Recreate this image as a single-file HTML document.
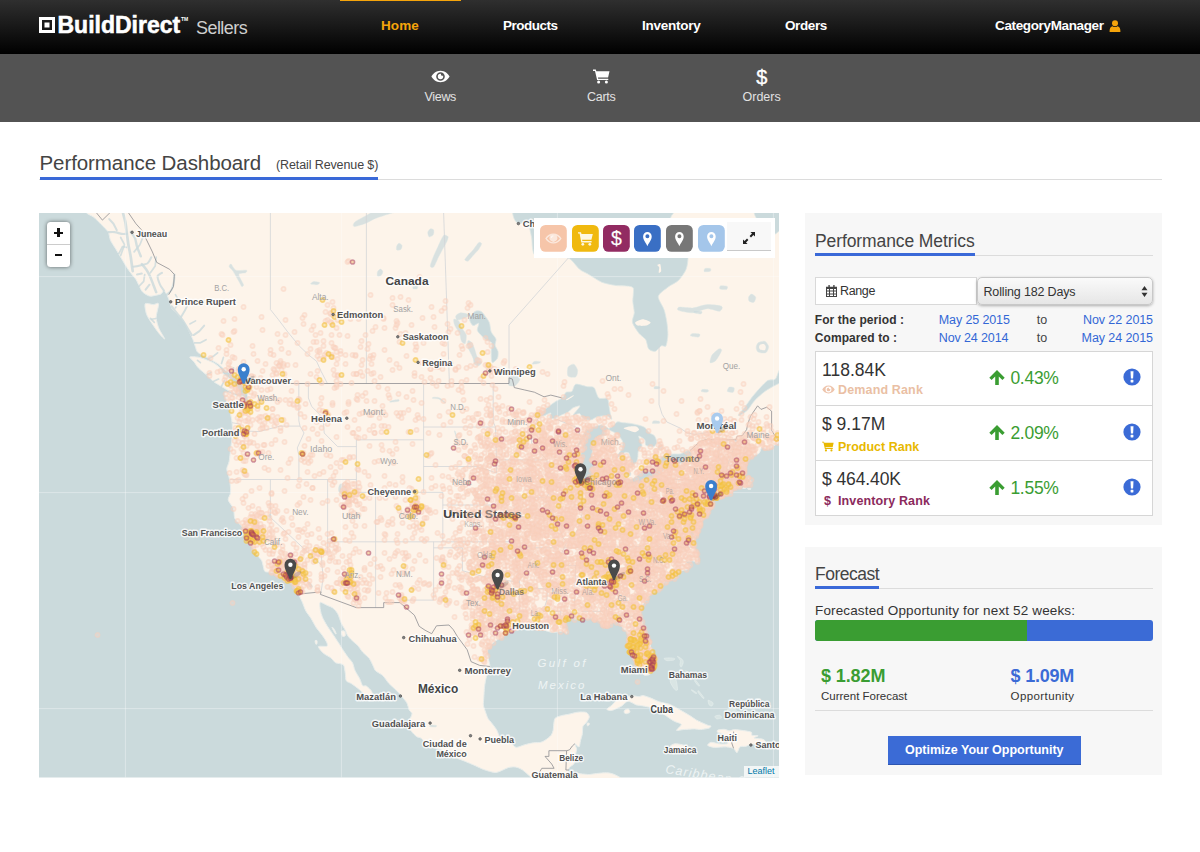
<!DOCTYPE html>
<html lang="en">
<head>
<meta charset="utf-8">
<title>BuildDirect Sellers - Performance Dashboard</title>
<style>
*{box-sizing:border-box;margin:0;padding:0}
html,body{width:1200px;height:852px;background:#fff;overflow:hidden}
body{position:relative;font-family:"Liberation Sans",sans-serif;color:#333;font-size:13px}
.abs{position:absolute;white-space:nowrap;line-height:1}
#hdr{position:absolute;left:0;top:0;width:1200px;height:53.5px;background:linear-gradient(#2f2f2f 0%,#1a1a1a 45%,#000 100%)}
#sub{position:absolute;left:0;top:53.5px;width:1200px;height:68px;background:#535353}
#homebar{position:absolute;left:340px;top:0;width:121px;height:1.3px;background:#f5a40b}
.nav{font-weight:bold;font-size:13.5px;color:#fff;top:19px}
.snav{font-size:12.5px;color:#e2e2e2;top:91px}
#logo{left:57.5px;top:14px;font-weight:bold;font-size:23px;letter-spacing:0;color:#fff;-webkit-text-stroke:.55px #fff}
#sellers{left:196px;top:19px;font-size:18px;color:#cfcfcf;letter-spacing:-0.55px}
.panel{position:absolute;left:805px;width:357px;background:#f7f7f7}
.hline{position:absolute;height:1px;background:#dcdcdc}
.bline{position:absolute;height:3px;background:#3a69d8}
.h2{font-size:17.5px;color:#444;letter-spacing:-.1px}
.blue{color:#3367d6}
.b{font-weight:bold}
</style>
</head>
<body>
<div id="hdr"></div>
<div id="homebar"></div>
<div id="sub"></div>

<!-- logo -->
<svg class="abs" style="left:39.300px;top:17.300px" width="16" height="16" viewBox="0 0 16 16"><path fill="#fff" fill-rule="evenodd" d="M0 0h16v16H0zM3 3v10h10V3zM5.5 5.500h5v5h-5z"/></svg>
<div id="logo" class="abs">BuildDirect</div>
<div class="abs" style="left:181px;top:17px;font-size:5px;color:#fff;font-weight:bold">TM</div>
<div id="sellers" class="abs">Sellers</div>

<div class="abs nav" style="left:381px;letter-spacing:.12px;color:#f5a40b">Home</div>
<div class="abs nav" style="left:503px;letter-spacing:-.5px">Products</div>
<div class="abs nav" style="left:642px;letter-spacing:-.26px">Inventory</div>
<div class="abs nav" style="left:785px;letter-spacing:-.38px">Orders</div>
<div class="abs nav" style="left:995px;letter-spacing:-.36px">CategoryManager</div>
<svg class="abs" style="left:1109px;top:20px" width="12" height="12" viewBox="0 0 12 12"><circle cx="6" cy="3.2" r="3" fill="#f5a40b"/><path fill="#f5a40b" d="M0.6 12c-.3-3.6 1.2-5.6 3-5.8.7.6 1.5.9 2.4.9s1.700-.3 2.400-.9c1.800.2 3.300 2.200 3 5.800z"/></svg>

<!-- subnav -->
<svg class="abs" style="left:431px;top:70px" width="19" height="13" viewBox="0 0 19 13"><path fill="#fff" fill-rule="evenodd" d="M9.500.8C5.200.8 1.900 3.700.4 6.500c1.500 2.800 4.800 5.700 9.100 5.700s7.600-2.900 9.100-5.700C17.100 3.700 13.800.8 9.500.8zM9.500 2.200a4.300 4.300 0 1 1 0 8.600 4.300 4.300 0 0 1 0-8.600zM9.500 3.800a2.700 2.700 0 1 0 2.700 2.700c0-.3 0-.5-.1-.8a1.500 1.500 0 0 1-2-2c-.2.100-.4.100-.6.100z"/></svg>
<div class="abs snav" style="left:424.5px;letter-spacing:-.32px">Views</div>
<svg class="abs" style="left:593px;top:69px" width="17" height="15" viewBox="0 0 17 15"><path fill="#fff" d="M0 .6h2.800l.5 1.600h13.200l-1.400 6.200H4.900l.3 1.300h10.100v1.400H4.100L2 2H0z"/><circle cx="5.600" cy="13" r="1.500" fill="#fff"/><circle cx="13.400" cy="13" r="1.500" fill="#fff"/></svg>
<div class="abs snav" style="left:587px;letter-spacing:-.28px">Carts</div>
<div class="abs" style="left:756.300px;top:66.500px;font-size:20px;color:#fff;-webkit-text-stroke:.35px #fff">$</div>
<div class="abs snav" style="left:742.5px">Orders</div>

<!-- title -->
<div class="abs" style="left:39.5px;top:153px;font-size:20.5px;letter-spacing:-.08px;color:#444">Performance Dashboard</div>
<div class="abs" style="left:276px;top:159px;font-size:12.5px;letter-spacing:-.11px;color:#444">(Retail Revenue $)</div>
<div class="hline" style="left:39px;top:179px;width:1123px"></div>
<div class="bline" style="left:39.500px;top:176.500px;width:338.500px"></div>

<svg class="abs" style="left:38.5px;top:213px" width="740.5" height="564.5" viewBox="38.5 213 740.5 564.5">
<rect x="38.5" y="213" width="740.5" height="564.5" fill="#cbdadc"/>
<g fill="#fdf4ea" stroke="#e9eeec" stroke-width="1" stroke-linejoin="round">
<path d="M82.7 200.2C-8.7 201.7 83.3 209.4 84.7 211.6C86.0 213.9 91.2 215.6 93.3 217.3C95.4 219.0 99.1 222.8 101.0 224.7C102.8 226.6 106.5 230.0 107.7 232.1C108.9 234.1 109.0 238.2 110.0 240.4C111.0 242.6 114.0 246.9 115.4 249.2C116.8 251.5 119.2 255.6 120.7 258.0C122.1 260.4 125.1 265.6 126.4 267.6C127.7 269.6 129.5 272.1 130.7 273.6C131.9 275.2 134.5 278.0 135.5 279.6C136.6 281.3 138.0 284.7 138.9 286.4C139.8 288.0 140.9 291.0 142.3 292.2C143.6 293.5 147.4 295.7 149.0 296.1C150.6 296.5 153.2 295.7 154.7 295.4C156.2 295.1 159.4 294.5 160.5 293.9C161.6 293.3 162.6 290.5 163.4 290.6C164.1 290.7 165.5 293.3 166.3 294.7C167.0 296.1 168.5 299.6 169.1 301.4C169.8 303.1 170.2 306.4 171.1 307.9C171.9 309.4 174.2 311.5 175.4 312.8C176.5 314.0 178.6 316.4 179.7 317.6C180.8 318.9 182.9 320.7 184.0 322.4C185.1 324.2 187.2 328.9 188.3 331.1C189.4 333.4 191.6 337.6 192.5 339.7C193.3 341.9 194.5 345.9 195.1 347.5C195.6 349.1 196.1 351.1 197.0 352.1C197.8 353.1 200.0 354.1 201.8 355.1C203.5 356.1 208.3 358.5 210.4 359.7C212.5 360.9 216.3 362.9 218.1 364.2C219.8 365.5 222.1 368.1 223.9 369.4C225.6 370.8 229.7 373.5 231.5 374.6C233.4 375.8 237.1 377.2 238.3 378.3C239.4 379.5 239.3 382.2 240.2 383.5C241.0 384.7 244.1 386.3 245.0 387.9C245.8 389.4 246.5 393.0 246.9 395.1C247.3 397.1 248.1 401.7 247.9 403.7C247.6 405.6 245.7 409.2 245.0 410.1C244.2 410.9 242.2 411.1 242.1 410.1C242.0 409.0 243.9 404.0 244.0 402.3C244.1 400.5 243.9 397.4 243.1 396.5C242.2 395.7 239.7 396.4 237.3 395.8C234.9 395.2 226.3 391.7 224.8 392.2C223.3 392.7 225.1 396.8 225.8 399.4C226.4 402.0 228.9 409.2 229.6 412.2C230.4 415.1 231.2 419.3 231.5 422.0C231.8 424.7 232.1 430.0 232.0 433.0C231.9 436.0 231.0 441.6 230.6 445.2C230.1 448.9 229.2 458.1 228.7 461.2C228.1 464.4 226.2 466.8 226.3 469.1C226.3 471.5 228.6 476.5 229.1 479.5C229.6 482.6 230.3 489.7 230.1 492.4C229.9 495.0 227.3 497.8 227.7 500.0C228.1 502.1 232.1 506.3 233.0 508.7C233.8 511.2 233.4 516.4 234.4 518.7C235.5 520.9 239.6 524.3 241.1 526.0C242.6 527.8 244.7 531.6 245.9 532.1C247.2 532.6 250.2 529.2 250.7 529.7C251.2 530.2 250.3 535.0 249.8 535.8C249.2 536.5 246.8 535.2 246.4 535.8C246.0 536.3 246.3 539.1 246.9 540.0C247.5 540.8 250.1 541.5 250.7 542.4C251.4 543.2 250.9 545.0 251.7 546.6C252.4 548.2 255.2 553.1 256.5 554.9C257.7 556.8 260.4 558.8 261.3 560.8C262.2 562.8 263.1 568.8 263.7 570.2C264.3 571.6 264.4 571.6 265.6 571.9C266.8 572.3 271.3 572.0 272.8 572.5C274.4 573.0 276.1 575.2 277.6 575.8C279.1 576.4 283.3 576.6 284.3 577.2C285.3 577.7 284.5 579.5 285.3 580.1C286.0 580.7 288.7 580.7 290.1 581.8C291.5 582.9 294.9 587.1 295.9 588.7C296.9 590.2 297.0 592.1 297.8 593.8C298.5 595.5 300.6 599.5 301.6 601.8C302.6 604.0 304.3 609.2 305.5 611.3C306.6 613.4 308.9 615.9 310.3 618.0C311.6 620.2 314.6 625.9 316.0 628.0C317.4 630.1 319.6 632.3 320.8 634.0C322.1 635.8 324.9 639.6 325.6 641.2C326.4 642.7 327.6 645.3 326.6 646.1C325.6 646.8 318.4 645.7 317.9 646.6C317.4 647.5 321.1 651.6 322.7 653.1C324.4 654.6 328.8 656.7 330.4 657.9C332.0 659.2 333.6 661.9 335.2 662.8C336.8 663.7 341.6 663.5 342.9 664.9C344.1 666.3 344.4 671.4 344.8 673.4C345.2 675.5 344.9 679.5 345.8 680.8C346.6 682.2 349.4 682.5 351.5 684.0C353.7 685.5 360.2 690.5 362.1 692.4C364.0 694.3 365.2 698.4 366.4 698.9C367.6 699.4 370.6 697.0 371.2 696.1C371.8 695.1 371.9 692.7 371.2 691.4C370.5 690.1 367.1 686.9 365.9 686.1C364.7 685.4 363.0 686.5 362.1 685.6C361.2 684.6 360.2 680.7 359.2 678.7C358.2 676.7 355.3 672.3 354.4 670.2C353.5 668.2 352.9 664.4 352.0 662.8C351.1 661.1 348.8 658.8 347.7 657.4C346.6 656.0 345.0 653.7 343.9 652.0C342.7 650.3 340.4 646.5 339.1 644.4C337.7 642.3 334.9 638.1 333.3 635.7C331.7 633.3 328.1 628.2 326.6 625.8C325.1 623.3 322.6 618.9 321.8 616.9C320.9 614.9 320.2 612.0 319.9 610.2C319.5 608.4 319.1 603.8 319.4 602.9C319.6 601.9 320.7 602.5 321.8 602.9C322.8 603.3 326.2 605.1 327.5 605.7C328.9 606.4 331.1 606.9 332.3 608.0C333.6 609.0 336.0 611.5 337.1 613.6C338.3 615.6 340.0 621.4 341.0 623.6C342.0 625.7 344.0 628.6 344.8 630.2C345.6 631.8 346.1 634.1 347.2 635.7C348.3 637.3 352.1 641.0 353.5 642.2C354.8 643.5 356.2 644.2 357.3 645.5C358.4 646.8 360.6 650.3 362.1 652.0C363.6 653.7 367.4 656.7 368.8 658.5C370.2 660.3 371.8 664.4 372.7 666.0C373.5 667.6 373.8 669.5 375.1 670.8C376.3 672.0 380.6 674.0 382.3 675.6C383.9 677.1 386.3 681.0 388.0 683.0C389.8 684.9 394.1 688.7 395.7 690.3C397.3 691.9 399.1 693.9 400.5 695.5C401.9 697.2 405.2 700.9 406.3 702.8C407.3 704.7 408.0 708.7 408.7 710.1C409.3 711.5 411.5 712.4 411.5 713.7C411.6 715.0 409.1 719.3 409.1 720.4C409.1 721.5 411.8 721.4 411.5 721.9C411.3 722.5 407.3 723.2 407.2 724.5C407.2 725.8 409.9 730.1 411.1 731.6C412.2 733.2 415.1 735.9 416.3 736.7C417.6 737.6 419.1 737.1 420.7 738.3C422.2 739.5 425.7 744.4 428.3 745.9C431.0 747.3 438.4 748.7 440.8 749.6C443.2 750.5 445.0 752.0 446.6 752.9C448.2 753.9 451.2 755.9 453.3 757.0C455.4 758.0 460.0 759.5 462.9 760.7C465.8 761.8 472.8 764.8 475.4 766.0C478.0 767.1 480.4 768.6 483.1 769.5C485.7 770.3 492.3 772.7 495.5 772.5C498.8 772.2 505.5 768.2 508.0 767.5C510.5 766.8 513.1 766.8 514.7 767.0C516.4 767.2 519.0 768.1 520.5 769.0C522.0 769.8 524.9 772.3 526.3 773.5C527.6 774.6 529.7 776.6 531.1 777.9C532.4 779.3 534.6 781.8 536.8 783.9C539.1 786.0 536.9 792.5 548.3 793.8C559.8 795.1 615.4 795.5 625.1 793.8C634.9 792.1 623.8 783.0 623.2 780.9C622.6 778.9 621.7 778.8 620.3 777.9C619.0 777.0 614.5 774.6 612.7 774.0C610.8 773.3 608.1 772.8 605.9 772.8C603.8 772.7 598.6 773.2 596.3 773.5C594.1 773.7 590.5 774.4 588.7 774.5C586.8 774.5 583.4 774.1 581.9 774.0C580.5 773.8 578.5 773.4 577.6 773.5C576.7 773.5 576.0 774.1 575.2 774.2C574.4 774.2 572.3 774.2 571.4 773.8C570.4 773.3 568.3 771.8 568.0 771.0C567.7 770.2 568.3 768.4 569.0 767.5C569.7 766.6 572.5 765.1 573.3 764.0C574.0 762.9 574.5 760.3 574.7 759.0C575.0 757.7 575.0 755.2 575.2 753.9C575.4 752.6 576.3 750.2 576.2 748.9C576.0 747.6 573.9 744.1 574.3 743.8C574.6 743.6 577.8 747.3 578.6 746.9C579.3 746.5 579.6 742.5 580.0 740.8C580.4 739.1 581.6 735.5 581.9 733.7C582.2 731.8 581.9 728.1 582.4 726.5C583.0 725.0 585.4 723.2 586.3 721.9C587.1 720.7 588.9 718.0 588.8 716.8C588.8 715.6 587.3 713.0 585.8 712.4C584.3 711.8 579.5 711.9 577.1 712.2C574.8 712.4 569.6 714.0 567.5 714.4C565.5 714.9 563.0 714.9 561.3 715.5C559.6 716.0 555.6 717.0 554.6 718.3C553.5 719.6 553.4 724.0 553.1 725.5C552.9 727.1 553.0 728.9 552.7 730.1C552.3 731.4 551.8 733.9 550.7 735.2C549.7 736.5 545.9 739.4 544.5 740.3C543.1 741.2 541.7 742.0 540.2 742.3C538.7 742.7 535.0 742.5 533.0 742.8C530.9 743.1 526.6 744.1 524.3 744.7C522.1 745.2 517.6 747.6 515.7 747.4C513.8 747.1 511.7 743.7 509.9 742.8C508.2 742.0 503.7 741.6 502.3 740.8C500.8 740.0 499.9 738.2 499.1 736.7C498.3 735.3 497.1 731.5 496.0 729.6C494.9 727.8 491.9 723.9 490.7 722.4C489.6 721.0 488.2 720.1 487.4 718.3C486.5 716.6 484.6 710.8 484.0 709.1C483.4 707.3 482.9 706.4 482.9 704.9C482.8 703.4 483.2 699.9 483.3 697.6C483.5 695.3 483.7 689.9 484.0 687.2C484.3 684.4 485.2 679.3 485.9 676.6C486.6 673.9 489.0 668.6 489.3 666.5C489.6 664.4 488.6 662.5 488.3 660.6C488.0 658.7 486.8 653.8 486.9 652.0C487.0 650.2 487.8 648.0 488.8 646.6C489.8 645.2 493.1 642.3 494.6 641.2C496.1 640.0 498.7 638.8 500.3 637.9C502.0 637.0 505.6 635.0 507.1 634.0C508.6 633.1 511.4 631.3 511.9 630.2C512.3 629.1 510.2 626.1 510.4 625.8C510.7 625.5 512.7 627.9 513.8 628.0C514.8 628.1 517.0 626.7 518.6 626.3C520.2 626.0 524.0 624.9 526.3 625.0C528.5 625.2 534.0 627.1 535.9 627.4C537.7 627.8 539.4 627.0 540.7 627.4C541.9 627.9 544.0 630.1 545.5 630.8C547.0 631.4 550.7 632.3 552.2 632.4C553.7 632.5 555.6 632.0 557.0 631.9C558.3 631.7 561.5 631.1 562.7 631.3C563.9 631.5 565.7 633.7 566.1 633.5C566.5 633.3 566.2 630.5 565.6 629.7C565.1 628.8 562.0 627.7 561.8 626.9C561.5 626.1 563.7 624.4 563.7 623.6C563.7 622.8 561.6 621.4 561.8 620.8C561.9 620.2 563.3 619.4 564.7 619.1C566.0 618.9 570.8 618.6 572.3 618.6C573.8 618.6 575.5 619.6 576.2 619.1C576.8 618.7 576.8 615.2 577.1 615.2C577.4 615.2 577.6 618.7 578.6 619.1C579.6 619.6 583.1 618.7 584.8 618.6C586.5 618.4 589.7 617.7 591.5 618.0C593.4 618.4 597.8 620.1 599.2 621.1C600.6 622.2 601.6 625.5 602.6 626.1C603.5 626.7 605.2 626.0 606.4 625.6C607.7 625.1 611.0 623.0 612.2 622.5C613.4 621.9 614.6 621.2 615.5 621.4C616.5 621.5 618.4 622.6 619.4 623.6C620.4 624.6 622.2 627.9 623.2 629.1C624.2 630.3 626.4 631.7 627.1 633.0C627.7 634.2 628.5 637.3 628.5 639.0C628.5 640.6 626.8 644.5 627.1 645.5C627.3 646.5 630.2 645.9 630.4 646.6C630.7 647.3 628.7 649.5 629.0 650.9C629.3 652.3 632.0 656.1 632.8 657.4C633.6 658.7 634.7 660.2 635.2 661.2C635.7 662.1 635.8 663.9 636.7 664.9C637.5 665.9 640.6 667.9 641.5 669.2C642.3 670.5 642.5 674.3 643.4 675.0C644.2 675.8 647.3 675.2 648.2 675.0C649.0 674.8 649.7 674.1 650.1 673.4C650.5 672.8 651.2 670.9 651.5 670.2C651.9 669.5 652.5 669.5 652.8 668.1C653.1 666.7 653.7 661.5 653.6 659.5C653.6 657.6 653.0 654.8 652.5 653.1C652.0 651.4 650.6 648.3 650.1 646.6C649.6 644.9 649.3 641.8 648.7 640.1C648.0 638.4 646.2 635.6 645.3 633.5C644.4 631.4 642.6 625.6 641.9 623.6C641.3 621.6 640.7 619.6 640.5 618.0C640.2 616.4 639.8 613.1 640.0 611.3C640.3 609.6 641.7 606.1 642.4 604.6C643.1 603.1 644.3 601.4 645.3 600.1C646.3 598.7 648.8 595.5 650.1 594.4C651.3 593.3 653.5 592.4 654.9 591.5C656.3 590.7 659.5 588.7 660.7 587.5C661.8 586.3 662.7 583.5 663.5 582.4C664.4 581.2 666.1 579.4 667.4 578.9C668.7 578.4 672.1 579.5 673.6 578.6C675.1 577.6 677.2 572.5 678.9 571.4C680.6 570.2 685.2 570.4 686.6 569.6C687.9 568.9 689.6 566.5 689.5 565.5C689.3 564.5 685.2 562.6 685.6 562.0C686.0 561.4 690.9 560.7 692.3 560.8C693.8 560.9 696.0 563.2 696.7 562.6C697.3 562.0 697.6 558.2 697.1 556.1C696.7 554.0 693.9 548.3 693.3 546.6C692.7 544.8 692.9 543.4 692.3 542.7C691.8 542.1 689.3 542.7 689.0 541.8C688.6 540.9 689.5 537.3 689.5 535.8C689.5 534.2 689.7 531.0 689.0 529.7C688.2 528.4 683.8 526.8 683.7 526.0C683.6 525.2 687.5 524.7 688.0 523.6C688.5 522.5 687.5 518.6 687.5 517.4C687.5 516.2 687.4 515.1 688.0 514.3C688.6 513.5 692.0 510.7 692.3 511.2C692.7 511.8 691.1 516.7 690.9 518.7C690.6 520.6 690.0 524.4 690.4 526.0C690.8 527.6 693.5 529.1 693.8 530.9C694.1 532.7 692.3 539.5 692.6 540.0C692.9 540.5 695.2 536.2 696.2 534.5C697.1 532.9 699.4 528.7 700.0 527.2C700.7 525.8 701.0 524.5 701.2 523.6C701.3 522.6 701.4 520.8 701.0 519.9C700.6 518.9 698.7 517.3 698.1 516.2C697.5 515.1 696.5 511.5 696.7 511.2C696.8 510.9 698.3 512.8 699.1 513.7C699.8 514.6 701.3 518.2 702.4 518.0C703.5 517.9 706.6 514.0 707.7 512.5C708.8 510.9 710.1 507.9 710.6 506.2C711.1 504.6 711.5 501.2 711.5 500.0C711.5 498.7 710.4 497.5 710.6 496.8C710.7 496.1 711.9 495.5 712.5 494.9C713.1 494.3 713.6 493.1 714.9 492.4C716.1 491.6 720.2 489.4 722.1 488.9C724.0 488.4 728.0 488.7 729.8 488.5C731.5 488.3 734.7 488.3 735.5 487.5C736.4 486.7 736.1 482.3 736.5 482.1C736.9 481.9 737.9 485.6 738.4 486.0C739.0 486.4 740.1 485.4 740.8 485.3C741.5 485.2 742.5 485.5 743.7 485.3C744.9 485.1 749.1 484.4 749.9 483.8C750.8 483.2 750.7 481.5 750.4 480.8C750.2 480.2 748.1 478.5 748.0 478.6C747.9 478.8 749.8 481.7 749.5 482.1C749.1 482.6 745.9 482.5 745.1 482.1C744.3 481.8 743.8 480.4 743.2 479.5C742.6 478.7 740.2 476.7 740.3 475.7C740.5 474.6 743.9 472.1 744.2 471.1C744.4 470.1 742.3 468.8 742.3 467.8C742.3 466.9 743.5 465.2 744.2 463.9C744.9 462.6 746.5 459.0 747.5 457.9C748.5 456.9 750.4 456.5 751.9 455.9C753.3 455.3 757.3 454.4 758.6 453.3C759.8 452.1 760.3 447.8 761.5 447.3C762.6 446.7 765.7 449.4 767.2 449.3C768.7 449.1 771.5 446.8 773.0 445.9C774.5 445.0 776.7 443.7 778.7 442.5C780.7 441.4 787.1 468.6 788.3 437.1C789.6 405.6 880.1 231.0 788.3 200.2C696.6 169.4 174.2 198.7 82.7 200.2Z"/>
<path d="M189.3 356.9C190.0 356.4 195.9 356.7 198.9 357.4C201.9 358.1 209.6 361.0 212.3 362.4C215.0 363.8 218.2 366.5 219.5 367.9C220.9 369.4 221.3 372.3 222.9 373.9C224.5 375.5 229.7 378.7 231.5 380.5C233.3 382.4 235.9 386.4 236.8 387.9C237.7 389.3 238.4 391.2 238.3 391.9C238.1 392.7 236.7 393.8 235.4 393.6C234.0 393.5 229.6 391.4 227.7 390.5C225.8 389.5 222.8 387.5 221.0 386.4C219.1 385.3 215.2 383.2 213.3 381.7C211.4 380.3 208.6 377.2 206.6 375.4C204.6 373.6 199.6 369.7 197.9 367.9C196.2 366.2 194.7 363.4 193.6 361.9C192.5 360.5 188.6 357.5 189.3 356.9Z"/>
<path d="M144.7 303.8C145.5 302.5 151.1 304.6 152.8 304.6C154.6 304.6 157.7 302.1 158.1 303.8C158.5 305.5 155.6 314.4 155.7 317.6C155.8 320.8 157.4 326.0 158.6 328.8C159.7 331.5 164.3 338.3 164.3 339.0C164.3 339.6 160.2 335.4 158.6 333.5C157.0 331.5 153.5 326.5 151.9 324.0C150.2 321.5 147.0 317.0 146.1 314.4C145.2 311.8 143.8 305.1 144.7 303.8Z"/>
<path d="M606.4 709.4C606.5 708.6 610.5 706.0 611.7 704.9C612.9 703.8 614.0 701.7 615.5 700.8C617.0 699.8 621.2 698.3 623.2 697.6C625.2 697.0 629.2 696.0 631.2 695.9C633.2 695.7 637.1 696.6 638.6 696.6C640.0 696.5 641.0 695.4 642.4 695.5C643.8 695.7 647.0 696.8 649.1 697.6C651.3 698.4 656.1 700.9 658.7 701.8C661.4 702.7 666.5 703.3 669.3 704.4C672.0 705.5 677.1 708.5 679.9 710.1C682.6 711.6 688.4 715.0 690.4 716.3C692.5 717.6 693.6 718.7 695.7 719.9C697.8 721.0 704.8 724.2 706.7 725.0C708.6 725.8 710.0 725.6 710.3 726.0C710.5 726.4 710.0 727.6 708.7 728.1C707.3 728.5 701.9 729.5 700.0 729.6C698.1 729.7 696.0 728.9 693.8 728.9C691.5 728.9 685.0 729.4 682.7 729.6C680.4 729.8 676.3 731.0 676.0 730.3C675.8 729.7 681.1 725.7 680.8 724.5C680.6 723.3 675.7 722.3 674.1 721.4C672.5 720.6 670.3 719.2 668.3 717.8C666.3 716.5 661.2 712.5 658.7 711.1C656.3 709.8 651.7 708.2 649.6 707.5C647.5 706.8 644.2 706.3 642.4 705.9C640.6 705.6 636.9 705.2 635.7 704.9C634.4 704.6 633.9 703.8 632.8 703.4C631.7 702.9 628.6 700.9 627.1 701.3C625.6 701.6 622.8 705.0 621.3 705.9C619.8 706.9 616.9 708.2 615.5 708.8C614.2 709.5 611.9 710.5 610.7 710.6C609.5 710.7 606.3 710.1 606.4 709.4Z"/>
<path d="M624.2 710.1C624.7 709.6 627.3 708.8 628.0 709.1C628.7 709.3 629.7 711.6 629.5 712.2C629.2 712.8 626.8 713.6 626.1 713.7C625.3 713.8 623.9 713.1 623.7 712.7C623.4 712.2 623.6 710.6 624.2 710.1Z"/>
<path d="M669.6 746.2C670.0 745.7 672.5 744.0 674.1 743.8C675.7 743.6 680.0 744.3 681.8 744.7C683.6 745.0 686.9 746.3 688.0 746.9C689.1 747.5 690.8 749.0 690.4 749.4C690.0 749.8 685.9 749.6 684.7 749.9C683.4 750.2 682.2 751.7 680.8 751.7C679.4 751.7 675.3 750.7 674.1 750.1C672.8 749.5 671.8 747.9 671.2 747.4C670.6 746.9 669.2 746.6 669.6 746.2Z"/>
<path d="M717.3 730.1C718.2 729.7 722.5 729.2 724.0 729.3C725.5 729.4 727.5 730.8 728.8 730.8C730.1 730.9 732.2 729.6 734.1 729.6C736.0 729.6 741.0 730.3 743.2 730.6C745.4 731.0 749.8 731.6 750.9 732.2C752.0 732.8 750.5 734.8 751.4 735.2C752.2 735.7 757.3 735.4 757.6 735.7C757.9 736.1 753.1 737.5 753.8 738.0C754.4 738.4 760.8 738.6 762.4 739.3C764.0 739.9 765.8 741.8 766.0 742.8C766.1 743.8 764.2 746.6 763.4 746.9C762.5 747.1 761.2 745.2 759.5 744.9C757.9 744.5 752.8 744.1 750.9 744.3C749.0 744.5 746.6 746.0 745.1 746.4C743.6 746.7 740.5 746.0 739.4 746.9C738.2 747.7 737.3 752.5 736.5 752.7C735.7 752.9 734.5 749.4 733.1 748.6C731.8 747.8 728.4 747.0 725.9 746.9C723.4 746.7 716.4 747.6 713.9 747.4C711.5 747.2 707.6 746.0 707.2 745.4C706.8 744.7 708.9 742.5 710.6 742.3C712.3 742.2 718.0 743.9 720.2 744.0C722.4 744.2 726.9 744.2 727.4 743.3C727.9 742.5 724.5 738.9 724.0 737.8C723.5 736.6 724.4 734.9 723.5 734.2C722.7 733.5 718.1 733.0 717.3 732.5C716.5 731.9 716.4 730.5 717.3 730.1Z"/>
<path d="M718.3 739.8C718.9 739.9 722.5 741.0 723.1 741.3C723.6 741.6 723.2 742.4 722.6 742.3C721.9 742.3 718.8 741.1 718.3 740.8C717.7 740.5 717.6 739.7 718.3 739.8Z"/>
<path d="M776.1 745.2C777.6 744.5 786.2 743.9 788.3 744.0C790.4 744.2 792.0 745.7 792.2 746.4C792.3 747.0 791.3 748.8 789.3 749.2C787.3 749.6 778.5 749.9 776.8 749.4C775.1 748.9 774.6 745.9 776.1 745.2Z"/>
<path d="M586.7 723.0C587.0 722.7 589.0 723.1 589.1 723.5C589.3 723.8 588.0 725.5 587.7 725.7C587.4 726.0 586.9 725.9 586.7 725.5C586.6 725.2 586.4 723.2 586.7 723.0Z"/>
<path d="M711.2 497.2C711.6 496.7 713.3 494.4 714.4 493.9C715.6 493.3 718.6 493.4 720.2 493.0C721.8 492.6 725.4 491.3 726.9 491.1C728.4 490.9 732.1 491.0 732.0 491.5C731.9 491.9 727.7 493.6 725.9 494.3C724.1 495.0 720.1 496.3 718.3 496.8C716.4 497.3 712.9 497.8 712.0 497.8C711.1 497.9 710.9 497.7 711.2 497.2Z"/>
<path d="M747.1 488.5C747.4 488.4 749.8 488.4 750.2 488.5C750.6 488.6 750.3 489.3 749.9 489.4C749.6 489.5 747.9 489.3 747.5 489.2C747.2 489.1 746.7 488.6 747.1 488.5Z"/>
<path d="M742.3 487.9C742.6 487.6 744.7 486.6 745.1 486.6C745.6 486.6 745.9 487.6 745.6 487.9C745.3 488.1 743.2 488.5 742.7 488.5C742.3 488.5 741.9 488.1 742.3 487.9Z"/>
<path d="M341.0 631.3C341.3 630.7 343.8 630.7 344.3 631.3C344.8 631.9 345.1 635.1 344.8 635.7C344.5 636.3 342.4 636.8 341.9 636.2C341.4 635.7 340.7 631.9 341.0 631.3Z"/>
<path d="M331.4 627.4C331.2 626.8 332.7 627.8 333.3 628.5C333.9 629.3 335.5 632.9 335.7 633.5C335.9 634.1 335.3 634.3 334.7 633.5C334.2 632.7 331.6 628.1 331.4 627.4Z"/>
<path d="M314.6 640.6C314.8 640.2 316.2 640.2 316.5 640.6C316.7 641.0 316.7 643.5 316.5 643.9C316.3 644.3 315.3 644.3 315.1 643.9C314.8 643.5 314.4 641.0 314.6 640.6Z"/>
</g>
<g fill="#d9e5e4" stroke="#e6eeec" stroke-width=".6">
<path d="M671.2 675.0C671.8 674.2 673.5 674.7 674.1 675.6C674.7 676.4 675.6 680.0 676.0 681.9C676.4 683.7 677.2 688.8 677.0 689.8C676.7 690.7 675.0 690.3 674.1 689.3C673.2 688.2 670.1 683.7 669.8 681.9C669.4 680.0 670.7 675.8 671.2 675.0Z"/>
<path d="M663.5 658.5C663.8 658.1 667.0 657.9 668.3 657.9C669.7 657.9 673.5 658.2 674.1 658.5C674.7 658.8 674.1 659.8 673.1 660.1C672.1 660.4 667.7 660.8 666.4 660.6C665.2 660.4 663.3 658.8 663.5 658.5Z"/>
<path d="M677.0 656.3C677.2 656.2 681.0 658.7 681.8 659.5C682.5 660.4 682.9 661.8 682.7 662.8C682.6 663.7 681.2 666.8 680.8 667.0C680.4 667.3 679.5 665.7 679.4 664.9C679.2 664.1 680.2 661.7 679.9 660.6C679.5 659.5 676.7 656.5 677.0 656.3Z"/>
<path d="M684.7 670.8C684.8 670.6 688.6 672.3 689.5 673.4C690.3 674.6 690.9 679.0 690.9 679.8C690.9 680.5 689.8 679.9 689.5 679.3C689.1 678.6 688.6 675.6 688.0 674.5C687.4 673.4 684.5 670.9 684.7 670.8Z"/>
<path d="M714.4 716.3C714.8 715.8 718.3 715.0 719.2 715.3C720.1 715.5 721.5 717.4 721.1 717.8C720.8 718.3 717.2 719.1 716.3 718.9C715.5 718.7 714.0 716.7 714.4 716.3Z"/>
<path d="M698.1 690.8C698.8 691.5 702.8 696.7 703.4 697.6C703.9 698.6 703.2 698.8 702.4 698.2C701.7 697.5 698.2 693.4 697.6 692.4C697.1 691.5 697.3 690.2 698.1 690.8Z"/>
<path d="M694.7 679.8C695.4 680.3 698.7 684.8 699.1 685.6C699.4 686.3 698.2 686.1 697.6 685.6C697.0 685.0 694.6 682.1 694.3 681.4C693.9 680.6 694.1 679.2 694.7 679.8Z"/>
<path d="M691.4 689.8C692.0 690.1 695.7 692.5 696.2 692.9C696.7 693.4 695.8 693.7 695.2 693.5C694.6 693.2 691.9 691.3 691.4 690.8C690.9 690.4 690.7 689.5 691.4 689.8Z"/>
<path d="M707.7 700.2C708.2 700.0 712.0 702.1 712.5 702.8C713.0 703.6 712.0 705.7 711.5 705.9C711.0 706.2 709.2 705.7 708.7 704.9C708.2 704.2 707.2 700.5 707.7 700.2Z"/>
<path d="M726.9 709.6C727.8 709.3 733.4 708.9 734.6 709.1C735.7 709.3 736.4 710.9 735.5 711.1C734.7 711.4 729.0 711.3 727.9 711.1C726.7 710.9 726.0 709.8 726.9 709.6Z"/>
<path d="M677.5 675.8C677.8 675.6 680.0 675.6 680.3 675.8C680.6 675.9 680.2 676.7 679.9 676.8C679.5 677.0 677.8 677.0 677.5 676.8C677.1 676.7 677.1 675.9 677.5 675.8Z"/>
</g>
<g fill="#cbdadc" stroke="#dfe8e6" stroke-width=".8" stroke-linejoin="round">
<path d="M511.4 200.2C489.9 201.7 511.5 209.2 511.9 211.6C512.2 214.1 513.0 217.6 513.8 219.1C514.5 220.7 515.9 222.6 517.6 223.2C519.4 223.8 525.5 221.9 527.2 223.8C529.0 225.6 530.4 234.3 531.1 237.5C531.7 240.7 531.5 246.0 532.0 248.3C532.5 250.6 532.8 255.0 534.9 255.4C537.0 255.7 545.3 251.0 548.3 251.0C551.3 251.0 555.2 254.4 557.9 255.4C560.7 256.4 566.7 257.1 569.5 258.9C572.2 260.7 576.8 267.4 579.1 269.3C581.3 271.3 583.9 272.0 586.7 273.6C589.6 275.3 597.4 280.6 601.1 282.2C604.9 283.7 612.3 285.0 615.5 285.5C618.8 286.0 623.8 285.7 626.1 286.0C628.3 286.4 632.0 286.1 632.8 288.1C633.6 290.0 632.2 298.1 632.3 301.4C632.5 304.6 633.8 310.0 633.8 312.8C633.7 315.5 631.2 319.7 631.9 322.4C632.5 325.1 636.8 331.2 638.6 333.5C640.3 335.7 644.0 337.7 645.3 339.7C646.5 341.8 646.9 347.5 648.2 349.0C649.4 350.5 653.3 351.7 654.9 351.3C656.5 350.9 659.3 346.6 660.7 345.9C662.0 345.2 664.6 347.3 665.5 345.9C666.3 344.5 667.2 338.1 667.4 335.1C667.5 332.0 666.9 325.7 666.4 322.4C665.9 319.1 664.7 312.9 663.5 309.5C662.4 306.1 657.3 299.3 657.8 296.4C658.3 293.5 664.8 289.3 667.4 287.2C670.0 285.1 675.6 282.8 677.9 280.5C680.3 278.1 684.4 272.6 685.6 269.3C686.9 266.1 687.8 258.8 687.5 255.4C687.3 252.0 684.9 245.8 683.7 242.9C682.4 240.0 679.6 235.3 677.9 233.0C676.3 230.6 672.2 226.8 671.2 224.7C670.2 222.7 669.8 219.2 670.3 217.3C670.8 215.3 674.2 212.0 675.1 209.8C675.9 207.5 698.3 201.5 677.0 200.2C655.7 199.0 532.8 198.7 511.4 200.2Z"/>
<path d="M750.9 196.4C745.2 198.6 752.9 210.3 753.8 213.5C754.6 216.7 756.1 218.6 757.6 221.0C759.1 223.4 763.3 230.3 765.3 232.1C767.3 233.9 771.1 235.0 773.0 234.8C774.8 234.6 777.9 231.5 779.7 230.2C781.4 228.9 784.8 226.4 786.4 224.7C788.0 223.0 790.9 219.2 792.2 217.3C793.4 215.3 795.3 212.5 796.0 209.8C796.8 207.0 803.8 198.1 797.9 196.4C792.1 194.6 756.6 194.1 750.9 196.4Z"/>
<path fill-opacity=".72" stroke-opacity=".5" d="M481.1 243.8C481.1 243.0 479.4 241.8 478.3 242.6C477.1 243.4 474.0 248.3 472.5 250.1C471.0 251.9 467.8 255.0 466.7 256.3C465.7 257.5 464.2 259.2 464.3 259.8C464.5 260.4 466.5 261.7 467.7 261.0C468.9 260.3 472.1 256.0 473.5 254.5C474.8 253.0 477.3 250.6 478.3 249.2C479.3 247.8 481.1 244.7 481.1 243.8Z"/>
<path d="M537.8 415.7C538.0 414.8 543.2 410.5 545.5 408.6C547.7 406.8 552.9 402.9 555.1 401.5C557.2 400.2 560.4 399.2 561.8 398.0C563.1 396.8 564.4 393.0 565.6 392.2C566.9 391.4 570.1 392.5 571.4 391.5C572.6 390.4 573.2 384.8 575.2 384.2C577.2 383.6 584.4 386.3 586.7 386.7C589.1 387.1 592.0 386.1 593.5 387.6C595.0 389.0 596.5 396.5 598.3 398.0C600.0 399.4 605.5 397.4 606.9 398.7C608.3 400.0 608.4 406.0 608.8 407.9C609.2 409.9 609.5 412.1 609.8 413.6C610.1 415.0 611.7 418.9 611.2 419.2C610.7 419.5 607.9 416.0 605.9 415.7C604.0 415.4 598.3 416.4 596.3 416.9C594.3 417.5 592.3 419.6 590.6 419.9C588.8 420.1 584.4 419.7 582.9 418.9C581.4 418.1 580.4 414.1 579.1 413.6C577.7 413.1 572.8 416.0 572.8 415.0C572.9 414.0 579.6 407.0 579.5 406.1C579.5 405.2 573.9 407.2 572.3 407.9C570.8 408.7 568.9 411.3 567.5 412.2C566.2 413.0 563.5 413.7 561.8 414.6C560.0 415.4 555.7 418.1 554.1 418.5C552.5 418.9 549.8 418.5 549.3 417.8C548.8 417.1 551.0 413.2 550.3 412.9C549.5 412.6 545.2 415.3 543.5 415.7C541.9 416.1 537.5 416.6 537.8 415.7Z"/>
<path d="M608.3 428.9C607.8 428.2 603.1 425.3 601.1 425.0C599.2 424.7 595.2 426.2 593.5 426.8C591.7 427.4 588.7 429.2 587.7 429.6C586.7 429.9 586.6 428.4 585.8 429.6C584.9 430.7 582.1 436.3 581.0 438.5C579.8 440.6 576.9 445.5 577.1 445.9C577.3 446.3 581.2 443.1 582.4 441.9C583.6 440.6 586.3 435.4 586.3 436.0C586.2 436.6 582.7 443.9 581.9 446.6C581.1 449.3 580.5 454.1 580.0 456.6C579.5 459.1 578.2 463.6 578.1 465.9C578.0 468.2 578.7 472.3 579.1 474.4C579.4 476.4 580.4 480.2 581.0 481.5C581.5 482.8 582.5 484.2 583.4 484.4C584.2 484.6 586.6 483.9 587.7 483.1C588.8 482.3 590.7 480.1 591.5 478.2C592.4 476.4 594.0 471.1 594.2 469.1C594.5 467.2 593.8 465.2 593.5 463.2C593.1 461.3 591.5 456.5 591.5 453.9C591.6 451.4 593.3 445.6 593.9 443.9C594.6 442.1 595.5 441.0 596.3 440.5C597.1 440.0 599.6 440.3 600.2 439.8C600.7 439.4 600.3 437.6 600.7 437.1C601.0 436.6 601.9 436.1 602.6 435.7C603.3 435.4 605.6 435.4 605.9 434.6C606.3 433.9 605.1 431.0 605.5 430.3C605.8 429.5 608.9 429.6 608.3 428.9Z"/>
<path d="M608.3 428.9C608.6 428.3 611.6 427.0 612.7 426.1C613.7 425.2 615.2 422.4 616.5 422.0C617.7 421.5 620.5 422.5 622.3 422.7C624.0 422.8 627.9 423.0 629.9 423.4C631.9 423.7 635.7 424.5 637.6 425.0C639.5 425.6 642.8 426.5 644.3 427.5C645.8 428.5 647.9 431.9 649.1 433.0C650.4 434.1 653.0 434.5 653.9 435.7C654.9 437.0 656.5 441.1 656.3 442.5C656.2 444.0 654.4 446.5 653.0 446.8C651.5 447.2 646.4 446.1 645.3 445.2C644.2 444.3 645.3 441.0 644.3 439.8C643.4 438.6 638.5 435.4 638.1 436.1C637.7 436.8 641.5 443.2 641.5 445.2C641.4 447.3 638.1 450.5 637.6 451.9C637.1 453.4 637.7 455.2 637.4 456.6C637.2 458.0 636.5 461.3 635.7 462.6C634.8 463.9 631.6 467.0 630.9 466.5C630.1 466.0 630.2 460.3 629.9 458.6C629.6 456.9 629.1 454.1 628.5 453.3C627.9 452.5 626.1 452.2 625.1 452.3C624.2 452.5 622.4 453.9 621.3 454.6C620.2 455.3 616.9 458.1 616.5 457.9C616.1 457.8 617.8 454.4 618.4 453.3C619.0 452.2 620.8 450.7 621.3 449.3C621.8 447.9 622.3 443.8 622.3 442.5C622.2 441.2 621.6 440.3 620.8 439.1C620.1 438.0 617.8 434.8 616.5 433.7C615.2 432.6 611.8 431.6 610.7 430.9C609.7 430.3 608.1 429.5 608.3 428.9Z"/>
<path d="M620.8 483.1C620.6 482.2 622.5 479.3 623.7 478.9C624.9 478.5 628.2 480.2 629.9 479.8C631.6 479.4 635.0 476.8 636.7 475.7C638.3 474.5 640.7 471.6 642.4 471.1C644.2 470.6 648.3 472.1 650.1 471.7C651.8 471.4 654.0 469.0 655.9 468.5C657.7 468.0 664.0 467.5 664.5 468.1C665.0 468.7 661.2 471.8 659.7 473.1C658.2 474.3 655.0 476.5 653.0 477.6C651.0 478.7 646.3 480.4 644.3 481.5C642.3 482.6 639.5 485.2 637.6 486.0C635.7 486.7 631.6 487.3 629.9 487.3C628.3 487.3 626.3 486.5 625.1 486.0C623.9 485.4 621.0 484.1 620.8 483.1Z"/>
<path d="M655.9 462.6C656.0 461.8 658.6 459.2 659.7 458.2C660.8 457.2 662.7 455.6 664.5 455.0C666.2 454.5 671.1 454.1 673.1 453.9C675.1 453.8 678.0 454.4 679.9 453.9C681.7 453.5 686.1 450.7 687.5 450.6C689.0 450.5 690.5 452.2 690.9 453.3C691.3 454.4 690.8 458.3 690.4 459.3C690.0 460.2 688.5 459.9 687.5 460.3C686.5 460.8 684.1 462.5 682.7 462.8C681.4 463.2 678.8 463.2 677.0 463.1C675.1 462.9 670.1 461.7 668.3 461.6C666.5 461.6 664.3 462.7 663.1 463.0C661.8 463.3 659.7 463.9 658.7 463.9C657.8 463.8 655.7 463.3 655.9 462.6Z"/>
<path fill-opacity=".72" stroke-opacity=".5" d="M626.1 473.7C626.2 473.1 627.5 471.2 628.0 471.1C628.6 471.0 630.2 472.5 630.4 473.1C630.7 473.6 630.4 475.1 629.9 475.4C629.5 475.7 627.6 475.9 627.1 475.7C626.6 475.4 626.0 474.3 626.1 473.7Z"/>
<path d="M737.9 415.0C738.4 414.0 742.3 409.7 744.2 407.2C746.0 404.8 750.3 398.8 752.3 396.2C754.3 393.7 757.6 389.9 759.5 387.9C761.5 385.8 765.2 381.7 767.2 380.5C769.2 379.4 773.3 380.6 774.9 379.1C776.5 377.5 777.9 370.4 779.7 368.7C781.4 367.0 787.2 364.2 788.3 365.7C789.5 367.2 789.0 378.5 788.3 380.5C787.7 382.6 785.4 380.6 783.5 381.3C781.7 381.9 776.4 384.3 773.9 385.7C771.4 387.0 766.9 389.6 764.3 391.5C761.8 393.4 756.5 398.0 754.3 400.4C752.0 402.8 748.9 408.2 747.1 410.1C745.2 412.0 741.5 414.3 740.3 415.0C739.1 415.6 737.4 416.0 737.9 415.0Z"/>
<path d="M492.2 362.7C493.0 362.6 496.3 359.6 497.0 358.2C497.7 356.7 497.8 353.0 497.5 351.3C497.1 349.6 494.8 346.8 494.6 345.2C494.3 343.6 496.0 340.7 495.5 339.0C495.0 337.2 491.6 334.1 490.7 331.9C489.9 329.8 489.7 324.6 488.8 322.4C487.9 320.2 485.1 316.7 484.0 315.2C482.9 313.7 481.4 311.6 480.2 311.2C478.9 310.7 475.8 310.4 474.4 311.5C473.0 312.5 469.4 317.4 469.1 319.2C468.9 321.0 471.3 325.1 472.5 325.6C473.7 326.1 477.7 322.6 478.3 323.2C478.8 323.8 476.4 328.7 476.8 330.3C477.2 332.0 480.1 334.6 481.1 335.8C482.2 337.1 483.7 338.8 485.0 339.7C486.3 340.6 490.5 341.4 491.2 342.8C492.0 344.2 490.8 348.5 490.7 350.5C490.7 352.6 490.7 357.3 490.9 358.9C491.1 360.5 491.4 362.8 492.2 362.7Z"/>
<path fill-opacity=".72" stroke-opacity=".5" d="M478.3 365.7C479.2 365.4 481.4 363.2 481.1 361.9C480.9 360.7 477.2 357.5 476.3 355.9C475.5 354.3 475.0 351.5 474.4 349.8C473.8 348.1 472.4 344.0 471.5 342.8C470.7 341.6 468.3 340.1 467.7 340.5C467.1 340.9 466.5 344.4 466.7 345.9C467.0 347.4 468.9 350.5 469.6 352.1C470.4 353.7 471.9 356.6 472.5 358.2C473.1 359.7 473.2 363.2 473.9 364.2C474.7 365.2 477.3 366.0 478.3 365.7Z"/>
<path fill-opacity=".72" stroke-opacity=".5" d="M464.8 343.6C465.4 342.8 466.1 337.0 465.8 335.1C465.4 333.1 462.9 330.6 461.9 328.8C460.9 326.9 459.2 322.1 458.1 320.8C457.0 319.6 453.8 318.6 453.3 319.2C452.8 319.8 453.5 323.7 454.3 325.6C455.0 327.4 458.2 331.4 459.1 333.5C459.9 335.5 460.2 340.0 461.0 341.3C461.7 342.6 464.2 344.4 464.8 343.6Z"/>
<path fill-opacity=".72" stroke-opacity=".5" d="M457.1 320.0C458.5 320.2 464.4 318.3 465.8 317.6C467.1 316.9 468.4 315.0 467.7 314.4C466.9 313.8 461.6 312.6 460.0 312.8C458.4 313.0 455.6 315.1 455.2 316.0C454.8 316.9 455.8 319.8 457.1 320.0Z"/>
<path fill-opacity=".72" stroke-opacity=".5" d="M447.5 236.6C447.1 235.9 444.5 234.1 443.2 235.3C441.9 236.6 438.8 243.7 437.5 246.5C436.1 249.4 433.7 254.6 432.7 257.2C431.7 259.7 429.7 264.6 429.8 265.9C429.8 267.2 432.1 268.2 433.1 267.1C434.2 266.0 436.7 259.6 437.9 257.2C439.2 254.7 441.6 250.4 442.7 248.3C443.9 246.2 445.9 242.7 446.6 241.1C447.2 239.6 448.0 237.4 447.5 236.6Z"/>
<path fill-opacity=".72" stroke-opacity=".5" d="M428.5 236.8C429.2 237.2 432.0 236.0 432.6 235.1C433.3 234.2 433.6 230.8 433.2 230.0C432.8 229.2 430.4 228.6 429.7 228.9C428.9 229.2 427.4 231.2 427.3 232.3C427.1 233.3 427.8 236.4 428.5 236.8Z"/>
<path fill-opacity=".72" stroke-opacity=".5" d="M353.5 226.6C354.7 226.8 361.1 224.9 364.0 223.8C366.9 222.7 372.2 219.5 375.5 218.2C378.9 216.9 386.8 214.5 389.9 213.5C393.1 212.6 398.9 211.7 399.5 210.7C400.2 209.7 397.2 206.3 394.7 206.0C392.2 205.6 384.1 206.6 380.3 207.9C376.6 209.1 369.3 213.6 365.9 215.4C362.6 217.2 356.0 220.5 354.4 221.9C352.8 223.4 352.2 226.3 353.5 226.6Z"/>
<path fill-opacity=".72" stroke-opacity=".5" d="M396.2 250.0C396.7 250.4 399.7 250.0 400.4 249.4C401.1 248.8 401.8 246.3 401.5 245.5C401.3 244.8 399.3 243.3 398.6 243.3C397.9 243.4 396.5 245.2 396.2 246.1C395.9 247.0 395.7 249.5 396.2 250.0Z"/>
<path fill-opacity=".72" stroke-opacity=".5" d="M377.0 276.0C377.5 276.5 379.9 276.0 380.6 275.4C381.3 274.9 382.4 272.6 382.3 271.7C382.3 270.9 380.7 269.0 380.0 269.0C379.3 269.0 377.4 270.8 377.0 271.7C376.6 272.6 376.5 275.5 377.0 276.0Z"/>
<path fill-opacity=".72" stroke-opacity=".5" d="M412.5 288.7C413.0 289.2 416.1 289.1 416.7 288.7C417.3 288.3 417.7 286.0 417.3 285.6C416.8 285.1 413.7 284.6 413.1 285.1C412.5 285.5 412.0 288.2 412.5 288.7Z"/>
<path fill-opacity=".72" stroke-opacity=".5" d="M310.2 284.1C310.7 284.5 315.6 284.9 316.7 284.7C317.9 284.5 319.6 283.0 319.1 282.6C318.7 282.2 314.3 281.3 313.2 281.5C312.0 281.7 309.7 283.7 310.2 284.1Z"/>
<path fill-opacity=".72" stroke-opacity=".5" d="M228.7 266.7C228.9 267.6 231.2 269.2 232.5 271.1C233.7 273.0 237.1 279.3 238.3 281.3C239.4 283.3 240.5 285.9 241.1 286.4C241.8 286.8 243.4 286.2 243.1 284.7C242.7 283.2 238.0 276.0 238.3 274.5C238.5 273.0 244.0 273.3 245.0 272.8C246.0 272.2 247.2 270.5 245.9 270.2C244.7 269.9 237.4 271.0 235.4 270.2C233.4 269.4 231.4 264.6 230.6 264.1C229.7 263.7 228.4 265.8 228.7 266.7Z"/>
<path fill-opacity=".72" stroke-opacity=".5" d="M567.5 376.1C568.5 377.4 574.0 377.6 575.2 376.9C576.5 376.1 577.4 371.8 577.1 370.2C576.9 368.5 574.5 364.6 573.3 364.2C572.0 363.8 568.3 365.6 567.5 367.2C566.8 368.7 566.5 374.9 567.5 376.1Z"/>
<path fill-opacity=".72" stroke-opacity=".5" d="M508.0 384.9C508.6 386.2 513.2 386.4 514.7 385.7C516.2 384.9 519.4 380.8 519.5 379.1C519.7 377.4 516.9 372.8 515.7 372.4C514.4 372.0 510.9 374.5 509.9 376.1C508.9 377.8 507.4 383.7 508.0 384.9Z"/>
<path fill-opacity=".72" stroke-opacity=".5" d="M531.7 364.1C532.2 364.4 536.6 363.9 537.6 363.6C538.7 363.3 540.5 362.1 540.0 361.8C539.6 361.5 535.2 361.0 534.1 361.3C533.0 361.6 531.2 363.8 531.7 364.1Z"/>
<path fill-opacity=".72" stroke-opacity=".5" d="M726.9 391.5C727.4 392.1 731.8 392.7 732.7 392.2C733.5 391.7 734.1 388.5 733.6 387.9C733.1 387.2 729.7 386.7 728.8 387.1C727.9 387.6 726.4 390.8 726.9 391.5Z"/>
<path fill-opacity=".72" stroke-opacity=".5" d="M709.6 362.7C710.1 363.4 713.9 362.0 715.4 360.4C716.9 358.9 720.8 352.0 721.1 350.5C721.5 349.1 719.5 348.4 718.3 349.0C717.0 349.6 712.7 353.3 711.5 355.1C710.4 356.9 709.1 362.0 709.6 362.7Z"/>
<path fill-opacity=".72" stroke-opacity=".5" d="M757.6 352.1C758.9 352.8 763.9 353.5 765.3 352.8C766.7 352.1 768.3 348.2 768.2 346.7C768.0 345.2 765.7 341.8 764.3 341.3C763.0 340.8 758.7 342.0 757.6 342.8C756.5 343.6 755.7 346.3 755.7 347.5C755.7 348.7 756.4 351.4 757.6 352.1Z"/>
<path fill-opacity=".72" stroke-opacity=".5" d="M748.7 301.2C749.4 301.9 752.6 302.8 753.4 302.3C754.3 301.7 755.5 298.2 755.2 297.2C754.9 296.1 752.0 294.1 751.0 294.1C750.1 294.1 748.4 296.2 748.1 297.2C747.8 298.1 748.0 300.6 748.7 301.2Z"/>
<path fill-opacity=".72" stroke-opacity=".5" d="M677.9 310.3C679.7 311.1 688.6 313.0 692.3 312.8C696.1 312.6 703.2 308.9 706.7 308.7C710.2 308.5 717.3 311.5 719.2 311.2C721.1 310.8 722.8 307.1 721.1 306.3C719.5 305.4 710.5 304.4 706.7 304.6C703.0 304.8 696.0 307.6 692.3 307.9C688.7 308.2 680.8 306.8 678.9 307.1C677.0 307.4 676.2 309.6 677.9 310.3Z"/>
<path fill-opacity=".72" stroke-opacity=".5" d="M693.0 312.5C693.7 313.0 699.0 314.2 700.1 314.0C701.2 313.9 702.1 312.0 701.3 311.5C700.5 311.1 695.2 310.4 694.2 310.5C693.1 310.7 692.2 312.1 693.0 312.5Z"/>
<path fill-opacity=".72" stroke-opacity=".5" d="M690.3 336.1C691.1 336.5 696.8 337.3 698.0 337.1C699.2 336.8 700.0 334.6 699.2 334.2C698.3 333.7 692.6 333.4 691.5 333.7C690.3 333.9 689.4 335.7 690.3 336.1Z"/>
<path fill-opacity=".72" stroke-opacity=".5" d="M719.5 288.9C720.3 289.4 725.1 289.8 726.0 289.5C727.0 289.1 727.4 286.8 726.6 286.3C725.9 285.9 721.0 285.5 720.1 285.8C719.1 286.2 718.7 288.5 719.5 288.9Z"/>
<path fill-opacity=".72" stroke-opacity=".5" d="M703.8 271.7C704.5 272.1 709.0 271.6 709.8 271.2C710.6 270.8 710.5 268.9 709.8 268.5C709.1 268.2 705.2 268.1 704.4 268.5C703.7 268.9 703.2 271.4 703.8 271.7Z"/>
<path fill-opacity=".72" stroke-opacity=".5" d="M698.7 252.4C699.7 252.7 705.4 251.8 706.5 251.3C707.5 250.8 708.0 248.8 707.1 248.5C706.1 248.2 700.4 248.6 699.3 249.1C698.2 249.6 697.8 252.1 698.7 252.4Z"/>
<path fill-opacity=".72" stroke-opacity=".5" d="M701.1 391.7C701.8 392.0 706.2 392.3 707.0 392.1C707.9 391.9 708.3 390.2 707.6 389.9C706.9 389.5 702.5 389.2 701.7 389.4C700.8 389.6 700.4 391.3 701.1 391.7Z"/>
<path fill-opacity=".72" stroke-opacity=".5" d="M653.7 388.7C654.2 389.0 657.7 388.9 658.4 388.7C659.1 388.5 659.6 387.2 659.0 386.9C658.5 386.6 654.9 386.2 654.2 386.4C653.6 386.7 653.1 388.4 653.7 388.7Z"/>
<path fill-opacity=".72" stroke-opacity=".5" d="M652.0 423.4C652.8 423.7 657.9 423.6 658.7 423.4C659.6 423.1 659.5 421.6 658.7 421.3C658.0 420.9 653.8 420.6 653.0 420.9C652.1 421.1 651.3 423.0 652.0 423.4Z"/>
<path fill-opacity=".72" stroke-opacity=".5" d="M657.8 449.3C658.1 449.9 661.1 449.8 661.6 449.3C662.1 448.7 662.0 445.8 661.6 445.2C661.2 444.6 659.2 444.0 658.7 444.6C658.2 445.1 657.4 448.7 657.8 449.3Z"/>
<path fill-opacity=".72" stroke-opacity=".5" d="M716.8 458.6C716.9 459.7 717.9 459.5 718.3 457.9C718.6 456.4 719.2 448.9 719.2 446.6C719.3 444.2 719.0 440.7 718.7 439.8C718.5 438.9 717.5 438.6 717.3 439.8C717.1 441.0 717.4 446.8 717.3 449.3C717.2 451.7 716.7 457.5 716.8 458.6Z"/>
<path fill-opacity=".72" stroke-opacity=".5" d="M338.1 491.1C338.5 492.5 340.9 494.9 341.9 495.5C342.9 496.1 345.1 496.3 345.8 495.5C346.4 494.8 347.1 491.3 346.7 489.8C346.4 488.3 343.9 484.7 342.9 484.0C341.9 483.4 339.7 483.8 339.1 484.7C338.4 485.6 337.7 489.7 338.1 491.1Z"/>
<path fill-opacity=".72" stroke-opacity=".5" d="M643.4 655.8C643.5 656.5 645.2 658.3 645.8 658.5C646.4 658.6 647.8 657.5 648.0 656.9C648.2 656.2 647.6 654.1 647.2 653.6C646.8 653.1 645.3 652.8 644.8 653.1C644.3 653.4 643.2 655.1 643.4 655.8Z"/>
<path fill-opacity=".72" stroke-opacity=".5" d="M554.1 620.8C554.3 621.2 556.2 622.1 557.0 622.1C557.7 622.1 559.7 621.3 559.9 620.8C560.0 620.3 558.6 618.8 557.9 618.6C557.3 618.4 555.6 618.9 555.1 619.1C554.6 619.4 553.8 620.4 554.1 620.8Z"/>
<path fill-opacity=".72" stroke-opacity=".5" d="M429.3 726.5C429.9 726.8 434.2 727.2 435.1 727.1C435.9 726.9 436.6 725.8 436.0 725.5C435.4 725.3 431.1 724.9 430.3 725.0C429.4 725.1 428.7 726.3 429.3 726.5Z"/>
<path fill-opacity=".72" stroke-opacity=".5" d="M268.5 518.0C268.7 518.5 270.2 518.5 270.4 518.0C270.7 517.6 270.7 514.8 270.4 514.3C270.2 513.8 268.7 513.8 268.5 514.3C268.2 514.8 268.2 517.6 268.5 518.0Z"/>
<path fill-opacity=".72" stroke-opacity=".5" d="M307.4 582.9C307.4 583.6 309.1 587.1 309.8 587.5C310.4 588.0 312.2 587.1 312.2 586.4C312.1 585.7 309.9 582.8 309.3 582.4C308.7 581.9 307.3 582.3 307.4 582.9Z"/>
<path fill-opacity=".72" stroke-opacity=".5" d="M432.2 398.6C432.9 398.8 436.6 398.5 438.1 399.0C439.7 399.6 443.2 402.6 444.1 403.0C444.9 403.4 445.4 402.8 444.7 402.1C444.0 401.5 440.3 398.3 438.7 397.7C437.2 397.1 433.6 397.2 432.8 397.3C431.9 397.4 431.5 398.4 432.2 398.6Z"/>
<path fill-opacity=".72" stroke-opacity=".5" d="M454.8 431.5C455.2 432.5 456.9 437.6 457.2 439.1C457.4 440.7 456.8 442.8 456.6 443.3C456.4 443.9 455.8 443.9 455.7 443.3C455.6 442.8 456.2 440.7 456.0 439.1C455.8 437.6 454.1 432.5 453.9 431.5C453.8 430.5 454.4 430.5 454.8 431.5Z"/>
<path fill-opacity=".72" stroke-opacity=".5" d="M389.7 402.2C390.7 402.3 396.9 401.7 398.0 401.3C399.1 401.0 399.0 399.6 398.0 399.6C397.0 399.5 391.4 400.6 390.3 400.9C389.2 401.2 388.7 402.2 389.7 402.2Z"/>
</g>
<g fill="none" stroke="#cbdadc" stroke-opacity=".8" stroke-linecap="round" stroke-linejoin="round">
<path stroke-width="1.7" d="M120.2 255.4 L124.0 244.7 L120.2 237.5"/>
<path stroke-width="1.7" d="M133.6 251.9 L139.4 244.7 L142.3 237.5"/>
<path stroke-width="1.7" d="M149.9 272.8 L154.7 265.9 L155.7 257.2"/>
<path stroke-width="2.0" d="M136.5 274.5 L141.3 273.6"/>
<path stroke-width="2.0" d="M145.1 289.7 L149.0 284.7"/>
<path stroke-width="1.7" d="M174.9 307.9 L178.7 301.4 L174.9 294.7"/>
<path stroke-width="2.0" d="M178.7 324.0 L183.5 328.8"/>
<path stroke-width="1.5" d="M189.3 324.0 L195.1 320.8"/>
<path stroke-width="2.7" d="M132.2 271.1C131.9 269.3 130.8 260.6 130.3 257.2C129.7 253.7 128.4 247.8 127.9 244.7C127.4 241.7 126.8 236.7 126.4 233.9C126.0 231.0 125.5 225.5 125.0 222.9C124.5 220.2 122.9 214.7 122.6 213.5"/>
<path stroke-width="2.4" d="M140.3 256.3C139.8 255.0 137.2 248.8 136.5 246.5C135.7 244.2 135.4 240.3 134.6 238.4C133.8 236.5 130.8 232.9 130.3 232.1"/>
<path stroke-width="2.5" d="M155.7 292.2C155.3 291.3 153.6 286.8 152.8 284.7C152.0 282.6 150.4 278.2 149.5 276.2C148.5 274.2 146.7 270.9 145.6 269.3C144.6 267.8 141.9 264.8 141.3 264.1"/>
<path stroke-width="2.0" d="M132.7 266.7C133.5 266.6 137.5 266.0 139.4 265.5C141.2 265.1 145.6 264.4 147.1 263.3C148.6 262.2 150.4 257.9 150.9 257.2"/>
<path stroke-width="2.2" d="M107.7 232.1C108.6 232.1 112.7 231.8 114.4 232.1C116.2 232.3 119.6 233.7 121.1 233.9C122.7 234.1 125.7 233.9 126.4 233.9"/>
<path stroke-width="2.0" d="M116.3 230.2 L113.0 223.8 L108.7 219.1"/>
<path stroke-width="1.7" d="M118.3 253.6 L122.1 246.5 L125.9 247.4"/>
<path stroke-width="1.7" d="M138.4 286.4 L143.2 281.3 L144.2 274.5"/>
<path stroke-width="2.0" d="M163.4 290.6C162.9 289.8 160.3 286.6 159.5 284.7C158.7 282.8 156.9 277.8 157.1 276.2C157.4 274.7 160.9 273.2 161.5 272.8"/>
<path stroke-width="2.0" d="M166.3 294.7C166.9 294.1 170.1 291.5 171.1 289.7C172.0 288.0 173.1 283.3 173.5 281.3C173.8 279.3 173.9 275.4 173.9 274.5"/>
<path stroke-width="2.2" d="M171.1 306.3C171.8 307.2 175.3 311.7 176.8 313.6C178.3 315.5 181.2 318.8 182.6 320.8C183.9 322.8 186.2 326.9 187.4 328.8C188.5 330.6 190.7 334.2 191.2 335.1"/>
<path stroke-width="1.9" d="M180.7 316.8 L184.5 310.3 L186.4 306.3"/>
<path stroke-width="1.9" d="M193.1 335.1 L198.9 331.1 L203.7 325.6"/>
<path stroke-width="1.7" d="M194.1 342.8 L199.9 342.8 L205.6 339.7"/>
<path stroke-width="1.7" d="M207.5 358.9 L213.3 355.9 L217.1 352.8"/>
<path stroke-width="1.7" d="M221.0 363.4 L222.9 357.4"/>
<path stroke-width="1.7" d="M232.0 374.6 L233.0 367.9"/>
<path stroke-width="1.7" d="M238.3 378.3 L239.7 373.2"/>
<path stroke-width="1.7" d="M197.0 360.4 L199.9 362.7"/>
<path stroke-width="1.7" d="M206.6 374.6 L210.4 372.4"/>
<path stroke-width="1.7" d="M213.3 381.3 L218.1 379.1"/>
<path stroke-width="1.7" d="M221.0 386.4 L223.9 380.5"/>
<path stroke-width="1.7" d="M153.8 322.4 L149.9 318.4"/>
<path stroke-width="1.5" d="M155.7 318.4 L150.9 319.2"/>
</g>
<g fill="#fdf4ea">
<path d="M623.2 428.2C623.3 427.7 627.4 426.6 629.0 426.4C630.6 426.2 634.4 426.0 635.7 426.4C636.9 426.8 638.7 428.8 638.6 429.6C638.4 430.3 636.1 432.2 634.7 432.3C633.4 432.4 629.5 430.8 628.0 430.3C626.5 429.7 623.1 428.7 623.2 428.2Z"/>
<path d="M760.0 349.8C760.8 350.1 763.6 350.6 764.3 350.2C765.0 349.8 765.4 347.5 765.3 346.7C765.2 345.9 764.1 344.3 763.4 344.1C762.6 343.8 760.2 344.3 759.5 344.7C758.9 345.1 758.5 346.8 758.6 347.5C758.6 348.1 759.3 349.4 760.0 349.8Z"/>
<path d="M634.7 322.4C635.4 321.6 640.4 319.2 642.4 319.2C644.4 319.2 649.7 321.6 650.1 322.4C650.5 323.2 646.9 325.2 645.3 325.6C643.7 326.0 639.0 326.0 637.6 325.6C636.2 325.2 634.1 323.2 634.7 322.4Z"/>
<path d="M656.8 265.0C656.9 264.6 659.2 263.4 659.7 264.1C660.2 264.9 660.8 269.9 660.7 271.1C660.5 272.2 658.5 273.2 658.3 272.8C658.0 272.3 658.9 268.6 658.7 267.6C658.5 266.6 656.7 265.5 656.8 265.0Z"/>
<path d="M565.6 399.4C566.4 398.8 571.4 395.8 572.3 395.4C573.3 395.0 573.6 395.6 572.8 396.2C572.1 396.9 567.5 399.7 566.6 400.1C565.6 400.5 564.9 400.0 565.6 399.4Z"/>
</g>
<g stroke="#fff" stroke-opacity=".35" stroke-width="1">
<path d="M124.9 213V777.5"/>
<path d="M340.9 213V777.5"/>
<path d="M556.9 213V777.5"/>
<path d="M772.9 213V777.5"/>
<path d="M38.5 276.6H779.0"/>
<path d="M38.5 492.6H779.0"/>
<path d="M38.5 708.6H779.0"/>
</g>
<g fill="none" stroke="#d3d6d8" stroke-width=".8">
<path d="M269.9 200.2 L269.9 309.5 L277.6 319.2 L287.2 331.9 L298.7 345.9 L308.3 355.1 L316.0 361.2 L320.8 371.7 L326.9 383.5"/>
<path d="M365.9 200.2 L365.9 383.5"/>
<path d="M442.7 200.2 L448.9 383.5"/>
<path d="M508.5 377.9 L508.5 325.1 L567.8 258.0"/>
<path d="M658.5 346.7 L658.5 404.4 L661.6 414.3 L666.4 422.0 L679.9 428.2 L686.6 433.0 L695.2 434.4 L707.7 432.3"/>
<path d="M87.1 200.2 L442.7 200.2"/>
<path d="M231.5 422.7 L239.2 424.0 L243.1 430.9 L258.4 431.6 L279.5 426.1 L299.5 426.1"/>
<path d="M298.3 383.5 L298.3 420.6 L299.5 426.1 L303.5 433.0 L296.8 447.9 L298.4 455.9 L298.4 479.5"/>
<path d="M229.6 479.5 L355.9 479.5"/>
<path d="M269.9 479.5 L269.9 517.4 L321.5 565.5 L322.7 577.2 L320.6 591.9"/>
<path d="M327.1 479.5 L327.1 552.5 L320.8 553.7 L321.5 565.5"/>
<path d="M327.1 541.8 L513.6 541.8"/>
<path d="M307.9 383.5 L307.9 398.0 L311.2 406.5 L322.7 417.8 L323.7 433.0 L337.1 446.6 L355.9 446.6"/>
<path d="M355.9 439.8 L355.9 492.4"/>
<path d="M355.9 439.8 L423.1 439.8"/>
<path d="M355.9 492.4 L442.3 492.4"/>
<path d="M375.1 492.4 L375.1 607.6"/>
<path d="M423.1 383.5 L423.1 492.4"/>
<path d="M423.1 427.0 L495.0 427.0"/>
<path d="M423.1 466.5 L476.3 466.5 L483.1 468.5 L496.0 473.1"/>
<path d="M442.3 492.4 L442.3 541.8"/>
<path d="M442.3 505.0 L507.1 505.0"/>
<path d="M433.1 541.8 L433.1 600.1 L398.6 600.1"/>
<path d="M433.1 547.8 L461.9 547.8 L461.9 570.7 L481.1 576.0 L500.3 579.5 L514.7 581.8 L519.1 582.4"/>
<path d="M519.1 582.4 L519.1 611.3 L523.4 611.3 L521.0 625.8"/>
<path d="M519.1 588.7 L546.9 588.7"/>
<path d="M492.7 383.5 L492.7 422.0 L495.0 427.0 L496.0 459.9 L496.0 473.1"/>
<path d="M496.0 459.9 L546.4 459.9"/>
<path d="M502.3 497.4 L544.5 497.4"/>
<path d="M513.6 505.0 L513.6 547.8 L557.0 547.8"/>
<path d="M513.6 547.8 L515.2 560.8 L519.1 582.4"/>
<path d="M538.7 416.4 L531.1 431.6 L531.1 443.2 L546.4 459.9 L547.4 470.4 L556.0 482.1 L547.4 494.9 L544.5 500.0 L556.0 519.9 L562.7 538.2 L566.6 541.8 L560.8 553.7 L555.1 565.5 L547.4 586.4 L546.9 588.7 L546.4 600.1 L542.6 611.3 L560.3 611.3 L559.9 616.9"/>
<path d="M554.1 418.5 L576.2 427.5 L581.0 438.5"/>
<path d="M581.6 482.8 L581.6 513.7 L577.1 529.7 L576.2 532.1 L566.6 541.8"/>
<path d="M607.9 482.8 L607.9 516.2"/>
<path d="M584.8 482.8 L621.3 483.1"/>
<path d="M555.1 565.5 L612.7 565.5"/>
<path d="M562.7 547.8 L637.6 546.6 L693.3 547.2"/>
<path d="M575.2 565.5 L573.3 619.1"/>
<path d="M600.2 565.5 L605.9 596.7 L605.9 611.3 L581.0 611.3"/>
<path d="M605.9 611.3 L606.9 614.7 L632.8 616.4 L639.5 614.7"/>
<path d="M648.9 475.7 L648.9 508.5 L694.3 508.5"/>
<path d="M656.2 476.0 L656.2 479.5 L698.6 479.5"/>
<path d="M717.8 439.8 L718.7 469.8 L716.3 478.9 L716.3 488.5"/>
<path d="M718.7 469.8 L737.5 470.4"/>
<path d="M716.3 478.9 L732.7 479.3"/>
<path d="M735.5 439.8 L739.9 446.6 L740.6 462.6"/>
<path d="M725.5 469.8 L729.8 457.3 L735.1 443.9 L735.5 439.8"/>
</g>
<g fill="none" stroke="#8e8e92" stroke-width=".8" stroke-linejoin="round">
<path d="M85.6 200.2 L101.9 220.1 L111.5 210.7 L121.1 204.1 L125.9 209.8 L135.5 223.8 L141.3 230.2 L151.9 251.9 L156.2 262.4 L169.1 269.3 L173.9 274.5 L173.0 286.4 L168.2 294.7"/>
<path d="M240.2 383.5 L508.5 383.5 L508.5 377.9 L511.9 379.1 L513.8 387.6 L524.3 390.0 L533.9 392.2 L543.5 396.8 L550.3 395.1 L561.8 398.0"/>
<path d="M689.5 450.6 L699.1 441.9 L704.8 439.8 L735.5 439.8 L736.5 436.4 L741.8 435.7 L746.1 429.6 L747.5 423.4 L749.9 416.4 L757.1 405.8 L760.5 409.4 L766.3 407.2 L771.1 411.2 L771.1 430.3 L774.4 435.7 L775.9 437.8 L778.7 441.2"/>
<path d="M297.6 594.1 L320.6 591.9 L319.9 594.4 L355.7 607.6 L383.2 607.6 L383.2 602.6 L399.5 602.6 L404.3 606.8 L413.9 615.2 L418.7 626.3 L424.5 630.2 L431.2 633.7 L436.0 625.8 L448.5 625.0 L452.8 629.7 L457.1 636.8 L466.7 649.8 L470.6 661.7 L479.2 665.4 L489.3 666.5"/>
<path d="M536.3 783.4 L536.8 776.0 L541.3 768.3 L553.6 768.3 L551.2 764.0 L544.5 756.4 L548.4 756.4 L548.4 750.7 L566.1 750.7 L565.4 770.0"/>
<path d="M566.1 750.7 L569.0 749.9 L571.9 745.9 L574.3 743.8"/>
<path d="M565.4 770.0 L568.5 770.0"/>
<path d="M564.2 784.9 L566.1 782.9 L565.6 778.9 L570.4 776.0 L575.2 772.0"/>
<path d="M733.1 731.6 L733.6 736.7 L731.2 742.8 L733.1 748.4"/>
</g>
<g font-family="Liberation Sans,sans-serif">
<text x="442.7" y="518.0" textLength="78.5" lengthAdjust="spacingAndGlyphs" font-size="11.5" font-weight="bold" fill="#444" stroke="#fff" stroke-opacity=".8" stroke-width="2.800" paint-order="stroke" stroke-linejoin="round">United States</text>
</g>
<defs><marker id="mp" markerUnits="userSpaceOnUse" markerWidth="8" markerHeight="8" refX="4" refY="4"><circle cx="4" cy="4" r="2.1" fill="#fadccd" fill-opacity=".3" stroke="#f9cfbb" stroke-opacity=".5" stroke-width="1.7"/></marker><marker id="my" markerUnits="userSpaceOnUse" markerWidth="8" markerHeight="8" refX="4" refY="4"><circle cx="4" cy="4" r="2.1" fill="#f6d068" fill-opacity=".4" stroke="#f3c240" stroke-opacity=".6" stroke-width="1.7"/></marker><marker id="mv" markerUnits="userSpaceOnUse" markerWidth="8" markerHeight="8" refX="4" refY="4"><circle cx="4" cy="4" r="2.1" fill="#e8963c" fill-opacity=".35" stroke="#a6395f" stroke-opacity=".5" stroke-width="1.5"/></marker></defs><polyline fill="none" stroke="none" points="477,499 533,450 650,576 528,446 572,468 671,515 506,546 331,323 734,455 460,504 617,583 686,521 642,634 518,446 334,348 632,614 669,511 714,473 502,614 627,564 747,460 487,458 516,564 549,553 612,535 621,589 604,525 581,510 670,555 759,442 322,551 607,585 645,538 287,365 597,565 532,467 487,583 703,486 577,543 545,445 567,583 287,579 348,499 485,365 311,534 642,564 612,470 603,444 471,580 622,506 689,541 599,574 696,509 682,519 662,487 575,471 584,595 536,442 633,580 296,574 295,554 738,451 691,501 645,469 653,658 621,571 606,569 570,565 753,447 296,383 610,519 511,556 403,413 601,492 655,590 573,490 686,540 312,429 601,550 556,587 624,471 283,534 517,480 702,479 357,395 332,557 709,473 639,588 601,482 247,527 528,523 494,609 652,493 324,355 632,514 642,507 636,499 299,576 614,615 619,502 522,484 312,488 574,448 619,502 711,467 665,578 494,507 668,454 480,459 724,446 474,633 642,658 636,528 573,519 582,559 603,591 646,664 549,514 647,571 348,261 486,472 632,495 739,486 631,517 566,605 623,582 568,612 604,502 561,431 688,551 518,527 540,430 719,485 467,308 579,477 499,507 649,486 668,460 537,563 630,480 570,559 674,531 598,456 547,445 304,564 703,506 564,426 612,468 547,589 659,472 698,520 540,536 684,560 670,542 627,470 439,602 647,647 677,505 585,508 616,480 563,466 283,382 573,485 735,479 588,567 590,597 381,520 514,562 636,666 576,503 753,438 745,459 648,668 406,557 685,503 727,492 701,494 612,472 621,605 588,483 600,531 341,460 605,546 691,490 592,535 306,542 325,416 541,591 643,506 716,459 244,404 499,634 491,524 510,475 522,553 606,560 490,367 628,559 590,596 557,489 517,563 726,452 664,551 520,598 633,624 680,501 546,536 347,262 617,470 495,626 546,626 624,502 563,556 498,563 260,528 483,612 473,556 457,474 544,448 474,616 518,566 336,550 499,548 639,572 253,549 578,420 490,445 695,515 559,469 612,531 288,571 250,532 628,535 505,516 601,601 573,504 606,604 528,567 588,480 587,528 534,611 560,518 528,463 545,484 607,473 592,459 469,433 627,564 639,575 621,573 489,594 624,543 607,489 664,535 566,525 612,450 771,447 700,511 603,624 650,661 532,487 518,500 367,371 275,506 538,480 283,561 583,573 754,438 596,457 554,510 491,600 548,560 300,573 504,555 499,432 560,497 601,596 470,602 659,582 549,505 718,490 697,508 720,462 488,605 529,402 515,485 592,502 469,466 530,428 542,450 494,484 285,539 695,489 513,610 520,554 718,472 274,426 625,506 491,478 727,459 658,556 624,583 295,578 640,596 358,470 631,641 556,519 624,570 704,490 593,481 504,521 633,652 314,560 530,482 749,433 545,466 582,443 693,490 527,488 555,443 268,503 714,491 480,441 641,653 707,510 590,520 517,523 498,601 648,504 611,613 695,473 548,528 629,629 584,557 533,477 320,404 576,433 540,470 542,543 506,501 414,376 696,526 615,517 593,498 601,503 462,475 566,435 517,560 441,560 682,522 521,600 636,555 506,561 743,384 472,561 568,526 301,460 565,591 361,365 451,385 504,489 349,501 539,500 563,534 538,505 494,479 609,548 658,466 587,502 719,449 269,550 593,455 690,469 544,574 324,576 404,601 643,577 554,481 660,588 558,535 588,552 592,426 605,447 620,464 732,471 488,642 521,605 518,625 232,398 608,596 597,518 569,524 579,599 600,492 626,569 449,582 537,525 539,442 558,502 576,491 547,470 252,506 636,530 291,575 236,481 321,398 511,472 635,552 458,500 554,622 492,611 505,470 710,507 724,459 662,471 719,454 717,459 488,368 442,557 667,482 705,490 721,457 572,512 643,598 677,506 482,531 705,433 491,445 648,575 666,526 740,476 289,563 583,616 598,519 676,487 584,582 645,559 583,443 591,525 516,463 518,610 691,491 726,494 704,443 691,542 674,510 504,552 578,462 473,602 647,585 501,457 681,518 666,482 491,568 654,661 593,448 728,482 715,476 500,518 431,453 634,640 632,503 448,477 566,493 614,511 636,656 362,360 621,448 497,561 353,374 531,466 636,536 641,500 547,589 535,506 654,531 579,489 634,498 569,488 491,422 632,496 591,492 553,478 503,623 553,502 610,611 496,496 645,419 687,531 638,499 554,422 358,595 336,544 500,444 323,341 481,446 515,554 472,611 370,485 632,555 612,440 657,518 554,535 646,659 675,500 442,561 500,604 483,627 385,535 485,486 253,534 719,433 537,564 292,560 560,480 659,524 342,491 255,526 669,509 526,442 524,537 609,579 561,546 677,464 644,596 697,559 526,464 490,541 544,609 545,625 695,512 316,422 518,578 739,468 447,386 692,451 559,442 543,448 725,430 664,499 618,554 494,552 497,579 417,583 678,561 715,458 727,426 282,546 601,494 500,489 693,433 735,481 366,401 574,513 253,530 630,644 555,476 348,502 603,626 475,629 529,527 726,457 742,454 594,543 651,548 615,602 480,488 283,564 691,515 620,552 571,494 705,458 345,355 491,481 648,431 269,506 515,476 597,550 678,492 586,435 356,584 475,491 444,344 254,520 590,479 601,586 356,437 732,489 257,361 748,453 666,527 507,631 620,466 352,500 524,505 414,533 400,493 661,580 497,540 661,489 438,367 312,488 233,433 616,597 300,414 551,423 654,526 686,549 508,468 638,626 532,447 272,409 678,539 577,496 668,561 601,531 600,452 450,509 629,489 547,486 733,480 493,537 556,539 529,569 673,460 655,458 499,555 551,468 340,579 610,493 505,586 685,545 604,515 580,563 307,354 460,540 635,607 663,511 492,607 652,513 620,594 555,560 684,499 543,509 584,485 612,588 552,568 660,557 573,444 666,492 472,510 535,528 643,638 618,509 625,469 768,448 489,462 519,440 580,445 711,475 650,469 552,596 304,315 526,484 327,501 547,475 591,540 634,658 740,460 428,456 579,559 570,539 569,616 580,541 721,411 532,477 654,577 483,661 556,458 747,479 580,559 622,552 559,619 657,497 539,515 631,489 564,541 636,608 508,525 618,519 531,480 469,549 566,460 349,572 233,392 302,575 364,498 656,538 603,479 515,450 608,417 550,621 519,509 623,506 697,438 687,499 687,480 592,592 723,441 480,594 540,440 646,651 539,610 261,513 603,610 503,363 609,531 478,531 700,506 449,488 653,496 582,552 582,457 659,472 644,483 701,518 598,570 495,586 295,580 456,484 557,544 642,636 643,587 382,406 620,477 593,504 508,574 611,512 511,537 672,519 732,447 698,504 466,368 666,489 704,480 500,589 650,547 484,514 533,538 556,446 590,566 502,576 608,518 352,355 616,562 624,620 418,506 580,531 659,464 646,601 709,499 547,453 563,525 395,328 628,644 732,460 506,483 548,467 617,572 497,459 501,550 650,593 683,520 465,469 262,534 304,446 520,618 629,557 699,478 443,489 548,542 631,564 476,534 767,426 699,470 679,431 667,566 709,431 531,529 682,512 347,482 631,639 242,384 330,314 599,544 573,604 654,522 468,564 359,414 683,467 716,453 584,585 633,543 577,525 564,556 545,521 540,512 645,503 512,622 564,467 575,417 430,369 551,485 666,530 499,448 512,598 704,458 514,440 550,427 623,576 524,603 414,373 320,552 657,539 606,548 658,590 487,641 567,455 695,532 465,607 538,567 285,400 556,584 538,538 549,487 694,526 655,479 475,365 615,566 679,441 710,487 695,493 743,471 596,455 667,555 611,404 597,439 677,447 626,590 622,557 502,616 301,581 668,480 549,583 345,495 623,580 486,415 268,470 697,513 636,579 689,494 502,495 640,563 621,588 579,499 416,503 688,505 644,530 610,563 773,437 703,517 704,457 587,494 507,604 451,381 504,589 372,331 608,465 688,484 725,474 678,475 634,647 564,604 517,539 615,547 650,518 559,620 333,591 643,492 714,445 298,486 507,574 651,503 484,611 412,505 602,469 509,517 697,531 500,523 607,469 675,477 226,350 613,593 547,542 537,472 555,569 347,486 402,482 613,519 556,501 328,552 702,481 692,495 593,607 594,550 659,468 587,550 586,537 296,568 521,592 550,480 640,507 476,490 503,498 497,370 554,560 313,342 647,598 601,581 449,505 703,490 548,476 645,539 435,590 553,595 609,522 726,489 463,470 488,587 745,464 676,553 595,497 650,447 595,513 644,547 489,486 676,544 480,438 655,512 380,518 257,446 598,529 548,516 729,477 461,580 522,413 653,572 654,498 719,466 385,598 275,513 423,492 710,505 646,667 732,433 317,351 647,558 303,497 578,564 577,591 638,485 621,479 545,421 690,521 238,480 556,577 604,570 490,415 456,603 637,472 498,500 532,454 573,540 629,583 710,439 481,524 636,659 501,484 643,481 494,542 715,491 656,531 482,645 588,566 564,462 682,556 563,564 674,579 520,539 533,471 639,626 622,472 393,570 483,443 481,469 543,519 624,534 539,464 568,478 259,402 593,470 516,517 336,583 519,527 399,585 599,493 685,493 604,617 724,485 627,495 617,490 256,516 412,569 536,534 686,524 639,514 697,494 680,540 358,606 627,506 615,517 317,587 261,534 592,490 302,574 669,508 598,468 594,462 631,520 702,491 520,440 487,342 735,453 662,576 486,577 614,508 656,528 261,513 652,456 655,560 479,477 651,486 607,464 676,530 533,433 692,522 655,451 293,405 696,502 510,559 257,528 470,452 640,620 675,513 611,575 250,522 712,474 494,509 652,661 583,437 609,512 667,557 411,516 534,446 544,564 700,399 488,497 494,458 596,563 544,441 598,542 337,320 493,643 700,501 576,445 534,431 595,617 494,369 630,575 689,561 635,616 584,560 578,602 611,597 678,486 620,535 604,531 751,457 562,535 481,561 595,443 692,545 632,553 637,642 666,565 585,542 565,462 304,548 463,593 744,485 380,566 644,578 692,483 488,496 702,493 593,524 592,546 542,462 577,512 679,469 484,608 606,579 559,514 530,491 610,500 554,584 622,502 652,556 708,504 552,472 630,489 570,521 350,490 293,574 694,520 704,497 648,578 252,420 631,539 565,443 577,568 465,546 734,457 708,478 252,517 599,579 667,550 614,517 617,518 621,473 482,503 512,526 294,587 595,426 579,539 669,476 308,458 589,520 240,371 660,488 690,529 608,498 716,442 592,447 474,549 499,412 619,509 542,430 606,561 349,505 518,451 568,526 629,638 587,534 246,457 668,453 738,460 564,455 454,588 412,538 733,445 336,387 662,516 568,480 567,615 637,658 594,486 602,612 626,613 620,529 669,523 636,639 597,557 563,570 630,603 515,581 551,449 546,527 542,551 554,491 698,491 662,560 693,497 639,581 592,521 575,448 600,550 567,465 666,532 674,508 558,485 542,427 670,473 685,489 345,493 451,468 604,598 660,504 599,545 524,445 521,567 280,428 302,553 331,343 644,640 532,531 647,563 682,521 594,483 687,479 462,523 578,464 687,543 514,481 610,610 506,504 508,495 487,365 558,487 546,624 555,530 734,447 655,529 502,511 523,558 671,577 478,614 622,603 532,512 499,605 619,560 664,513 281,566 514,595 670,578 543,528 290,568 648,501 699,462 697,521 746,449 492,620 571,459 616,512 647,639 544,499 663,573 610,528 548,625 605,463 441,580 518,471 704,426 454,617 717,468 632,569 256,527 685,491 646,553 632,495 487,565 514,547 657,548 618,501 566,427 611,575 572,560 423,419 630,565 565,617 475,505 604,590 492,385 597,496 750,455 689,489 550,497 550,438 596,512 687,494 611,583 717,487 238,398 700,474 696,509 588,516 257,409 603,570 575,571 693,496 421,530 500,550 636,571 610,582 586,570 631,503 491,545 644,453 553,531 554,478 673,535 559,569 536,422 462,488 560,552 723,472 482,424 558,485 443,425 483,383 560,495 688,513 542,519 620,624 269,554 619,582 538,514 600,593 636,485 345,484 704,474 247,421 690,542 684,512 680,561 476,478 666,577 607,626 556,440 508,573 548,542 648,651 563,565 583,519 474,547 656,475 608,524 676,519 566,498 739,471 701,488 314,552 628,580 492,565 625,539 692,558 640,634 509,442 468,519 449,500 253,354 711,466 402,602 313,326 745,482 351,495 553,456 319,474 356,399 663,480 579,544 602,609 538,566 716,491 700,443 481,612 297,583 612,588 614,532 518,545 494,590 530,546 644,528 621,455 568,472 370,356 495,548 521,545 604,472 684,542 672,486 301,557 293,574 472,532 607,569 649,488 586,606 459,355 242,396 609,482 737,444 572,574 637,650 627,482 448,412 559,555 731,476 416,528 679,520 279,564 484,659 395,485 532,568 497,587 600,472 554,598 694,503 225,370 716,453 705,452 669,558 664,528 521,501 466,618 576,603 659,486 687,524 649,659 512,493 629,641 495,444 597,576 496,615 318,554 573,478 685,514 209,373 658,558 637,486 661,512 601,620 371,374 355,490 552,565 344,485 560,605 634,656 632,568 528,564 601,549 739,468 721,496 692,545 713,489 619,558 669,492 520,552 675,521 626,500 536,489 689,500 649,530 384,476 695,528 562,467 637,618 557,518 524,553 738,481 569,472 712,491 604,422 583,575 616,623 548,474 277,571 739,469 673,551 572,590 676,464 296,561 546,499 699,494 638,488 295,584 536,493 600,601 601,528 254,394 668,481 304,462 652,465 415,507 622,503 498,439 548,550 593,557 613,562 503,493 471,477 690,554 621,475 582,558 633,562 650,495 546,513 585,487 285,320 739,482 504,608 234,319 542,453 384,534 342,556 480,487 540,628 606,470 467,575 506,551 605,500 618,563 601,465 440,547 658,501 698,477 619,590 596,586 250,392 670,504 616,569 522,620 394,556 466,577 512,439 476,414 613,515 726,422 243,362 581,522 696,486 268,562 535,528 345,489 637,606 504,549 528,495 517,489 499,481 692,482 626,534 491,517 475,556 614,449 566,570 505,633 622,495 551,465 491,614 529,436 733,474 527,552 640,609 474,657 644,629 498,621 612,557 333,347 297,343 570,514 518,477 698,514 491,573 309,546 673,517 652,562 666,551 571,448 644,596 469,568 611,476 592,562 744,463 532,487 639,527 666,497 665,468 743,483 549,555 479,531 720,493 637,655 326,353 701,462 558,478 584,483 693,503 341,494 660,558 506,616 648,505 725,441 352,584 674,481 491,577 357,469 499,587 618,487 666,493 682,512 594,492 652,549 317,554 505,432 555,627 477,589 286,564 316,550 649,557 556,548 364,568 598,481 490,518 663,391 559,505 536,499 618,479 568,501 470,579 533,484 578,558 606,578 717,479 485,633 472,586 556,438 258,540 486,487 589,477 653,509 474,553 625,480 280,363 711,447 567,508 595,475 408,300 621,549 379,418 646,669 607,471 522,530 520,475 701,492 525,565 568,519 541,440 673,486 463,400 618,484 549,586 243,471 596,517 517,422 504,471 628,618 582,547 667,483 290,579 651,556 645,567 671,482 508,515 628,489 520,573 580,566 526,615 651,524 620,473 678,535 560,536 531,626 246,475 752,448 342,580 641,595 715,457 579,473 694,486 517,542 548,588 614,554 546,559 648,481 432,383 595,530 669,557 491,552 643,498 626,576 528,517 596,457 676,564 266,514 531,590 725,479 345,364 602,596 484,559 475,494 503,605 593,470 568,441 473,540 246,439 651,572 585,608 472,616 649,510 465,445 321,577 649,537 618,486 678,521 599,464 692,489 543,584 608,534 457,333 231,481 604,568 641,506 527,603 650,573 590,482 616,556 581,513 417,503 552,476 755,449 613,574 663,500 686,549 622,557 606,614 249,531 657,463 588,527 605,452 611,486 235,435 604,531 340,384 486,446 543,628 510,461 503,464 628,525 600,564 695,447 518,623 224,380 657,463 700,471 622,483 663,450 495,590 602,475 320,333 317,434 529,558 706,476 686,517 519,625 627,513 209,376 579,522 718,489 349,515 606,526 623,580 579,474 529,524 476,532 492,488 643,671 539,497 277,334 699,516 714,489 679,501 259,513 621,542 539,530 649,478 582,449 698,493 516,513 650,461 645,570 664,489 555,539 541,611 670,509 501,490 684,477 478,414 737,452 494,546 686,476 485,484 421,403 587,609 499,506 642,534 534,587 640,519 629,565 523,472 665,551 660,581 679,528 519,498 647,526 516,413 612,531 586,552 669,471 307,472 700,493 480,594 331,533 679,486 571,436 607,602 565,438 467,602 741,457 578,474 730,439 635,579 278,576 735,488 663,564 545,504 656,499 616,506 560,560 544,585 585,528 648,641 556,613 236,445 580,576 601,553 523,592 245,529 501,608 585,529 391,574 698,459 615,507 530,479 505,497 571,523 562,626 594,619 356,494 645,522 508,534 479,607 635,659 369,446 751,456 588,616 703,440 674,553 655,517 634,565 547,531 293,570 466,409 635,558 694,467 602,441 337,583 559,532 544,434 638,644 503,465 488,573 633,572 595,524 444,562 514,489 585,441 639,659 540,538 492,590 625,509 592,511 621,572 484,471 590,511 428,433 564,490 238,371 461,553 532,587 344,505 307,560 609,576 366,583 663,476 617,563 246,522 606,579 493,442 629,501 704,478 299,580 525,563 736,471 408,410 552,630 682,517 238,391 648,538 558,559 473,590 587,500 586,566 478,549 490,455 649,642 622,459 660,508 518,568 706,458 550,582 699,526 578,564 578,533 610,588 504,566 357,583 648,669 621,486 303,580 618,465 540,413 542,419 516,532 634,489 604,521 597,532 705,470 644,551 628,459 484,620 623,517 640,585 435,486 253,396 734,448 640,485 690,491 540,426 670,512 756,426 518,573 562,467 694,517 611,590 238,369 402,523 609,496 549,447 324,417 343,506 614,617 492,543 585,519 545,481 548,573 411,500 655,574 512,534 708,496 559,463 283,289 544,436 549,517 565,618 597,545 566,464 324,417 607,621 665,535 697,412 249,377 605,566 525,444 653,543 507,537 279,365 396,449 674,561 510,529 568,453 699,523 533,545 317,371 268,539 559,462 603,475 331,355 695,463 600,511 485,590 643,526 545,473 534,608 593,492 509,438 749,447 549,469 548,554 651,525 616,554 604,572 577,544 440,363 299,570 554,482 506,622 469,567 236,458 504,515 550,532 264,538 734,462 549,569 309,581 739,449 297,578 527,478 713,468 614,619 403,516 621,534 369,584 686,464 584,428 485,565 703,477 316,342 584,592 462,481 753,451 692,462 643,647 248,389 576,457 502,499 440,599 519,489 562,595 614,538 628,625 566,448 638,610 598,419 548,506 595,530 513,601 688,515 638,586 396,540 616,580 616,587 303,453 589,588 672,548 634,575 502,556 563,386 674,498 733,471 349,556 699,444 627,594 642,496 293,565 557,489 620,516 597,487 272,416 337,375 584,543 565,500 642,632 327,550 631,486 519,555 667,537 387,602 658,466 648,527 612,547 487,576 384,426 612,486 697,512 486,486 530,459 654,566 637,631 499,481 548,488 630,509 554,628 722,486 638,577 709,508 490,531 656,553 602,381 498,397 599,523 568,528 256,545 529,455 566,632 500,532 458,450 384,328 620,531 613,579 621,497 287,478 569,502 462,487 358,491 484,561 598,527 335,472 302,318 499,437 671,495 520,558 569,581 482,562 524,482 364,580 559,617 630,644 475,448 548,594 552,586 559,476 270,350 421,377 442,369 599,438 579,491 730,483 611,509 549,484 492,457 531,487 562,568 516,542 594,472 533,492 748,478 742,473 711,491 353,513 679,522 669,460 642,585 502,540 728,491 524,599 566,446 597,445 512,517 727,480 551,499 613,517 622,461 624,580 550,502 683,514 663,463 310,500 357,400 669,515 594,572 549,428 563,439 622,536 514,515 471,599 392,454 553,549 574,432 487,476 565,440 629,514 557,525 515,567 483,579 665,552 401,595 672,485 546,618 686,482 711,451 276,574 601,572 630,515 667,549 633,620 638,567 687,504 586,555 680,545 554,581 627,545 530,513 601,509 518,527 611,593 672,560 631,556 383,318 669,461 699,495 558,554 701,469 591,598 674,572 399,368 412,601 519,624 548,444 645,642 742,482 646,645 475,558 587,487 448,332 714,493 715,468 731,433 644,637 666,489 536,460 517,483 599,489 486,478 243,401 719,452 536,628 672,464 641,501 392,298 599,589 708,441 616,493 455,467 316,547 705,482 518,453 271,494 526,592 530,481 569,461 682,478 568,485 546,466 567,585 546,553 661,508 415,514 524,505 646,523 702,496 616,570 682,493 691,506 719,476 682,547 544,581 537,573 248,535 607,432 661,576 489,593 691,511 378,387 358,429 537,517 615,503 662,490 640,590 660,552 710,495 485,593 697,487 490,490 714,486 510,594 389,484 540,576 632,492 602,450 667,462 632,528 396,325 626,501 704,508 589,584 374,433 690,504 663,564 368,344 614,619 589,531 566,511 504,517 449,601 703,492 556,431 543,553 654,558 467,507 300,574 734,475 611,542 556,547 467,543 682,467 700,523 655,572 490,416 665,555 714,489 648,548 529,548 240,381 330,558 594,620 577,418 435,465 683,499 506,583 573,435 644,566 680,516 601,489 539,567 611,620 652,493 502,447 673,487 717,450 624,511 672,482 612,620 545,623 715,466 624,475 598,614 592,460 539,530 719,497 581,476 625,484 693,546 404,573 683,465 470,598 631,648 594,512 441,496 524,551 707,490 566,479 673,515 230,449 238,404 627,472 319,352 603,525 659,583 496,535 541,626 362,396 709,494 513,618 614,587 601,581 536,573 710,435 356,495 658,582 610,591 725,453 488,600 628,604 283,366 669,532 498,583 502,445 728,470 555,463 534,449 488,646 683,518 636,606 574,509 696,518 655,513 495,599 596,588 642,482 525,539 585,588 514,440 652,661 620,508 635,571 684,564 235,428 414,561 623,607 696,533 561,545 275,440 599,587 682,504 642,550 572,460 610,584 644,657 322,563 738,473 570,509 501,470 545,529 673,527 485,508 701,477 682,535 600,471 244,386 535,571 626,470 590,565 527,450 568,449 643,635 269,529 501,589 383,319 699,470 598,510 688,520 550,561 724,441 633,598 697,494 709,466 643,577 643,666 260,429 766,424 671,552 358,515 546,487 500,482 568,515 629,636 689,469 550,439 574,565 685,506 259,537 285,335 730,491 524,448 592,496 637,535 718,442 477,497 654,500 742,466 615,482 660,523 623,469 548,517 736,470 245,421 673,518 605,481 458,513 736,486 488,430 652,668 641,545 530,599 412,519 456,573 459,578 536,416 635,550 556,451 632,513 472,601 566,568 605,546 717,483 649,663 427,510 589,573 542,582 642,513 505,482 588,565 319,350 401,600 469,639 495,485 442,486 515,569 572,418 579,583 537,511 572,519 511,531 537,480 569,520 573,461 700,450 689,495 450,422 577,450 667,475 776,439 565,628 236,437 673,571 639,662 632,515 723,427 538,529 701,472 566,520 526,477 649,592 496,519 734,461 556,560 547,441 640,562 642,654 646,639 635,579 553,508 490,622 375,327 714,466 481,503 726,448 687,550 569,430 512,459 568,528 357,494 592,543 464,447 573,500 543,550 686,548 475,627 611,502 661,447 678,552 492,600 682,478 561,510 611,592 597,443 546,563 478,437 611,587 618,607 441,561 489,628 470,451 706,491 750,485 516,415 590,514 575,591 539,433 704,436 560,544 733,421 608,461 735,484 686,566 396,364 555,480 638,493 599,621 500,499 413,400 682,450 670,470 541,547 542,489 696,464 389,559 621,545 522,512 304,428 525,520 692,539 606,548 676,517 627,465 322,565 621,615 639,628 563,623 653,542 251,376 476,530 647,578 741,470 319,550 504,593 583,589 340,351 615,587 734,487 336,385 512,548 685,488 610,527 571,484 607,586 558,586 674,465 544,447 585,512 346,495 444,598 638,571 500,532 674,526 482,496 746,450 535,446 700,483 408,432 652,384 397,543 497,547 373,373 579,555 492,581 739,487 578,566 610,600 655,534 518,501 436,386 647,637 556,574 690,492 678,554 640,548 717,417 618,518 529,622 535,582 503,543 481,609 307,535 584,614 369,575 679,539 338,562 688,567 695,466 573,517 650,656 491,455 401,573 593,535 609,572 643,568 550,530 501,543 609,571 632,509 557,449 656,579 651,658 545,508 609,461 554,501 247,539 692,472 614,587 743,479 572,505 238,442 604,521 696,494 695,503 679,495 376,522 634,645 468,303 546,466 661,476 512,618 689,529 332,405 576,436 631,576 589,512 673,572 704,472 660,521 513,529 623,572 516,434 353,433 586,584 641,511 711,498 679,507 497,559 684,491 634,637 651,506 731,452 550,574 710,453 638,524 609,538 723,487 693,459 642,484 639,644 601,540 603,447 317,590 447,587 579,463 519,556 502,555 352,585 698,517 709,437 699,486 610,441 521,477 536,498 245,496 722,496 560,442 690,543 654,569 640,634 496,508 696,536 505,494 567,453 537,621 568,447 490,627 540,441 271,421 402,477 433,595 593,577 584,617 730,488 539,525 352,433 603,542 644,658 506,454 649,663 724,448 579,483 344,413 644,646 511,441 491,604 690,529 464,421 254,533 661,550 592,532 671,482 673,564 689,512 564,471 670,502 694,529 430,513 628,553 638,522 486,400 611,555 612,505 567,514 482,623 552,620 255,514 591,471 741,403 349,576 746,456 474,535 559,592 543,407 507,602 481,538 426,518 516,536 513,497 632,572 614,439 602,581 551,488 705,501 591,488 656,525 619,521 747,485 722,462 740,474 612,489 302,532 589,495 469,519 516,498 617,556 694,474 611,524 596,440 593,491 329,561 620,487 564,442 637,491 470,518 546,536 572,522 545,500 691,515 412,444 629,644 332,485 741,438 664,502 555,550 336,364 581,494 478,602 502,420 546,575 580,559 619,555 587,588 580,462 634,492 496,549 691,508 468,491 584,500 538,435 248,508 446,605 757,445 737,478 571,570 600,620 513,515 426,508 600,580 670,486 518,432 526,498 721,457 639,614 613,440 481,544 556,629 719,441 527,471 491,592 556,466 346,495 580,504 670,556 616,575 607,605 542,627 713,469 533,537 631,529 650,524 628,568 239,422 643,450 579,540 622,546 262,425 616,611 664,524 670,554 592,487 626,531 512,413 542,482 720,494 532,523 518,411 719,442 523,594 509,534 724,474 280,470 480,459 569,547 611,518 484,551 492,638 679,571 522,612 301,589 617,560 745,455 613,464 538,615 561,583 646,542 553,544 510,591 523,438 230,345 723,459 513,481 498,485 732,454 573,465 537,575 407,509 695,518 640,490 649,552 648,669 613,529 579,497 511,519 730,494 656,561 671,549 614,520 495,438 489,585 663,522 636,611 614,517 713,483 587,606 268,453 595,525 292,525 702,496 562,529 638,561 675,528 657,540 738,452 629,646 492,599 682,545 689,557 493,558 509,620 549,489 267,419 697,554 586,508 687,525 703,516 551,489 710,465 571,498 552,523 563,624 499,504 254,523 601,594 255,533 607,623 535,533 625,515 586,554 507,503 613,603 540,579 678,571 488,600 570,546 625,480 226,398 543,411 577,477 595,502 544,436 512,607 351,383 739,438 680,475 657,480 675,566 672,494 606,545 571,470 733,482 359,602 597,514 577,570 472,520 642,598 540,566 230,393 490,398 234,441 625,613 513,441 608,597 696,450 754,415 716,495 502,481 633,507 521,480 496,544 529,499 262,541 624,536 543,623 707,451 607,507 694,503 526,461 513,582 637,553 396,321 635,516 548,423 504,522 496,490 601,555 686,510 596,547 503,538 581,481 606,490 419,580 445,364 736,448 672,524 347,336 486,437 588,567 347,486 581,564 498,625 637,595 582,573 678,547 609,546 627,501 647,505 611,616 691,511 648,662 526,527 672,571 602,557 612,470 560,524 730,419 535,488 581,527 646,485 550,439 686,502 472,619 597,591 701,485 561,487 540,562 300,590 605,561 534,515 489,580 349,577 470,305 509,492 607,604 612,532 505,608 653,506 544,572 351,533 720,440 604,475 689,513 453,538 277,511 671,461 657,507 501,593 591,500 497,601 616,587 686,500 453,509 631,465 730,477 374,559 679,550 522,579 704,516 597,519 630,482 526,430 290,556 691,503 738,452 251,544 669,460 355,356 357,584 555,524 564,448 667,484 544,442 597,593 580,437 676,496 555,486 654,477 244,412 634,514 245,376 484,611 689,456 675,572 654,521 562,469 312,455 608,449 523,412 615,571 567,513 690,439 494,446 514,550 638,569 668,542 607,444 530,533 562,489 670,550 323,543 330,467 656,507 673,486 594,501 525,551 664,529 543,528 761,443 355,526 618,488 503,455 550,476 535,422 717,483 703,466 517,563 647,655 606,484 343,568 634,544 665,482 531,479 594,546 564,382 602,582 497,548 653,530 651,555 607,573 541,619 673,554 577,534 478,607 642,521 717,474 695,499 734,477 594,513 734,479 600,472 531,490 397,323 632,604 244,526 472,418 609,562 502,466 591,560 568,422 608,534 327,320 577,615 648,559 493,463 592,510 631,511 769,437 633,645 348,586 654,505 503,470 352,585 248,407 722,446 525,560 527,535 508,586 559,606 652,657 442,536 599,537 704,486 730,455 639,646 555,462 290,400 713,468 629,609 643,542 486,439 665,514 648,468 580,458 678,516 510,514 680,512 569,494 643,493 662,558 276,574 565,549 697,483 617,435 522,617 573,580 636,479 526,576 601,470 611,510 535,594 642,494 715,482 689,469 610,536 649,514 604,563 506,449 724,478 487,509 558,554 616,569 726,480 472,614 633,558 583,616 590,483 476,496 498,619 279,366 689,488 474,596 233,509 354,599 553,595 708,452 443,598 647,588 624,485 567,506 672,464 606,614 532,532 697,481 642,547 712,486 600,551 484,551 660,532 667,522 490,613 702,466 556,448 739,462 635,616 448,541 717,460 591,516 643,567 602,585 644,518 628,514 610,622 421,512 533,468 717,469 571,530 273,551 675,486 632,651 559,502 696,533 506,495 678,489 564,519 458,367 512,462 635,583 608,471 399,511 309,574 582,482 542,428 626,486 525,512 616,569 632,571 595,483 711,453 539,527 647,641 515,431 545,588 298,537 538,533 640,449 275,421 530,511 710,461 680,540 531,513 576,507 741,449 579,460 613,545 272,554 515,415 659,548 643,522 696,460 570,430 586,485 321,580 673,477 705,510 463,539 526,534 630,622 624,509 592,615 245,413 581,539 553,608 643,667 227,383 631,563 589,516 599,469 456,541 726,450 512,458 601,528 709,508 498,441 502,429 557,428 456,548 591,600 518,502 623,486 645,652 603,472 411,508 475,467 424,541 568,454 596,500 739,467 641,599 481,618 551,512 444,598 265,550 687,515 279,559 594,500 570,523 628,633 624,461 526,462 336,381 509,509 271,525 277,402 614,603 701,484 599,534 535,586 619,576 527,503 685,517 602,556 695,502 570,425 558,543 590,545 543,571 524,593 531,567 544,595 459,566 522,547 605,472 647,563 668,559 694,531 522,523 665,484 353,603 609,614 723,480 597,452 695,551 243,461 581,460 483,496 708,506 714,487 623,463 490,457 612,583 587,491 658,530 725,486 634,514 641,441 679,526 655,492 638,664 302,580 654,480 584,531 549,454 604,454 689,495 493,507 343,460 574,485 490,559 556,523 627,579 488,513 523,617 485,581 616,510 629,535 517,530 430,369 572,526 621,496 589,594 566,419 619,600 629,540 514,502 563,479 512,544 695,471 670,519 527,456 506,455 575,558 624,578 261,544 651,401 568,466 633,570 712,474 515,561 683,486 647,574 477,595 623,483 688,537 540,485 617,521 561,511 337,376 670,504 675,531 604,469 462,411 543,446 556,445 637,596 273,538 527,539 600,453 665,498 554,536 501,623 271,573 565,597 691,470 502,532 285,380 657,478 645,586 566,473 639,565 526,598 546,465 529,553 600,493 595,451 711,467 496,563 586,601 524,543 592,461 540,478 647,522 359,487 536,450 386,593 763,433 724,445 583,530 587,425 423,584 486,512 518,576 735,451 488,440 721,492 599,507 611,549 260,453 547,506 591,484 612,586 728,477 237,418 635,601 585,517 468,581 582,547 517,471 556,484 584,558 558,485 274,544 688,517 540,458 561,419 533,427 548,578 238,393 522,421 588,586 665,556 692,493 263,445 609,564 580,493 687,518 502,557 500,537 678,472 587,495 488,513 567,465 548,490 551,522 321,574 475,580 658,556 510,596 725,461 470,562 657,550 507,494 721,445 256,522 530,562 582,439 610,534 370,295 489,465 684,552 568,471 601,499 616,510 487,509 722,496 652,516 671,490 358,483 609,454 636,616 520,604 672,522 656,458 596,524 406,356 745,480 723,446 483,614 498,622 627,547 534,502 494,622 641,563 617,536 716,476 430,454 592,569 400,297 539,523 639,495 371,364 622,574 607,394 652,658 521,549 477,474 676,465 490,520 512,471 602,510 547,485 657,560 557,553 552,528 512,600 561,479 652,666 621,576 358,319 551,487 487,587 591,580 685,500 610,489 628,503 565,434 569,493 678,499 762,445 668,504 642,502 261,417 673,525 751,447 692,501 624,489 291,569 695,555 554,596 620,493 572,566 609,437 678,499 632,645 612,492 525,449 551,507 702,495 726,490 413,526 662,455 679,506 493,495 640,573 263,527 600,442 537,513 496,495 584,568 555,616 602,623 601,572 472,572 561,521 360,347 556,482 477,590 561,565 500,626 235,387 748,457 405,514 482,491 547,504 748,425 645,491 524,461 533,504 611,598 607,565 711,483 586,505 644,537 636,587 404,559 593,616 462,476 488,520 644,456 528,563 287,558 593,445 605,624 637,663 636,586 269,518 665,468 632,564 543,625 580,488 675,555 615,564 529,512 646,565 469,539 591,517 637,531 623,506 583,584 731,464 362,376 504,624 568,520 369,498 283,562 492,579 514,525 734,476 282,569 550,619 666,480 485,475 612,446 571,582 577,467 246,446 652,552 283,522 548,552 465,428 516,462 735,475 559,449 641,659 625,609 344,574 508,520 314,476 578,452 695,489 589,553 552,583 668,492 556,469 560,543 725,459 669,500 474,471 525,598 692,484 602,567 679,535 492,571 692,470 358,438 483,614 545,450 739,455 653,530 525,475 631,545 546,482 679,549 584,485 367,349 765,448 665,539 569,454 720,480 712,503 263,398 514,531 666,517 569,614 387,389 592,618 548,605 519,487 632,578 670,545 503,461 585,590 505,590 629,490 418,589 636,486 350,494 471,475 505,598 610,450 624,600 487,596 516,506 640,665 249,443 631,612 567,475 741,420 637,657 685,459 731,464 591,485 716,436 522,430 631,618 421,539 602,564 389,602 584,491 448,603 554,559 599,533 504,612 485,638 706,505 667,548 487,628 648,642 582,609 704,502 701,514 507,524 620,562 691,512 602,496 438,381 493,471 276,373 474,532 528,518 614,534 660,479 659,536 491,500 612,532 473,491 679,508 596,534 591,493 594,548 691,497 703,502 727,475 614,471 499,519 597,593 681,526 639,578 248,414 519,462 585,438 221,334 671,501 660,444 624,570 541,533 669,473 480,399 631,526 602,522 457,569 486,515 636,473 625,493 638,547 521,574 586,513 692,507 485,338 619,575 595,466 570,437 695,476 639,619 616,497 661,538 672,552 588,500 271,444 472,490 598,523 504,361 569,495 602,472 642,628 620,490 542,445 538,409 692,523 473,420 261,528 480,467 487,549 592,605 326,412 355,549 323,358 713,468 596,461 571,580 691,470 512,564 333,308 553,584 597,503 741,474 608,491 560,567 493,561 742,484 721,478 459,435 622,545 468,533 716,492 462,349 498,609 652,659 339,335 531,467 500,600 548,590 472,627 708,493 587,432 570,459 564,476 675,520 504,554 649,593 549,417 627,595 589,427 520,575 708,476 606,539 610,512 629,506 596,529 602,495 620,489 604,476 625,494 474,573 571,560 575,437 566,503 658,509 614,519 252,534 576,497 562,519 273,564 627,575 501,576 668,477 657,543 299,400 578,486 637,640 633,524 353,553 604,429 465,602 694,512 439,435 551,565 532,534 731,486 724,444 711,468 631,487 636,641 332,302 261,390 600,616 608,537 493,510 538,412 243,529 609,534 581,477 500,624 535,415 385,415 719,462 544,569 586,599 272,539 649,589 591,548 725,464 548,464 475,455 681,513 551,556 534,475 567,534 559,467 672,527 696,464 643,643 521,558 463,497 599,565 704,468 660,524 706,482 548,542 547,443 533,524 597,477 617,498 310,374 497,556 539,512 689,508 644,659 580,544 597,575 485,511 687,486 635,659 644,650 602,530 258,452 599,599 697,452 591,502 556,586 551,501 496,583 541,439 518,537 570,453 391,602 555,455 691,473 488,607 524,501 626,465 625,590 533,436 646,535 327,570 696,450 493,630 567,518 654,570 634,641 566,438 621,487 596,483 656,589 582,539 565,613 695,502 723,485 466,632 374,433 520,506 558,566 674,448 564,495 593,480 527,621 533,550 678,551 288,579 347,427 484,542 741,459 309,587 665,506 529,513 514,563 570,499 581,593 289,571 612,424 666,449 697,514 634,559 430,378 693,479 556,582 653,555 296,584 606,433 531,499 567,516 492,538 495,551 615,456 584,592 617,463 364,472 481,625 295,365 536,531 684,535 629,552 500,624 729,480 627,547 673,476 489,647 334,388 252,537 582,542 532,499 661,543 586,550 502,502 299,503 582,492 680,512 580,486 522,455 557,456 610,523 484,601 669,500 594,499 518,508 484,590 755,439 556,509 240,419 419,527 686,503 628,557 392,370 580,531 710,489 704,459 659,557 651,521 699,509 392,524 686,463 680,501 563,514 670,467 613,542 564,445 677,522 467,543 518,577 571,542 563,465 572,537 527,511 505,501 602,568 702,488 560,560 306,484 523,413 498,408 714,476 247,531 557,431 657,554 648,495 638,563 648,580 744,472 586,538 484,493 272,375 517,555 669,532 310,455 484,554 658,488 496,418 486,606 558,587 648,513 638,498 713,442 251,532 588,499 701,502 619,483 411,325 743,472 650,479 655,528 492,566 662,573 557,560 665,502 497,536 678,502 616,572 471,478 645,574 686,508 681,489 573,499 649,527 332,540 666,514 686,477 581,605 522,510 247,385 557,574 683,513 379,498 628,485 572,472 601,517 600,536 474,632 602,504 742,440 604,451 556,535 648,653 602,545 664,569 536,590 705,477 597,477 355,501 681,515 573,535 636,567 325,312 584,502 667,524 665,506 505,483 642,553 503,508 471,625 657,487 325,321 332,315 509,472 516,552 726,464 574,620 384,553 619,620 254,434 523,527 708,441 482,635 625,594 536,555 664,556 604,476 584,482 574,457 614,513 744,473 656,561 735,458 662,471 555,524 588,604 762,443 636,578 671,466 681,521 504,557 667,455 730,472 717,440 477,496 748,484 720,446 400,334 514,504 686,462 630,647 356,374 498,530 567,421 673,471 718,469 736,475 744,434 677,511 524,560 487,647 471,628 669,527 706,458 535,562 461,382 624,531 670,528 480,567 506,498 495,389 559,609 627,515 638,502 343,507 564,625 524,567 333,476 571,603 624,529 702,467 479,499 659,550 631,524 488,572 544,572 531,502 646,645 665,583 634,499 578,501 708,442 595,461 679,524 579,531 645,465 235,431 590,613 583,603 299,530 562,489 641,555 645,512 596,469 692,470 659,459 743,481 674,493 459,463 549,523 563,580 586,585 525,492 667,552 501,537 489,447 605,477 623,486 476,568 604,619 389,398 635,551 627,472 728,468 625,512 495,435 611,497 245,520 646,598 624,629 575,578 639,596 693,507 613,442 691,510 630,642 338,549 624,486 382,450 657,494 594,520 532,625 624,600 515,579 346,497 656,478 741,477 637,549 688,489 237,521 637,500 329,554 642,635 490,413 579,482 263,538 454,546 644,481 505,516 631,519 461,577 609,463 495,452 567,472 497,553 375,412 566,587 547,454 463,607 636,495 412,504 639,631 363,316 600,474 612,504 544,447 482,629 259,488 714,486 429,584 276,530 550,574 247,428 500,620 667,543 547,553 582,567 631,565 474,629 501,462 250,541 443,401 308,585 522,484 685,557 632,497 547,507 571,536 658,510 650,557 231,376 541,439 618,457 514,425 603,479 740,442 348,404 476,630 676,414 527,511 292,583 580,581 595,609 507,597 553,487 563,523 747,454 655,547 693,489 664,553 656,484 594,500 601,461 600,487 250,517 492,457 561,574 352,495 538,416 665,527 696,504 684,496 530,555 532,516 635,613 588,570 714,497 630,526 614,482 604,418 605,486 310,461 668,505 582,441 344,507 596,572 654,523 565,437 673,468 485,600 629,540 492,458 622,445 519,576 554,585 695,510 402,600 485,502 737,483 491,579 577,548 653,663 316,557 532,601 707,513 241,449 703,442 416,430 384,488 470,426 660,552 554,629 653,586 490,618 729,450 592,479 293,544 555,627 593,595 666,521 475,590 483,616 581,527 659,566 516,510 589,567 659,522 514,610 560,566 346,562 640,666 724,437 742,461 575,490 553,561 697,517 497,523 665,480 550,617 409,527 259,531 268,418 518,559 530,509 328,415 504,570 651,504 694,530 661,554 413,514 483,431 655,497 630,508 702,466 481,528 591,543 326,455 602,604 504,605 629,639 514,501 625,488 599,540 618,557 537,444 632,488 483,480 640,503 293,561 602,449 684,497 569,474 253,377 286,511 664,577 568,482 544,627 613,543 499,516 633,484 606,492 533,454 742,476 236,472 230,402 690,558 480,632 331,588 436,558 522,551 304,417 225,377 593,573 646,669 517,623 452,519 514,432 515,581 705,454 669,533 638,498 595,494 557,620 319,359 331,335 656,524 530,554 502,587 483,580 749,424 241,412 241,405 654,492 458,496 591,512 646,553 596,534 564,583 607,537 650,525 746,448 560,544 608,510 485,537 695,497 250,425 405,541 472,601 564,563 545,458 489,433 360,577 745,481 651,500 588,540 525,511 580,423 210,358 469,583 524,612 567,440 577,590 513,540 554,621 431,307 484,485 474,493 448,567 467,494 592,489 567,510 322,503 583,594 650,565 586,488 483,537 388,395 665,496 598,447 459,531 702,458 673,559 599,421 560,615 634,512 481,455 585,587 558,497 321,441 745,463 258,509 313,562 487,459 547,425 741,456 547,405 514,553 553,475 581,486 644,521 516,592 493,535 231,386 708,433 622,480 636,617 716,487 458,472 677,536 623,538 504,490 531,507 550,469 318,529 566,495 603,469 538,532 551,501 401,597 442,343 695,471 650,589 340,354 222,335 388,522 527,624 698,521 307,384 450,552 423,507 604,433 502,552 528,485 581,528 569,499 661,569 571,440 769,442 675,552 672,493 487,607 538,570 610,505 671,544 488,595 703,453 592,485 565,478 549,603 280,560 400,587 256,536 681,505 607,490 474,512 684,522 241,414 618,492 606,459 308,439 539,628 442,558 565,599 423,343 667,489 664,538 506,443 301,570 706,516 614,592 460,544 372,491 572,481 633,490 570,494 482,551 713,441 395,585 269,538 542,518 282,550 619,528 689,542 354,420 696,479 606,483 742,459 708,454 592,572 484,513 561,505 706,509 642,600 505,479 616,468 650,663 247,538 668,452 353,457 631,652 701,501 656,542 499,621 540,522 294,332 489,490 593,599 525,551 692,525 541,532 675,551 619,486 476,579 610,625 652,576 262,428 494,603 320,549 648,572 639,487 496,611 692,484 526,420 458,443 601,470 566,544 647,584 647,503 469,607 662,475 652,660 699,484 573,546 599,555 745,451 698,453 710,466 712,484 562,445 630,465 554,486 608,456 525,583 648,653 510,554 602,567 504,535 550,622 512,591 715,466 643,627 500,603 461,387 580,488 377,567 592,479 667,472 607,518 477,579 232,357 531,421 514,538 616,531 697,560 445,301 223,321 569,499 682,567 738,460 543,433 666,574 336,500 708,441 531,495 650,510 235,404 686,496 652,562 698,481 467,644 547,452 518,438 591,533 525,580 609,580 593,445 530,514 554,488 639,502 607,460 647,519 502,406 650,566 654,551 531,415 582,483 572,541 650,510 501,553 646,574 646,493 731,442 580,584 384,350 620,475 717,445 721,424 579,608 581,540 710,505 571,528 499,565 713,463 675,519 253,535 356,491 576,451 571,559 531,460 234,358 491,546 495,609 711,444 744,470 611,506 711,499 528,599 638,506 487,600 662,553 643,484 717,497 640,489 322,411 770,426 628,498 619,538 615,566 358,600 640,515 284,533 443,354 529,473 685,498 697,528 501,636 605,540 634,503 645,633 600,472 683,500 650,669 478,459 735,441 589,598 542,372 627,583 516,628 484,538 651,482 626,544 569,454 246,411 574,514 257,539 270,389 682,492 660,525 355,593 735,478 288,532 587,497 640,617 591,481 511,467 567,491 448,577 332,403 259,421 286,425 636,662 541,576 471,630 691,511 503,624 550,492 497,566 646,662 268,566 524,596 630,497 463,592 470,366 464,456 592,587 413,588 592,489 347,580 640,607 607,554 577,509 253,382 335,562 574,607 649,549 352,499 720,479 711,460 457,442 696,448 585,513 459,587 611,438 674,467 729,482 690,520 503,500 647,531 522,623 688,462 612,564 515,545 532,527 673,528 489,514 663,421 722,488 561,576 561,445 595,478 538,486 698,501 602,597 289,563 520,503 514,439 662,479 672,492 237,378 684,546 506,477 600,569 493,516 577,554 655,547 495,492 652,582 670,502 487,604 381,445 649,503 646,516 630,602 682,521 528,544 491,542 312,555 567,478 468,332 496,470 515,502 571,460 508,531 658,522 281,370 611,444 654,658 529,611 553,445 738,438 627,540 730,485 602,625 355,600 374,462 553,623 549,421 682,506 279,568 577,536 713,444 612,490 661,585 722,464 534,508 724,470 417,498 517,509 612,514 536,618 659,529 575,520 747,442 695,527 694,433 552,533 398,416 678,516 595,473 552,498 532,624 538,483 500,615 255,535 674,483 499,591 529,425 633,654 554,545 510,499 581,450 637,587 715,455 699,520 652,573 493,577 527,609 491,371 575,537 570,546 498,464 627,485 626,499 544,461 393,463 378,461 724,471 692,479 350,589 732,467 500,505 556,462 608,441 348,504 494,606 405,333 437,533 264,445 449,555 550,452 650,534 620,613 593,597 499,456 479,558 368,476 585,558 731,443 323,346 480,519 480,379 753,438 389,360 671,573 486,551 575,546 645,565 511,567 625,488 555,563 285,556 680,533 535,571 678,554 643,587 578,563 595,595 616,577 639,639 343,489 702,511 576,518 574,497 726,434 282,518 648,568 681,513 569,422 218,348 696,552 513,572 502,494 562,556 607,577 603,556 732,467 695,507 400,413 497,428 628,640 531,498 596,519 663,520 465,554 621,546 756,435 525,613 758,422 598,464 714,453 538,456 666,503 577,545 534,454 525,469 689,515 518,525 541,413 601,504 713,415 648,666 460,590 656,462 521,522 494,579 286,568 496,551 707,447 508,413 551,511 585,545 350,579 560,528 674,529 616,435 458,540 715,479 736,484 642,637 607,579 621,472 616,488 530,418 689,483 564,620 635,599 685,486 570,553 554,544 612,486 643,528 636,648 298,399 650,491 686,526 571,596 627,543 622,536 674,504 599,438 564,589 515,487 712,492 730,485 567,591 330,322 687,490 542,494 674,518 512,520 581,574 482,628 701,519 565,613 538,507 663,512 498,518 699,524 649,586 739,461 439,586 735,478 614,389 435,367 602,518 530,463 619,516 566,591 626,456 475,605 535,448 631,568 749,451 612,582 622,502 643,497 700,526 616,499 590,572 405,553 589,540 243,307 706,489 645,493 719,489 547,529 700,444 469,562 492,553 679,561 285,561 484,662 690,537 676,559 647,532 572,490 683,481 623,472 695,511 299,560 563,509 717,436 511,433 255,533 701,490 730,491 538,467 739,462 488,622 586,548 557,563 551,603 627,591 644,493 610,524 561,429 422,318 655,470 587,506 632,633 726,491 527,533 567,522 623,615 260,517 658,530 480,500 526,488 619,549 620,502 665,491 514,499 621,517 636,505 340,584 578,464 609,495 636,514 602,514 228,368 605,473 506,549 564,452 426,539 618,470 660,469 513,512 641,553 525,445 633,537 529,589 678,468 615,580 311,330 510,493 567,577 702,480 380,577 672,490 629,566 626,577 484,540 639,494 614,517 655,584 688,495 514,628 646,539 678,567 554,564 632,566 587,527 346,496 357,589 487,443 342,589 555,525 524,617 691,502 573,596 680,500 630,545 589,548 667,579 597,473 561,492 659,477 632,606 527,554 677,539 642,522 497,445 533,517 525,561 573,600 527,475 635,628 600,588 649,531 649,535 485,473 262,517 555,585 542,410 582,511 663,522 595,602 630,520 521,443 635,495 685,512 348,402 685,519 498,479 648,523 498,626 558,450 605,626 538,531 577,492 585,534 371,415 508,408 552,447 557,554 531,525 405,567 628,513 566,571 661,527 560,538 387,525 528,507 687,469 621,531 530,461 278,366 225,394 668,512 495,529 515,510 594,568 647,539 636,605 567,415 581,561 593,456 595,587 568,516 478,508 591,488 579,476 461,588 476,499 696,555 716,497 584,555 585,594 741,445 553,564 458,390 681,508 606,531 605,475 659,587 674,501 533,531 514,533 372,358 735,452 741,471 578,437 649,521 482,486 707,487 612,493 632,571 592,469 680,522 611,513 563,523 649,534 417,415 668,462 640,583 595,541 610,479 644,579 641,523 459,528 498,584 682,475 590,576 565,485 399,342 564,564 503,481 708,442 644,594 642,513 527,514 692,555 704,493 496,559 745,485 572,506 528,471 721,441 395,497 248,399 474,445 632,551 687,530 615,573 514,604 606,497 490,510 293,404 373,426 511,528 440,600 556,443 233,332 415,350 504,616 691,516 531,463 529,462 365,393 682,550 556,418 664,500 606,574 526,434 650,650 243,430 578,485 702,484 509,422 564,630 618,467 347,581 582,522 492,545 584,556 506,604 738,470 572,426 611,565 698,528 648,453 416,523 220,371 576,437 591,460 688,520 744,440 688,471 516,485 498,635 472,633 534,536 485,652 700,500 350,565 264,423 509,546 502,597 563,397 527,533 256,537 348,488 505,482 670,468 303,458 701,443 650,661 645,647 630,605 769,407 612,588 520,613 503,555 666,505 526,521 517,611 685,556 336,352 610,475 598,598 545,525 533,468 554,488 321,551 273,355 672,516 695,554 638,494 330,456 422,523 524,527 245,461 281,520 626,604 617,564 565,608 578,482 477,590 743,458 631,533 676,538 645,655 595,528 461,545 498,623 734,479 541,543 591,540 555,609 570,460 594,509 520,587 544,448 632,575 494,565 491,588 553,513 603,610 479,578 533,430 511,571 545,523 684,462 684,506 702,493 285,568 637,609 655,659 637,493 632,570 640,499 507,562 723,466 643,538 271,572 537,573 563,618 751,446 578,526 504,490 574,512 673,515 503,583 619,573 727,472 596,498 696,504 577,583 695,461 249,527 515,585 341,505 552,575 662,570 656,481 504,496 348,576 630,633 644,517 317,591 631,532 614,605 549,440 450,492 226,354 619,556 269,534 660,448 586,579 458,436 690,487 529,432 734,484 508,557 633,587 242,470 624,586 641,642 526,541 472,586 491,608 304,529 533,556 444,308 424,583 564,490 544,516 715,421 470,345 497,530 553,556 566,563 579,528 573,608 694,477 517,606 642,630 633,554 522,523 590,429 533,487 564,478 592,599 608,590 681,468 594,588 535,447 683,537 480,623 559,495 690,565 228,364 681,521 553,485 506,483 274,512 506,586 629,541 337,572 431,488 698,496 618,493 573,525 706,466 610,516 672,573 584,580 685,481 457,555 730,448 557,589 601,593 347,596 650,503 578,470 633,587 492,369 504,481 528,421 466,457 562,436 615,580 345,527 735,476 490,452 477,626 609,463 561,581 631,597 573,473 274,370 734,465 622,485 356,599 634,495 553,449 615,462 686,476 753,419 288,580 636,593 743,482 401,600 633,550 681,533 680,550 646,539 704,443 536,560 305,404 742,470 702,425 694,545 464,456 418,418 448,586 560,515 598,512 610,511 525,605 615,493 590,515 591,501 651,565 491,456 535,460 698,475 628,509 642,560 590,595 653,554 593,498 259,417 716,479 556,422 637,550 664,474 626,611 633,485 262,330 490,415 365,335 479,618 244,474 617,486 629,509 610,516 507,489 695,513 334,482 638,573 253,521 254,528 597,593 607,532 556,497 576,452 643,631 630,490 599,493 471,591 271,531 559,559 606,532 545,563 329,541 635,588 645,556 251,491 503,464 670,533 272,569 693,503 722,485 613,525 374,401 559,439 229,473 525,471 614,456 473,551 488,603 673,462 459,551 620,577 501,496 490,410 599,442 644,653 717,485 532,548 265,416 349,541 280,361 679,519 346,577 555,496 637,494 589,607 638,615 520,436 603,619 549,619 720,433 576,477 596,563 569,445 578,469 566,510 747,445 607,559 501,554 633,576 620,595 330,313 498,476 620,573 323,472 522,446 623,485 595,564 664,508 522,562 492,633 490,556 488,480 629,573 702,506 488,371 547,442 577,440 640,523 627,559 512,549 587,535 500,502 643,657 599,479 626,467 583,535 666,582 688,514 558,429 645,559 493,528 653,491 523,535 558,525 632,631 486,564 589,549 682,521 618,470 640,609 516,583 479,467 598,479 544,514 652,541 572,607 617,496 726,478 282,573 546,545 744,465 384,540 274,569 700,436 598,454 577,496 574,492 726,485 688,501 599,571 590,581 360,372 503,597 609,508 505,590 612,520 508,574 629,528 624,616 447,324 656,565 272,398 559,568 658,577 280,431 580,466 498,637 670,507 378,593 494,558 545,535 661,549 695,498 611,534 321,383 464,551 614,409 498,481 543,628 357,593 657,490 597,527 581,520 724,471 592,561 566,602 700,495 705,491 475,541 602,580 657,497 285,554 515,473 504,506 678,564 621,606 754,450 738,444 377,522 631,609 640,659 685,467 578,545 497,493 633,634 582,506 481,503 634,634 512,606 516,550 691,449 594,589 500,558 541,521 270,354 611,467 594,558 340,467 623,546 262,452 697,453 605,515 460,489 576,615 509,450 604,502 580,547 507,573 575,458 532,524 488,405 319,418 281,553 601,518 607,534 559,438 640,495 636,518 710,482 481,619 253,528 458,510 599,541 743,472 581,507 280,564 506,622 496,442 692,530 281,349 520,441 678,549 741,452 242,375 550,428 625,581 567,552 533,606 674,503 491,601 613,550 352,592 527,585 336,328 630,582 587,514 479,625 297,505 580,616 539,474 428,511 696,528 493,584 637,517 611,577 662,483 583,425 482,605 541,578 527,470 516,570 734,486 664,548 727,475 571,520 413,503 289,404 682,540 587,618 742,446 613,565 737,483 359,504 619,521 586,518 303,586 638,519 495,621 495,582 546,558 658,513 699,479 505,617 633,606 324,553 495,492 561,459 658,486 691,438 604,514 333,370 479,597 559,485 479,562 389,451 652,661 677,525 600,573 501,613 752,437 742,460 541,478 541,494 550,489 611,498 693,539 656,451 606,467 563,515 531,468 558,617 640,493 593,547 355,501 672,526 608,499 609,556 651,502 671,481 664,465 537,473 740,392 609,577 570,518 745,441 696,534 596,565 265,533 744,484 697,413 513,485 647,582 654,521 600,490 626,569 576,543 638,653 641,653 585,557 604,556 647,506 542,572 381,432 673,506 299,480 734,464 261,528 443,543 396,506 273,568 499,444 253,443 676,468 639,586 605,583 253,546 640,491 587,419 591,536 479,622 617,519 547,476 507,534 612,606 641,516 488,557 546,436 688,559 435,363 260,530 623,498 767,438 500,603 368,590 575,512 610,573 490,424 592,576 482,642 596,555 550,560 592,501 603,506 707,467 677,469 412,504 603,576 560,594 569,544 626,569 508,529 608,502 636,597 556,592 260,524 637,614 455,533 298,588 485,480 635,570 632,467 715,441 640,559 548,442 531,429 660,538 681,401 670,498 354,587 584,448 636,569 626,532 569,500 634,536 465,614 327,534 721,456 399,598 672,572 622,513 455,369 492,520 480,596 526,446 568,479 283,563 532,500 287,570 619,485 364,437 250,534 481,630 716,465 232,384 544,575 687,434 601,530 547,466 494,595 514,459 555,444 280,552 359,552 647,643 563,498 724,469 527,587 656,468 272,533 483,533 679,479 700,514 380,377 257,530 696,495 541,502 693,465 547,473 276,363 477,438 636,577 640,523 620,389 614,608 618,503 538,414 680,494 243,453 606,606 717,468 645,562 706,434 689,535 670,524 482,501 605,494 410,513 662,550 700,487 486,563 591,600 735,447 434,327 679,549 297,408 507,463 647,577 552,505 614,561 654,507 686,503 631,649 650,531 729,459 481,511 611,467 288,463 284,442 474,570 665,511 606,597 630,525 301,570 607,612 688,513 608,509 661,510 697,520 342,316 588,436 525,602 633,548 665,499 699,489 505,546 523,445 744,469 511,629 560,510 708,485 422,363 520,473 688,504 503,439 550,477 355,355 546,518 547,467 349,561 298,407 626,579 652,656 527,585 687,541 704,469 271,506 632,560 747,455 401,418 518,496 298,574 392,592 592,522 306,583 600,507 513,628 269,521 635,570 490,480 487,529 251,523 348,597 592,492 689,485 289,562 529,544 579,522 514,468 592,512 681,507 702,509 643,604 635,628 304,565 598,543 676,551 735,482 719,486 250,538 709,476 501,518 646,509 614,520 601,550 334,552 627,527 599,518 622,503 555,440 485,550 611,508 679,560 240,379 521,569 670,546 538,450 555,473 527,474 528,624 623,502 639,471 566,514 603,512 685,473 638,529 614,582 637,513 357,595 344,493 699,497 621,606 529,527 265,364 685,502 550,429 533,529 397,534 663,480 747,446 571,532 353,537 460,528 626,532 321,555 502,475 466,380 512,616 568,559 364,570 490,549 702,490 648,550 503,527 700,474 611,590 525,541 283,569 581,539 668,504 485,597 304,551 655,499 450,363 673,515 588,488 712,473 654,542 479,630 649,572 746,450 522,519 383,412 728,474 530,468 639,491 687,505 297,566 560,632 604,510 563,490 317,356 614,459 257,515 235,389 491,598 515,369 536,491 690,501 485,509 644,636 392,519 650,669 507,587 594,527 481,565 538,628 608,620 607,578 240,369 584,548 711,507 687,505 243,503 596,585 651,463 582,434 599,469 597,465 316,377 697,526 744,408 578,561 604,461 733,483 543,445 495,371 662,573 541,494 615,478 488,449 655,499 634,535 721,493 582,450 572,459 503,558 692,500 679,559 405,500 503,623 521,519 601,468 610,607 569,462 611,470 547,624 535,437 372,579 515,564 741,455 601,569 304,568 271,493 540,624 702,515 302,592 631,523 524,597 624,459 547,374 645,636 662,484 633,601 462,574 255,527 574,523 703,452 513,520 280,342 551,595 594,485 606,473 351,511 694,512 288,353 628,522 598,510 624,539 465,606 632,625 501,561 706,514 512,445 625,586 530,515 321,428 473,569 625,515 472,472 608,577 765,437 604,581 388,427 693,492 552,505 647,651 683,535 361,341 478,470 505,607 749,453 519,516 606,595 697,562 587,502 335,548 547,457 509,486 581,553 685,523 699,491 714,476 626,500 611,441 639,462 568,541 726,478 680,482 546,622 479,564 671,536 502,422 677,510 319,538 578,532 492,589 625,593 703,512 580,580 474,502 610,614 642,622 490,561 558,571 691,510 331,545 617,504 754,454 279,558 505,506 478,594 629,531 563,528 504,623 528,511 549,491 606,560 307,524 705,489 728,438 682,487 647,556 659,537 559,449 568,464 484,629 537,592 523,613 692,501 687,566 614,621 592,589 515,530 541,452 651,670 475,557 615,584 396,413 646,524 658,560 712,481 498,569 531,557 570,511 248,419 740,479 592,526 616,462 549,491 630,462 670,546 628,570 550,453 668,467 424,518 425,561 651,552 552,501 586,597 642,593 491,459 486,409 527,534 567,455 707,499 616,558 478,610 511,610 349,458 518,531 332,357 561,497 643,656 587,563 530,430 514,480 598,517 611,562 661,571 568,514 515,527 548,475 777,443 664,514 550,518 367,591 618,517 624,462 598,588 362,509 618,463 609,504 585,542 700,496 561,530 544,435 718,492 522,522 581,539 562,497 518,544 616,443 525,444 241,427 588,569 641,557 419,277 507,548 687,507 622,481 536,520 521,463 723,490 649,536 479,659 467,514 625,537 660,521 492,599 571,479 697,506 443,567 711,477 686,522 580,491 657,481 690,492 550,483 619,495 658,504 677,569 553,455 599,476 464,320 628,463 615,556 726,493 662,579 441,311 564,419 635,484 751,480 513,547 229,362 459,478 589,609 704,500 364,526 252,533 643,462 622,456 600,541 337,359 532,578 398,394 591,508 675,486 513,462 630,569 571,457 267,390 688,522 513,415 550,500 569,521 625,519 693,550 620,493 413,510 686,537 743,441 593,557 550,543 645,578 593,530 480,631 238,388 742,465 593,497 644,635 544,497 704,498 659,542 555,556 548,452 255,541 505,609 597,569 706,472 683,554 546,610 670,486 722,447 662,547 746,435 516,574 733,482 681,514 669,579 648,564 592,527 655,461 622,545 652,559 578,457 555,466 482,479 594,497 230,385 566,563 654,474 483,537 608,509 551,503 674,503 650,560 521,572 631,570 632,635 589,426 624,484 737,476 484,453 590,529 561,457 602,427 583,551 562,517 572,467 688,493 593,504 491,376 670,554 736,409 643,488 546,529 611,592 557,556 739,448 641,642 673,491 247,532 659,570 513,620 635,566 608,448 512,465 562,459 514,507 638,518 673,550 769,440 716,452 497,585 717,442 495,461 545,616 356,374 669,480 626,576 615,515 673,504 738,462 695,495 656,507 364,590 262,371 595,558 556,573 598,590 558,567 621,543 482,579 736,484 408,556 544,400 600,471 242,443 382,569 741,455 242,499 624,485 539,552 536,538 566,541 766,417 544,598 529,481 508,478 621,570 716,481 656,570 576,471 508,511 492,509 649,664 345,576 608,505 634,562 578,557 630,500 526,542 477,360 518,604 648,668 510,517 484,650 571,479 230,369 772,438 566,615 508,465 626,543 635,643 623,462 618,490 737,483 666,524 538,580 304,575 381,426 661,567 485,566 620,468 664,465 252,346 600,541 715,430 343,582 291,391 499,476 594,506 688,542 651,569 631,498 557,442 638,483 624,507 468,418 658,560 531,551 525,568 699,517 594,534 599,464 691,483 574,432 500,452 686,510 610,536 597,481 639,592 644,517 706,426 610,616 486,460 613,549 276,423 546,535 594,620 516,498 257,541 416,504 609,483 650,546 246,433 636,662 490,552 687,482 626,592 537,526 576,422 654,662 623,490 664,539 616,522 319,410 658,487 485,567 570,469 668,469 584,430 694,486 600,490 584,419 276,545 500,482 564,529 712,505 595,517 644,489 636,604 561,558 657,534 749,435 485,654 605,625 256,532 744,467 246,524 540,478 534,613 478,479 531,510 351,581 561,589 550,489 645,580 562,485 515,459 336,463 503,446 532,614 285,580 607,469 564,527 606,457 616,523 473,629 542,551 615,566 620,595 655,456 500,582 609,472 749,453 242,443 287,562 686,570 578,461 352,484 525,617 570,460 538,485 354,484 613,499 669,555 490,456 297,570 721,495 644,568 685,545 648,671 474,457 484,467 544,549 501,609 708,512 689,515 638,591 281,575 686,452 724,464 473,589 490,535 500,584 635,647 563,609 654,543 491,492 519,508 646,534 327,424 693,489 617,534 537,571 505,414 584,528 643,573 583,535 699,411 623,483 721,490 670,526 689,513 649,657 334,375 572,480 669,519 627,482 481,625 693,457 487,485 500,534 502,598 698,452 351,586 541,572 681,567 694,534 564,560 299,566 705,491 529,585 292,566 611,450 418,509 679,520 713,432 310,349 428,585 542,533 672,493 654,568 741,414 470,568 683,476 538,441 730,455 530,582 685,540 660,500 610,476 537,544 608,534 251,514 699,434 538,536 691,506 364,598 726,478 622,624 656,588 610,616 327,587 608,599 599,527 737,452 545,516 567,464 275,563 726,479 595,580 721,470 682,542 687,503 348,494 623,515 463,559 678,474 620,497 518,454 698,487 633,596 533,507 240,458 503,579 611,552 664,578 604,554 606,499 273,369 507,616 615,567 623,484 487,508 279,570 643,508 697,464 741,461 771,431 260,378 571,540 660,477 491,614 533,480 527,560 602,574 385,498 547,548 641,576 615,566 631,566 636,580 595,618 507,566 713,445 413,599 539,616 486,516 713,496 512,519 674,463 617,436 565,521 587,495 637,563 556,446 573,573 510,610 244,436 687,523 638,501 607,475 231,398 602,565 495,405 630,560 650,556 547,483 657,531 439,416 457,574 707,469 554,496 558,515 250,442 512,577 582,418 415,420 541,433 571,469 605,612 533,464 632,598 507,477 720,492 772,438 683,507 545,455 580,610 711,499 435,512 524,619 681,532 453,502 630,573 476,463 544,483 626,530 490,620 392,305 583,488 749,450 679,542 571,479 638,646 538,624 683,536 542,560 522,590 532,446 581,565 566,524 244,530 524,481 657,485 607,549 589,529 604,536 357,505 608,538 645,596 641,568 632,523 724,419 750,417 705,511 468,461 442,476 630,610 698,420 680,508 476,549 693,501 647,539 613,453 478,426 582,585 636,642 633,644 549,602 612,596 685,539 648,469 774,442 315,335 647,665 653,544 617,522 551,536 591,490 535,522 673,493 591,478 306,550 666,474 652,481 645,542 699,464 688,519 595,563 737,473 501,517 712,463 696,518 550,465 584,528 502,557 653,492 470,592 535,557 496,577 591,498 647,569 479,361 635,655 716,440 517,549 586,562 700,524 631,576 590,542 656,453 462,593 650,583 472,554 603,533 617,499 602,617 501,467 256,524 640,474 725,465 533,496 620,509 505,373 667,509 638,647 597,525 613,536 279,400 693,514 674,507 520,468 646,645 660,466 650,553 630,469 684,487 592,557 545,615 518,419 412,391 266,428 770,447 635,465 571,527 580,460 701,454 614,493 735,432 238,393 601,437 639,539 639,568 479,481 619,562 698,517 500,450 489,492 542,440 741,479 559,511 373,355 656,570 669,464 712,481 524,609 263,547 592,499 336,437 640,666 479,423 580,482 656,461 516,478 667,482 553,617 664,479 445,592 308,463 565,617 582,524 697,458 553,595 664,550 497,502 550,488 669,575 638,590 489,586 402,553 669,501 293,568 586,524 702,445 345,540 419,555 563,522 564,438 484,602 564,467 489,646 475,521 595,490 672,541 476,611 687,515 614,485 631,513 461,346 676,519 475,563 668,495 599,507 523,497 637,662 631,489 627,481 624,542 264,468 242,523 534,474 397,551 553,452 564,465 315,550 283,364 490,431 695,506 581,570 714,459 631,569 532,429 607,626 677,493 489,466 579,540 563,499 537,463 484,445 516,580 586,540 562,609 634,514 573,546 597,530 648,530 691,472 692,487 623,558 600,606 601,530 628,626 570,582 362,413 293,577 485,465 764,448 409,515 532,501 283,420 510,512 572,596 564,524 507,439 521,438 466,492 583,569 297,530 636,616 602,526 411,489 347,502 743,482 752,426 711,475 681,531 517,451 485,447 274,568 259,536 636,656 634,564 671,462 346,589 462,392 437,367 569,524 595,452 569,452 608,397 529,512 330,480 286,578 738,475 605,474 659,441 644,566 646,527 592,525 547,470 612,528 544,609 620,571 708,506 651,495 693,510 508,477 534,469 509,602 693,452 503,550 362,583 610,572 607,565 694,517 487,352 606,558 638,554 640,496 662,478 526,601 641,575 593,475 575,441 599,441 724,461 542,565 335,348 583,509 627,646 721,469 729,473 479,496 261,317 494,536 752,450 536,598 604,529 310,552 609,573 563,427 678,512 654,484 611,450 605,542 748,447 545,494 470,580 473,599 642,543 639,596 554,518 597,601 601,513 611,544 597,541 612,471 679,470 291,518 296,548 473,513 709,497 544,575 706,461 505,422 545,560 537,558 499,595 555,442 538,514 586,565 536,448 524,560 658,445 530,573 593,584 657,555 551,556 599,489 673,485 514,522 688,539 516,539 777,433 272,409 515,492 468,346 695,501 615,505 455,370 681,485 526,503 556,434 569,453 349,457 513,462 558,518 450,329 452,480 345,581 607,624 659,552 622,532 541,514 627,531 579,460 618,586 624,495 415,344 603,450 548,428 247,539 726,494 652,514 611,485 692,518 621,588 639,621 688,496 709,446 270,511 424,382 481,644 522,441 497,498 434,598 583,538 642,560 291,569 713,458 552,487 217,372 725,462 369,430 605,462 395,442 690,536 603,512 614,469 256,454 692,460 633,523 695,477 284,491 686,526 662,545 731,457 597,498 716,454 253,536 713,482 539,489 541,512 638,486 664,494 352,521 547,431 711,492 720,471 623,484 623,529 615,485 595,514 508,609 595,580 653,492 491,532 630,539 538,550 652,545 456,496 566,543 433,317 696,495 660,535 477,567 350,319 525,575 624,523 608,475 621,505 556,589 631,569 718,482 487,550 409,488 558,555 693,524 551,493 501,445 609,520 505,496 548,499 625,563 481,420 579,487 416,347 624,560 693,540 698,531 303,324 533,547 736,464 763,429 588,598 620,489 601,474 487,596 645,649 537,568 689,531 512,455 655,544 502,544 649,642 481,472 683,505 580,594 517,585 455,557 490,561 534,538 687,431 489,618 546,609 491,525 539,558 591,613 589,522 550,587 543,468 691,439 603,593 346,412 487,656 732,471 501,553 631,549 465,485 572,511 686,518 234,331 523,525 567,521 497,488 475,531 486,472 591,558 739,443 738,456 533,474 720,452 277,417 483,552 516,423 653,545 544,582 693,528 669,470 538,570 599,549 488,459 497,409 543,535 431,478 250,533 291,580 537,520 732,443 660,551 369,415 745,456 648,460 667,542 600,458 533,511 627,574 580,539 452,573 610,425 685,541 622,578 598,499 748,453 499,487 660,561 602,556 480,442 513,622 406,397 726,478 257,419 571,589 593,459 723,487 614,567 662,500 233,452 505,596 623,466 245,475 706,496 567,474 684,531 585,559 653,536 370,564 694,462 501,552 469,461 473,646 374,381 524,519 752,429 525,614 501,638 549,475 646,499 688,534 599,453 290,459 676,576 656,499 327,545 507,496 701,465 648,529 682,511 731,486 576,476 614,458 748,478 736,464 518,615 606,580 489,499 271,565 580,582 567,482 617,581 682,487 503,476 650,534 572,472 693,524 612,477 476,557 693,503 603,500 654,539 551,461 577,454 707,407 572,480 653,541 637,486 637,554 543,510 673,472 697,513 289,568 576,537 601,515 609,590 568,439 564,581 706,507 484,582 706,420 491,346 720,497 536,530 591,500 364,509 644,487 486,624 504,533 689,503 506,550 614,552 617,535 540,476 471,512 486,536 353,583 610,580 531,565 429,510 716,488 644,664 284,374 369,359 484,550 574,587 480,436 667,579 276,374 628,486 734,421 624,501 628,395 630,485 665,516 256,387 246,530 655,583 577,602 513,566 395,553 522,448 696,497 327,305 657,519 549,456 641,592 686,488 486,629 585,590 626,618 567,468 532,508 686,491 694,497 588,480 574,558 546,481 647,461 599,459 634,571 512,630 724,474 528,527 613,538 699,411 97,635 232,603 637,682" marker-start="url(#mp)" marker-mid="url(#mp)" marker-end="url(#mp)"/><polyline fill="none" stroke="none" points="576,482 244,383 672,576 574,480 731,475 654,481 707,502 230,382 688,538 315,561 231,411 618,603 723,444 245,387 254,404 551,482 252,540 598,524 659,558 644,556 576,469 256,532 322,300 630,652 566,618 319,380 526,439 539,424 630,653 716,496 263,541 321,552 411,590 557,599 597,510 549,515 639,598 640,643 248,383 203,355 334,539 587,488 559,622 622,458 266,408 325,412 562,577 588,485 717,472 579,521 650,659 677,512 398,508 627,558 692,528 586,564 566,469 722,430 672,572 565,435 302,571 690,517 235,436 542,481 418,479 699,502 288,574 237,377 300,559 577,454 681,510 257,406 614,509 250,402 537,415 415,498 667,527 591,567 587,517 675,532 742,477 619,485 681,514 641,632 489,614 315,550 530,589 716,498 519,446 496,588 633,607 240,458 583,501 614,470 298,589 702,510 629,571 720,481 551,526 572,534 362,496 623,577 297,401 426,455 353,584 705,504 718,467 495,440 618,482 333,311 351,570 628,572 291,578 589,581 461,326 298,569 507,575 604,532 357,464 576,478 578,478 580,482 710,504 505,633 594,540 238,428 602,525 354,492 675,574 693,502 532,427 606,493 259,542 594,578 699,508 776,439 501,604 660,586 492,598 511,498 344,494 684,500 510,516 558,622 510,547 493,553 301,453 658,462 739,476 642,553 595,586 640,661 629,652 565,491 487,434 722,485 615,585 624,496 728,485 239,415 719,486 281,420 562,584 568,462 256,554 716,498 634,640 635,624 227,384 245,391 683,522 558,506 586,484 690,518 515,517 334,317 673,543 699,510 646,462 649,557 689,499 689,459 644,636 745,459 651,657 327,416 262,537 242,381 264,518 534,619 666,463 693,522 239,382 502,493 509,611 670,498 630,642 580,505 570,488 777,435 703,515 640,660 234,375 723,484 654,489 692,496 245,381 608,574 669,560 552,613 331,357 615,528 321,552 537,620 593,443 305,579 606,578 491,564 707,504 661,485 240,380 520,556 323,360 290,565 345,462 332,325 247,390 522,434 334,592 513,518 641,638 696,499 555,519 475,622 592,489 280,576 320,551 445,600 310,556 730,487 249,387 591,485 739,476 484,598 502,597 256,534 657,461 285,576 633,498 693,506 601,562 605,577 630,571 478,625 562,498 250,521 527,516 600,582 241,430 632,562 279,562 759,429 646,480 576,462 246,537 685,530 671,516 254,522 665,466 615,617 488,365 478,571 294,582 580,493 350,577 721,486 611,580 732,472 605,565 523,442 277,564 246,541 506,624 596,573 665,555 693,543 687,507 473,628 738,483 354,594 618,552 648,560 668,577 616,551 496,489 248,538 415,492 345,592 409,517 274,547 483,376 636,527 609,519 524,591 524,496 244,471 565,467 581,475 674,536 568,619 497,600 415,360 710,491 582,557 346,579 586,586 531,492 402,343 646,643 639,635 295,566 419,509 410,500 513,594 503,518 582,481 501,497 712,431 655,457 510,470 350,582 410,432 488,566 490,532 600,465 594,590 692,493 519,616 654,592 681,473 679,517 623,554 386,432 492,557 302,454 630,648 622,530 234,384 678,539 294,579 571,497 493,597 303,574 422,524 598,526 678,572 574,612 254,542 501,501 712,489 580,497 276,571 421,507 515,519 612,589 671,522 341,322 341,375 292,571 682,514 501,516 728,484 256,453 481,659 711,485 724,489 641,468 520,591 509,516 617,579 641,486 642,492 561,519 588,487 516,455 726,490 295,582 247,428 647,548 628,561 261,402 603,504 537,563 581,575 560,499 600,562 623,516 553,542 561,565 263,531 553,565 701,488 651,502 443,565 672,554 666,456 540,616 351,573 758,441 254,552 582,575 704,502 596,475 403,566 721,493 627,646 484,611 584,548 720,490 590,548 737,468 681,498 579,618 519,440 616,485 287,581 554,597 298,579 553,498 631,585 548,585 495,491 622,607 421,506 643,494 557,597 519,554 250,532 411,516 547,609 726,492 685,515 555,529 629,652 713,497 629,568 482,353 606,595 243,447 538,430 675,465 700,511 349,570 607,496 614,582 328,354 603,578 267,418 609,495 591,586 587,605 509,479 630,534 622,469 684,519 538,615 305,573 452,415 551,465 664,560 472,573 722,476 475,638 244,405 404,599 592,478 653,668 630,639 324,325 641,608 611,605 500,626 597,562 686,491 626,475 512,622 691,515 475,626 228,340 247,389 611,476 616,585 509,525 601,593 349,495 569,455 612,576 487,588 598,544 646,669 294,580 410,500 628,646 696,505 517,621 565,620 282,374 248,540 652,484 529,367 649,539 663,501 468,459 243,407 608,560 618,524 245,532 339,316 500,550 618,619 646,654 633,647 637,661 653,660 637,647 645,647 648,655 632,647 653,656 633,640 654,659 636,657 638,661 650,663 637,663 631,640 629,645 647,653 636,652 653,668 640,648 641,641 630,639 640,655 637,656 637,660 635,642 640,640 639,644 637,660 633,633 633,651 654,664 639,665 652,652 637,645 645,662 650,660 653,665 651,659 652,659 286,573 289,580 287,576 289,572 289,576 290,580 291,575 290,572 291,579 287,577 286,575 284,578 288,575 286,575 243,380 241,380 242,380 242,378 242,380 249,406 250,412 249,406 247,409 248,403 250,408 247,410 249,406 245,411 244,433 246,434 245,434 245,434 255,534 250,536 252,541 254,538 246,536 250,531 252,533 251,531 250,532 252,533 343,583 349,582 346,582 346,583 710,492 710,494 714,494 711,494 713,498 715,497 415,506 414,508 415,510 413,510 297,592 296,591 299,592 297,591 297,591 653,664 652,668 647,666 653,665 650,671 648,667 646,670 654,666 506,629 508,625 506,630 504,627 506,626 493,590 494,594 487,592 491,593 489,591 495,590 612,580 608,579 609,577 614,580 577,485 580,483 584,485 579,481 580,482" marker-start="url(#my)" marker-mid="url(#my)" marker-end="url(#my)"/><polyline fill="none" stroke="none" points="473,478 610,587 715,497 736,475 497,594 398,595 744,442 278,570 468,483 740,483 576,450 552,441 686,543 495,461 663,500 644,581 274,561 606,514 621,503 511,541 248,387 587,480 352,262 721,475 256,537 591,495 697,504 501,439 620,482 587,526 652,462 726,476 586,560 302,454 524,547 517,551 529,437 231,371 563,494 639,559 497,628 581,553 714,485 631,652 247,454 604,586 598,528 488,586 515,518 674,461 620,576 558,432 418,512 253,460 602,479 579,470 244,431 603,462 675,509 496,585 589,551 250,543 739,482 634,656 652,471 526,573 647,569 242,400 500,515 609,586 671,537 518,527 406,607 575,482 498,584 468,635 617,507 615,592 574,455 552,518 673,531 580,508 493,506 245,531 600,511 290,578 487,499 674,549 507,619 490,625 343,507 608,562 630,571 495,633 590,488 643,513 503,626 547,512 691,509 671,501 605,583 594,463 506,515 632,655 559,452 606,478 647,573 618,483 604,496 649,669 493,587 258,453 576,592 574,466 600,531 582,620 484,557 689,512 619,620 648,554 672,500 566,552 497,597 580,479 643,628 507,621 475,528 251,533 441,574 494,464 644,528 649,526 480,635 704,491 695,495 646,636 356,598 482,565 529,420 626,615 656,464 511,631 244,379 514,517 531,430 637,493 699,456 505,633 742,473 344,497 592,508 534,451 564,599 645,471 368,553 684,514 705,467 575,465 699,514 625,549 644,636 714,489 645,641 542,510 653,657 290,555 589,488 710,488 478,629 495,519 703,496 736,460 679,516 441,583 611,559 614,562 691,507 294,562 344,574 566,458 571,616 480,423 628,512 407,510 560,468 688,540 555,617 593,553 730,473 511,409 257,538 466,593 710,504 485,373 662,501 736,466 453,448 720,494 639,619 727,447 566,526 500,626 700,451 542,448 557,524 552,572 617,476 325,413 577,430 521,447 535,441 558,431 278,562 501,585 333,539 651,660 651,668 649,662 653,662 650,662 652,661 652,659 286,577 283,574 288,579 290,577 288,573 285,575 290,578 289,575 240,381 241,381 239,382 244,404 244,406 249,403 250,406 243,434 246,432 251,534 251,532 253,535 246,538 252,534 345,583 346,583 347,583 713,496 709,497 711,493 709,496 712,496 714,495 711,495 414,507 416,507 298,593 300,592 652,669 652,665 651,667 650,667 651,669 506,626 505,625 491,590 491,593 492,591 611,581 613,582 611,582 578,481 581,483 578,480" marker-start="url(#mv)" marker-mid="url(#mv)" marker-end="url(#mv)"/>
<g font-family="Liberation Sans,sans-serif">
<g font-style="italic" fill="#eef4f4" font-size="11.5">
<text x="537" y="667.4" textLength="48" lengthAdjust="spacing">Gulf of</text>
<text x="537.5" y="689" textLength="46.5" lengthAdjust="spacing">Mexico</text>
<text x="664.500" y="773" font-size="12.5" textLength="97" lengthAdjust="spacing" transform="rotate(9 664.500 773)">Caribbean Sea</text>
</g>
<text x="213.7" y="290.8" textLength="15.0" lengthAdjust="spacingAndGlyphs" font-size="8.5" font-weight="normal" fill="#a2a2a2">B.C.</text>
<text x="311.4" y="299.7" textLength="16.7" lengthAdjust="spacingAndGlyphs" font-size="8.5" font-weight="normal" fill="#a2a2a2">Alta.</text>
<text x="392.8" y="312.0" textLength="19.6" lengthAdjust="spacingAndGlyphs" font-size="8.5" font-weight="normal" fill="#a2a2a2">Sask.</text>
<text x="467.1" y="318.7" textLength="18.3" lengthAdjust="spacingAndGlyphs" font-size="8.5" font-weight="normal" fill="#a2a2a2">Man.</text>
<text x="604.9" y="380.7" textLength="16.1" lengthAdjust="spacingAndGlyphs" font-size="8.5" font-weight="normal" fill="#a2a2a2">Ont.</text>
<text x="722.2" y="369.1" textLength="17.6" lengthAdjust="spacingAndGlyphs" font-size="8.5" font-weight="normal" fill="#a2a2a2">Que.</text>
<text x="256.7" y="401.3" textLength="22.3" lengthAdjust="spacingAndGlyphs" font-size="8.5" font-weight="normal" fill="#a2a2a2">Wash.</text>
<text x="362.6" y="414.6" textLength="22.3" lengthAdjust="spacingAndGlyphs" font-size="8.5" font-weight="normal" fill="#a2a2a2">Mont.</text>
<text x="309.5" y="452.1" textLength="22.3" lengthAdjust="spacingAndGlyphs" font-size="8.5" font-weight="normal" fill="#a2a2a2">Idaho</text>
<text x="257.8" y="460.1" textLength="16.0" lengthAdjust="spacingAndGlyphs" font-size="8.5" font-weight="normal" fill="#a2a2a2">Ore.</text>
<text x="379.8" y="463.5" textLength="18.0" lengthAdjust="spacingAndGlyphs" font-size="8.5" font-weight="normal" fill="#a2a2a2">Wyo.</text>
<text x="291.7" y="515.0" textLength="16.3" lengthAdjust="spacingAndGlyphs" font-size="8.5" font-weight="normal" fill="#a2a2a2">Nev.</text>
<text x="341.4" y="518.6" textLength="18.5" lengthAdjust="spacingAndGlyphs" font-size="8.5" font-weight="normal" fill="#a2a2a2">Utah</text>
<text x="398.3" y="519.2" textLength="19.2" lengthAdjust="spacingAndGlyphs" font-size="8.5" font-weight="normal" fill="#a2a2a2">Colo.</text>
<text x="263.4" y="545.1" textLength="18.5" lengthAdjust="spacingAndGlyphs" font-size="8.5" font-weight="normal" fill="#a2a2a2">Calif.</text>
<text x="343.9" y="578.4" textLength="16.3" lengthAdjust="spacingAndGlyphs" font-size="8.5" font-weight="normal" fill="#a2a2a2">Ariz.</text>
<text x="395.4" y="576.8" textLength="16.8" lengthAdjust="spacingAndGlyphs" font-size="8.5" font-weight="normal" fill="#a2a2a2">N.M.</text>
<text x="449.8" y="409.5" textLength="15.6" lengthAdjust="spacingAndGlyphs" font-size="8.5" font-weight="normal" fill="#a2a2a2">N.D.</text>
<text x="506.7" y="425.1" textLength="20.0" lengthAdjust="spacingAndGlyphs" font-size="8.5" font-weight="normal" fill="#a2a2a2">Minn.</text>
<text x="453.1" y="445.2" textLength="14.5" lengthAdjust="spacingAndGlyphs" font-size="8.5" font-weight="normal" fill="#a2a2a2">S.D.</text>
<text x="451.4" y="484.9" textLength="20.0" lengthAdjust="spacingAndGlyphs" font-size="8.5" font-weight="normal" fill="#a2a2a2">Nebr.</text>
<text x="465.6" y="605.5" textLength="14.5" lengthAdjust="spacingAndGlyphs" font-size="8.5" font-weight="normal" fill="#a2a2a2">Tex.</text>
<text x="746.1" y="438.1" textLength="22.7" lengthAdjust="spacingAndGlyphs" font-size="8.5" font-weight="normal" fill="#a2a2a2">Maine</text>
<g opacity=".6">
<text x="552.4" y="446.8" textLength="14.5" lengthAdjust="spacingAndGlyphs" font-size="8.5" font-weight="normal" fill="#8f8f8f">Wis.</text>
<text x="600.3" y="444.5" textLength="20.1" lengthAdjust="spacingAndGlyphs" font-size="8.5" font-weight="normal" fill="#8f8f8f">Mich.</text>
<text x="515.6" y="482.0" textLength="15.4" lengthAdjust="spacingAndGlyphs" font-size="8.5" font-weight="normal" fill="#8f8f8f">Iowa</text>
<text x="463.8" y="527.1" textLength="17.9" lengthAdjust="spacingAndGlyphs" font-size="8.5" font-weight="normal" fill="#8f8f8f">Kans.</text>
<text x="476.6" y="557.8" textLength="17.4" lengthAdjust="spacingAndGlyphs" font-size="8.5" font-weight="normal" fill="#8f8f8f">Okla.</text>
<text x="527.0" y="568.3" textLength="12.0" lengthAdjust="spacingAndGlyphs" font-size="8.5" font-weight="normal" fill="#8f8f8f">Ark.</text>
<text x="550.8" y="594.3" textLength="17.4" lengthAdjust="spacingAndGlyphs" font-size="8.5" font-weight="normal" fill="#8f8f8f">Miss.</text>
<text x="581.6" y="595.0" textLength="12.3" lengthAdjust="spacingAndGlyphs" font-size="8.5" font-weight="normal" fill="#8f8f8f">Ala.</text>
<text x="530.3" y="616.2" textLength="8.9" lengthAdjust="spacingAndGlyphs" font-size="8.5" font-weight="normal" fill="#8f8f8f">La.</text>
<text x="617.3" y="600.6" textLength="10.0" lengthAdjust="spacingAndGlyphs" font-size="8.5" font-weight="normal" fill="#8f8f8f">Ga.</text>
<text x="638.5" y="582.1" textLength="12.2" lengthAdjust="spacingAndGlyphs" font-size="8.5" font-weight="normal" fill="#8f8f8f">S.C.</text>
<text x="665.3" y="493.6" textLength="8.3" lengthAdjust="spacingAndGlyphs" font-size="8.5" font-weight="normal" fill="#8f8f8f">Pa.</text>
<text x="638.0" y="524.8" textLength="17.8" lengthAdjust="spacingAndGlyphs" font-size="8.5" font-weight="normal" fill="#8f8f8f">W.Va.</text>
<text x="662.4" y="538.9" textLength="9.0" lengthAdjust="spacingAndGlyphs" font-size="8.5" font-weight="normal" fill="#8f8f8f">Va.</text>
<text x="652.4" y="563.4" textLength="12.3" lengthAdjust="spacingAndGlyphs" font-size="8.5" font-weight="normal" fill="#8f8f8f">N.C.</text>
<text x="693.0" y="474.1" textLength="10.5" lengthAdjust="spacingAndGlyphs" font-size="8.5" font-weight="normal" fill="#8f8f8f">N.Y.</text>
</g><g opacity=".62">
<text x="583.5" y="485.4" textLength="32.5" lengthAdjust="spacingAndGlyphs" font-size="9" font-weight="bold" fill="#4a4a4a" opacity=".6">Chicago</text>
<text x="664.7" y="462.0" textLength="34.5" lengthAdjust="spacingAndGlyphs" font-size="9" font-weight="bold" fill="#4a4a4a">Toronto</text>
<text x="498.4" y="595.1" textLength="25.2" lengthAdjust="spacingAndGlyphs" font-size="9" font-weight="bold" fill="#4a4a4a">Dallas</text>
</g>
<g fill="#808080" stroke="#555" stroke-width=".8">
<circle cx="131.6" cy="232.3" r="1.25"/>
<circle cx="170.2" cy="301.8" r="1.25"/>
<circle cx="346.3" cy="418.2" r="1.25"/>
<circle cx="414.1" cy="491.6" r="1.25"/>
<circle cx="332.6" cy="314.5" r="1.25"/>
<circle cx="397.3" cy="336.8" r="1.25"/>
<circle cx="417.6" cy="362.4" r="1.25"/>
<circle cx="489.4" cy="370.9" r="1.25"/>
<circle cx="517.9" cy="223.6" r="1.25"/>
<circle cx="403.2" cy="637.6" r="1.25"/>
<circle cx="459.2" cy="670.3" r="1.25"/>
<circle cx="399.9" cy="696" r="1.25"/>
<circle cx="429.6" cy="723.1" r="1.25"/>
<circle cx="470" cy="735.7" r="1.25"/>
<circle cx="479.6" cy="738.9" r="1.25"/>
<circle cx="631.3" cy="696.6" r="1.25"/>
<circle cx="750.4" cy="745" r="1.25"/>
</g>
<text x="135.5" y="236.7" textLength="31.2" lengthAdjust="spacingAndGlyphs" font-size="9" font-weight="bold" fill="#515151" stroke="#fff" stroke-opacity=".8" stroke-width="2.800" paint-order="stroke" stroke-linejoin="round">Juneau</text>
<text x="174.5" y="305.4" textLength="60.9" lengthAdjust="spacingAndGlyphs" font-size="9" font-weight="bold" fill="#515151" stroke="#fff" stroke-opacity=".8" stroke-width="2.800" paint-order="stroke" stroke-linejoin="round">Prince Rupert</text>
<text x="244.3" y="383.5" textLength="46.2" lengthAdjust="spacingAndGlyphs" font-size="9" font-weight="bold" fill="#515151" stroke="#fff" stroke-opacity=".8" stroke-width="2.800" paint-order="stroke" stroke-linejoin="round">Vancouver</text>
<text x="212.1" y="407.8" textLength="31.2" lengthAdjust="spacingAndGlyphs" font-size="9" font-weight="bold" fill="#515151" stroke="#fff" stroke-opacity=".8" stroke-width="2.800" paint-order="stroke" stroke-linejoin="round">Seattle</text>
<text x="201.4" y="436.4" textLength="37.4" lengthAdjust="spacingAndGlyphs" font-size="9" font-weight="bold" fill="#515151" stroke="#fff" stroke-opacity=".8" stroke-width="2.800" paint-order="stroke" stroke-linejoin="round">Portland</text>
<text x="310.6" y="421.9" textLength="30.8" lengthAdjust="spacingAndGlyphs" font-size="9" font-weight="bold" fill="#515151" stroke="#fff" stroke-opacity=".8" stroke-width="2.800" paint-order="stroke" stroke-linejoin="round">Helena</text>
<text x="367.0" y="495.0" textLength="43.5" lengthAdjust="spacingAndGlyphs" font-size="9" font-weight="bold" fill="#515151" stroke="#fff" stroke-opacity=".8" stroke-width="2.800" paint-order="stroke" stroke-linejoin="round">Cheyenne</text>
<text x="181.3" y="536.3" textLength="60.4" lengthAdjust="spacingAndGlyphs" font-size="9" font-weight="bold" fill="#515151" stroke="#fff" stroke-opacity=".8" stroke-width="2.800" paint-order="stroke" stroke-linejoin="round">San Francisco</text>
<text x="230.8" y="588.9" textLength="52.0" lengthAdjust="spacingAndGlyphs" font-size="9" font-weight="bold" fill="#515151" stroke="#fff" stroke-opacity=".8" stroke-width="2.800" paint-order="stroke" stroke-linejoin="round">Los Angeles</text>
<text x="336.6" y="318.1" textLength="46.2" lengthAdjust="spacingAndGlyphs" font-size="9" font-weight="bold" fill="#515151" stroke="#fff" stroke-opacity=".8" stroke-width="2.800" paint-order="stroke" stroke-linejoin="round">Edmonton</text>
<text x="402.2" y="340.0" textLength="45.9" lengthAdjust="spacingAndGlyphs" font-size="9" font-weight="bold" fill="#515151" stroke="#fff" stroke-opacity=".8" stroke-width="2.800" paint-order="stroke" stroke-linejoin="round">Saskatoon</text>
<text x="421.8" y="366.1" textLength="30.1" lengthAdjust="spacingAndGlyphs" font-size="9" font-weight="bold" fill="#515151" stroke="#fff" stroke-opacity=".8" stroke-width="2.800" paint-order="stroke" stroke-linejoin="round">Regina</text>
<text x="493.2" y="375.0" textLength="41.9" lengthAdjust="spacingAndGlyphs" font-size="9" font-weight="bold" fill="#515151" stroke="#fff" stroke-opacity=".8" stroke-width="2.800" paint-order="stroke" stroke-linejoin="round">Winnipeg</text>
<text x="522.2" y="226.8" textLength="40.8" lengthAdjust="spacingAndGlyphs" font-size="9" font-weight="bold" fill="#515151" stroke="#fff" stroke-opacity=".8" stroke-width="2.800" paint-order="stroke" stroke-linejoin="round">Churchill</text>
<text x="695.9" y="428.6" textLength="40.1" lengthAdjust="spacingAndGlyphs" font-size="9" font-weight="bold" fill="#515151" stroke="#fff" stroke-opacity=".8" stroke-width="2.800" paint-order="stroke" stroke-linejoin="round">Montréal</text>
<text x="575.4" y="584.8" textLength="30.7" lengthAdjust="spacingAndGlyphs" font-size="9" font-weight="bold" fill="#515151" stroke="#fff" stroke-opacity=".8" stroke-width="2.800" paint-order="stroke" stroke-linejoin="round">Atlanta</text>
<text x="511.8" y="629.4" textLength="36.8" lengthAdjust="spacingAndGlyphs" font-size="9" font-weight="bold" fill="#515151" stroke="#fff" stroke-opacity=".8" stroke-width="2.800" paint-order="stroke" stroke-linejoin="round">Houston</text>
<text x="620.3" y="672.5" textLength="26.9" lengthAdjust="spacingAndGlyphs" font-size="9" font-weight="bold" fill="#515151" stroke="#fff" stroke-opacity=".8" stroke-width="2.800" paint-order="stroke" stroke-linejoin="round">Miami</text>
<text x="408.1" y="641.6" textLength="48.0" lengthAdjust="spacingAndGlyphs" font-size="9" font-weight="bold" fill="#515151" stroke="#fff" stroke-opacity=".8" stroke-width="2.800" paint-order="stroke" stroke-linejoin="round">Chihuahua</text>
<text x="463.9" y="674.0" textLength="46.6" lengthAdjust="spacingAndGlyphs" font-size="9" font-weight="bold" fill="#515151" stroke="#fff" stroke-opacity=".8" stroke-width="2.800" paint-order="stroke" stroke-linejoin="round">Monterrey</text>
<text x="355.7" y="699.6" textLength="39.7" lengthAdjust="spacingAndGlyphs" font-size="9" font-weight="bold" fill="#515151" stroke="#fff" stroke-opacity=".8" stroke-width="2.800" paint-order="stroke" stroke-linejoin="round">Mazatlán</text>
<text x="371.3" y="726.8" textLength="53.3" lengthAdjust="spacingAndGlyphs" font-size="9" font-weight="bold" fill="#515151" stroke="#fff" stroke-opacity=".8" stroke-width="2.800" paint-order="stroke" stroke-linejoin="round">Guadalajara</text>
<text x="422.3" y="747.1" textLength="43.9" lengthAdjust="spacingAndGlyphs" font-size="9" font-weight="bold" fill="#515151" stroke="#fff" stroke-opacity=".8" stroke-width="2.800" paint-order="stroke" stroke-linejoin="round">Ciudad de</text>
<text x="435.9" y="756.6" textLength="30.3" lengthAdjust="spacingAndGlyphs" font-size="9" font-weight="bold" fill="#515151" stroke="#fff" stroke-opacity=".8" stroke-width="2.800" paint-order="stroke" stroke-linejoin="round">México</text>
<text x="483.9" y="742.7" textLength="29.7" lengthAdjust="spacingAndGlyphs" font-size="9" font-weight="bold" fill="#515151" stroke="#fff" stroke-opacity=".8" stroke-width="2.800" paint-order="stroke" stroke-linejoin="round">Puebla</text>
<text x="579.8" y="700.4" textLength="47.1" lengthAdjust="spacingAndGlyphs" font-size="9" font-weight="bold" fill="#515151" stroke="#fff" stroke-opacity=".8" stroke-width="2.800" paint-order="stroke" stroke-linejoin="round">La Habana</text>
<text x="668.2" y="678.2" textLength="38.3" lengthAdjust="spacingAndGlyphs" font-size="9" font-weight="bold" fill="#515151" stroke="#fff" stroke-opacity=".8" stroke-width="2.800" paint-order="stroke" stroke-linejoin="round">Bahamas</text>
<text x="663.3" y="752.5" textLength="32.5" lengthAdjust="spacingAndGlyphs" font-size="9" font-weight="bold" fill="#515151" stroke="#fff" stroke-opacity=".8" stroke-width="2.800" paint-order="stroke" stroke-linejoin="round">Jamaica</text>
<text x="717.0" y="741.3" textLength="19.4" lengthAdjust="spacingAndGlyphs" font-size="9" font-weight="bold" fill="#515151" stroke="#fff" stroke-opacity=".8" stroke-width="2.800" paint-order="stroke" stroke-linejoin="round">Haiti</text>
<text x="728.6" y="707.3" textLength="40.4" lengthAdjust="spacingAndGlyphs" font-size="9" font-weight="bold" fill="#515151" stroke="#fff" stroke-opacity=".8" stroke-width="2.800" paint-order="stroke" stroke-linejoin="round">República</text>
<text x="724.1" y="718.0" textLength="49.8" lengthAdjust="spacingAndGlyphs" font-size="9" font-weight="bold" fill="#515151" stroke="#fff" stroke-opacity=".8" stroke-width="2.800" paint-order="stroke" stroke-linejoin="round">Dominicana</text>
<text x="755.0" y="748.4" textLength="25.0" lengthAdjust="spacingAndGlyphs" font-size="9" font-weight="bold" fill="#515151" stroke="#fff" stroke-opacity=".8" stroke-width="2.800" paint-order="stroke" stroke-linejoin="round">Santo</text>
<text x="558.8" y="761.2" textLength="23.8" lengthAdjust="spacingAndGlyphs" font-size="9" font-weight="bold" fill="#515151" stroke="#fff" stroke-opacity=".8" stroke-width="2.800" paint-order="stroke" stroke-linejoin="round">Belize</text>
<text x="531.0" y="777.5" textLength="46.2" lengthAdjust="spacingAndGlyphs" font-size="9" font-weight="bold" fill="#515151" stroke="#fff" stroke-opacity=".8" stroke-width="2.800" paint-order="stroke" stroke-linejoin="round">Guatemala</text>
<text x="385.0" y="285.1" textLength="43.0" lengthAdjust="spacingAndGlyphs" font-size="11.5" font-weight="bold" fill="#444" stroke="#fff" stroke-opacity=".8" stroke-width="2.800" paint-order="stroke" stroke-linejoin="round">Canada</text>
<text x="417.4" y="693.4" textLength="40.4" lengthAdjust="spacingAndGlyphs" font-size="12.3" font-weight="bold" fill="#444" stroke="#fff" stroke-opacity=".8" stroke-width="2.800" paint-order="stroke" stroke-linejoin="round">México</text>
<text x="650.1" y="713.4" textLength="22.4" lengthAdjust="spacingAndGlyphs" font-size="10.5" font-weight="bold" fill="#444" stroke="#fff" stroke-opacity=".8" stroke-width="2.800" paint-order="stroke" stroke-linejoin="round">Cuba</text>
<g opacity=".55"><text x="442.7" y="518.0" textLength="78.5" lengthAdjust="spacingAndGlyphs" font-size="11.5" font-weight="bold" fill="#444">United States</text></g>
</g>
<ellipse cx="722.1" cy="429.0" rx="6.5" ry="2.2" transform="rotate(-35 722.1 429.0)" fill="#000" opacity=".16"/><path d="M715.40 432.10C714.20 427.30 710.70 423.90 710.70 418.40a5.9 5.9 0 0 1 11.8 0C722.50 423.90 719.00 427.30 717.80 432.10a1.25 1.25 0 0 1-2.4 0z" fill="#a9cbee"/><circle cx="716.6" cy="418.5" r="2.2" fill="#fff"/>
<ellipse cx="248.7" cy="379.8" rx="6.5" ry="2.2" transform="rotate(-35 248.7 379.8)" fill="#000" opacity=".16"/><path d="M242.00 382.90C240.80 378.10 237.30 374.70 237.30 369.20a5.9 5.9 0 0 1 11.8 0C249.10 374.70 245.60 378.10 244.40 382.90a1.25 1.25 0 0 1-2.4 0z" fill="#3b7fcd"/><circle cx="243.2" cy="369.3" r="2.2" fill="#fff"/>
<ellipse cx="716.1" cy="496.5" rx="6.5" ry="2.2" transform="rotate(-35 716.1 496.5)" fill="#000" opacity=".16"/><path d="M709.40 499.60C708.20 494.80 704.70 491.40 704.70 485.90a5.9 5.9 0 0 1 11.8 0C716.50 491.40 713.00 494.80 711.80 499.60a1.25 1.25 0 0 1-2.4 0z" fill="#3b7fcd"/><circle cx="710.6" cy="486" r="2.2" fill="#fff"/>
<ellipse cx="585.5" cy="479.8" rx="6.5" ry="2.2" transform="rotate(-35 585.5 479.8)" fill="#000" opacity=".16"/><path d="M578.80 482.90C577.60 478.10 574.10 474.70 574.10 469.20a5.9 5.9 0 0 1 11.8 0C585.90 474.70 582.40 478.10 581.20 482.90a1.25 1.25 0 0 1-2.4 0z" fill="#4a4a4a"/><circle cx="580" cy="469.3" r="2.2" fill="#fff"/>
<ellipse cx="295.4" cy="575.3" rx="6.5" ry="2.2" transform="rotate(-35 295.4 575.3)" fill="#000" opacity=".16"/><path d="M288.70 578.40C287.50 573.60 284.00 570.20 284.00 564.70a5.9 5.9 0 0 1 11.8 0C295.80 570.20 292.30 573.60 291.10 578.40a1.25 1.25 0 0 1-2.4 0z" fill="#4a4a4a"/><circle cx="289.9" cy="564.8" r="2.2" fill="#fff"/>
<ellipse cx="502.6" cy="585.5" rx="6.5" ry="2.2" transform="rotate(-35 502.6 585.5)" fill="#000" opacity=".16"/><path d="M495.90 588.60C494.70 583.80 491.20 580.40 491.20 574.90a5.9 5.9 0 0 1 11.8 0C503.00 580.40 499.50 583.80 498.30 588.60a1.25 1.25 0 0 1-2.4 0z" fill="#4a4a4a"/><circle cx="497.1" cy="575" r="2.2" fill="#fff"/>
<ellipse cx="619.0" cy="576.1" rx="6.5" ry="2.2" transform="rotate(-35 619.0 576.1)" fill="#000" opacity=".16"/><path d="M612.30 579.20C611.10 574.40 607.60 571.00 607.60 565.50a5.9 5.9 0 0 1 11.8 0C619.40 571.00 615.90 574.40 614.70 579.20a1.25 1.25 0 0 1-2.4 0z" fill="#4a4a4a"/><circle cx="613.5" cy="565.6" r="2.2" fill="#fff"/>
</svg>
<div style="position:absolute;left:47px;top:222px;width:23px;height:44.500px;background:#fff;border-radius:3.500px;box-shadow:0 0 4px rgba(0,0,0,.55)"></div><div style="position:absolute;left:47px;top:243.500px;width:23px;height:1px;background:#ccc"></div><div style="position:absolute;left:54.300px;top:231.500px;width:8.400px;height:2.200px;background:#111"></div><div style="position:absolute;left:57.400px;top:228.400px;width:2.200px;height:8.400px;background:#111"></div><div style="position:absolute;left:55.300px;top:253.700px;width:6.400px;height:2.200px;background:#111"></div>
<div style="position:absolute;left:534.4px;top:218px;width:240.4px;height:40.3px;background:#fff"></div>
<svg class="abs" style="left:540.2px;top:224.6px" width="28" height="28" viewBox="0 0 28 28"><rect width="26.8" height="26.800" rx="5.500" fill="#f6c5a9"/><path fill="#fff" fill-opacity=".6" fill-rule="evenodd" d="M5.200 13.600c2-3.300 4.900-5 8.200-5s6.200 1.700 8.200 5c-2 3.300-4.900 5-8.200 5s-6.200-1.700-8.200-5zM6.900 13.600c1.700 2.400 3.900 3.700 6.500 3.700s4.800-1.300 6.500-3.700c-.9-1.300-2-2.300-3.300-2.900a3.900 3.900 0 1 1-6.400 0c-1.300.600-2.400 1.600-3.300 2.900z"/><path fill="#fff" fill-opacity=".6" d="M13.400 10.300a2.600 2.600 0 0 0-2.600 2.600h1.200a1.400 1.400 0 0 1 1.400-1.400z"/></svg>
<svg class="abs" style="left:571.7px;top:224.6px" width="28" height="28" viewBox="0 0 28 28"><rect width="26.8" height="26.800" rx="5.500" fill="#f0b90f"/><path fill="#fff" fill-opacity=".88" d="M6 7.200h3l.5 1.700h11.300l-1.400 5.800h-9.300l.3 1.400h9.200v1.300H9.300L7.600 8.600H6z"/><circle cx="10.800" cy="19.300" r="1.400" fill="#fff" fill-opacity=".88"/><circle cx="17.800" cy="19.300" r="1.400" fill="#fff" fill-opacity=".88"/></svg>
<svg class="abs" style="left:603.1px;top:224.6px" width="28" height="28" viewBox="0 0 28 28"><rect width="26.8" height="26.800" rx="5.500" fill="#922b62"/><text x="13.400" y="20.300" text-anchor="middle" font-family="Liberation Sans,sans-serif" font-weight="normal" font-size="19.500" fill="#fff" stroke="#fff" stroke-width=".15">$</text></svg>
<svg class="abs" style="left:634.4px;top:224.6px" width="28" height="28" viewBox="0 0 28 28"><rect width="26.8" height="26.800" rx="5.500" fill="#3a6fc4"/><path fill="#fff" fill-rule="evenodd" d="M13.400 21.300c-.9-3.200-4.300-6-4.300-9.900a4.300 4.300 0 0 1 8.600 0c0 3.900-3.400 6.700-4.300 9.900zM13.400 9.200a2 2 0 1 0 0 4 2 2 0 0 0 0-4z"/></svg>
<svg class="abs" style="left:666.4px;top:224.6px" width="28" height="28" viewBox="0 0 28 28"><rect width="26.8" height="26.800" rx="5.500" fill="#777"/><path fill="#fff" fill-rule="evenodd" d="M13.400 21.300c-.9-3.200-4.300-6-4.300-9.900a4.300 4.300 0 0 1 8.600 0c0 3.900-3.400 6.700-4.300 9.900zM13.400 9.200a2 2 0 1 0 0 4 2 2 0 0 0 0-4z"/></svg>
<svg class="abs" style="left:697.9px;top:224.6px" width="28" height="28" viewBox="0 0 28 28"><rect width="26.8" height="26.800" rx="5.500" fill="#a4c6ea"/><path fill="#fff" fill-rule="evenodd" d="M13.400 21.300c-.9-3.200-4.300-6-4.300-9.900a4.300 4.300 0 0 1 8.600 0c0 3.900-3.400 6.700-4.300 9.900zM13.400 9.200a2 2 0 1 0 0 4 2 2 0 0 0 0-4z"/></svg>
<div style="position:absolute;left:727.1px;top:222.4px;width:44px;height:29px;background:#f8f8f8;border-bottom:1px solid #c9c9c9"></div>
<svg class="abs" style="left:742.7px;top:232px" width="12" height="12" viewBox="0 0 12 12"><path fill="#222" d="M12 0v4.600L10.400 3 8 5.400 6.600 4 9 1.600 7.400 0zM0 12V7.400L1.600 9 4 6.600 5.400 8 3 10.400 4.600 12z"/></svg>
<div style="position:absolute;left:744.300px;top:765.800px;width:34.700px;height:11.700px;background:rgba(255,255,255,.75)"></div><div class="abs" style="left:747.500px;top:767.300px;font-size:9px;color:#0078a8">Leaflet</div>

<!-- metrics panel -->
<div class="panel" style="top:213px;height:312px"></div>
<div class="abs h2" style="left:815px;top:233px">Performance Metrics</div>
<div class="hline" style="left:815px;top:255px;width:338px"></div>
<div class="bline" style="left:815px;top:253.200px;width:160px;height:2.600px"></div>

<div style="position:absolute;left:815px;top:277px;width:162px;height:28px;background:#fff;border:1px solid #d9d9d9"></div>
<svg class="abs" style="left:826px;top:285px" width="11" height="12" viewBox="0 0 11 12"><path fill="#444" fill-rule="evenodd" d="M0 1.800h11V12H0zM1 4v1.600h2V4zm3 0v1.600h3V4zm4 0v1.600h2V4zM1 6.600v1.800h2V6.600zm3 0v1.800h3V6.600zm4 0v1.800h2V6.600zM1 9.400V11h2V9.400zm3 0V11h3V9.400zm4 0V11h2V9.400z"/><rect x="2.400" y="0" width="1.400" height="3" rx=".5" fill="#444"/><rect x="7.200" y="0" width="1.400" height="3" rx=".5" fill="#444"/></svg>
<div class="abs" style="left:840px;top:285px;font-size:12.5px;letter-spacing:-.36px;color:#333">Range</div>
<div style="position:absolute;left:977px;top:277px;width:176px;height:28px;border-radius:5px;border:1px solid #c8c8c8;background:linear-gradient(#fafafa,#e6e6e6);box-shadow:0 1px 3px rgba(0,0,0,.3)"></div>
<div class="abs" style="left:983.5px;top:285.5px;font-size:12.5px;letter-spacing:-.16px;color:#333">Rolling 182 Days</div>
<svg class="abs" style="left:1141px;top:286px" width="7" height="11" viewBox="0 0 7 11"><path fill="#333" d="M3.500 0L6.500 4.200h-6zM3.500 11L.5 6.800h6z"/></svg>

<div class="abs b" style="left:814.8px;letter-spacing:.08px;top:314px;font-size:12px">For the period :</div>
<div class="abs blue" style="left:938.8px;letter-spacing:-.12px;top:313.8px;font-size:12.5px">May 25 2015</div>
<div class="abs" style="left:1036.8px;top:313.8px;font-size:12.5px;color:#444">to</div>
<div class="abs blue" style="right:47px;letter-spacing:-.08px;top:313.8px;font-size:12.5px">Nov 22 2015</div>
<div class="abs b" style="left:814.8px;letter-spacing:.08px;top:332px;font-size:12px">Compared to :</div>
<div class="abs blue" style="left:938.8px;letter-spacing:-.12px;top:331.8px;font-size:12.5px">Nov 24 2014</div>
<div class="abs" style="left:1036.8px;top:331.8px;font-size:12.5px;color:#444">to</div>
<div class="abs blue" style="right:47px;letter-spacing:-.08px;top:331.8px;font-size:12.5px">May 24 2015</div>

<div style="position:absolute;left:815px;top:351px;width:338px;height:165px;background:#fff;border:1px solid #d6d6d6"></div>
<div class="hline" style="left:815px;top:405px;width:338px;background:#d6d6d6"></div>
<div class="hline" style="left:815px;top:460px;width:338px;background:#d6d6d6"></div>


<!-- row 1 -->
<div class="abs" style="left:822px;top:362px;font-size:17.5px;letter-spacing:0px;color:#333">118.84K</div>
<svg class="abs" style="left:822px;top:385px" width="13" height="9" viewBox="0 0 19 13"><path fill="#eec5ad" fill-rule="evenodd" d="M9.500.8C5.200.8 1.900 3.700.4 6.500c1.500 2.800 4.800 5.700 9.100 5.700s7.600-2.900 9.100-5.700C17.100 3.700 13.800.8 9.500.8zM9.500 2.200a4.300 4.300 0 1 1 0 8.600 4.300 4.300 0 0 1 0-8.600zM9.500 3.800a2.700 2.700 0 1 0 2.700 2.700c0-.3 0-.5-.1-.8a1.500 1.500 0 0 1-2-2c-.2.100-.4.100-.6.100z"/></svg>
<div class="abs b" style="left:838px;top:384px;font-size:12.5px;letter-spacing:.15px;color:#eabfa4">Demand Rank</div>
<svg class="abs" style="left:989px;top:370px" width="16" height="15" viewBox="0 0 16 15"><path fill="#3a9d32" d="M8 0l7.700 7.700-2.300 2.300-3.600-3.600V15H6.200V6.400L2.600 10 .3 7.700z"/></svg>
<div class="abs" style="left:1010.4px;top:370px;font-size:17.5px;letter-spacing:-.28px;color:#3a9d32">0.43%</div>
<svg class="abs" style="left:1123px;top:368px" width="18" height="18" viewBox="0 0 18 18"><circle cx="9" cy="9" r="8.600" fill="#3b6bd6"/><path fill="#fff" d="M7.500 3.200h3l-.4 7.300H7.900z"/><rect x="7.600" y="11.700" width="2.800" height="2.800" rx=".4" fill="#fff"/></svg>
<!-- row 2 -->
<div class="abs" style="left:822px;top:416.2px;font-size:17.5px;letter-spacing:0px;color:#333">$ 9.17M</div>
<svg class="abs" style="left:822px;top:441px" width="12" height="11" viewBox="0 0 17 15"><path fill="#e8b800" d="M0 .6h2.800l.5 1.600h13.200l-1.400 6.200H4.900l.3 1.300h10.100v1.400H4.100L2 2H0z"/><circle cx="5.600" cy="13" r="1.500" fill="#e8b800"/><circle cx="13.400" cy="13" r="1.500" fill="#e8b800"/></svg>
<div class="abs b" style="left:838px;top:441px;font-size:12.5px;color:#e8b800">Product Rank</div>
<svg class="abs" style="left:989px;top:425px" width="16" height="15" viewBox="0 0 16 15"><path fill="#3a9d32" d="M8 0l7.700 7.700-2.300 2.300-3.600-3.600V15H6.200V6.400L2.600 10 .3 7.700z"/></svg>
<div class="abs" style="left:1010.4px;top:425px;font-size:17.5px;letter-spacing:-.28px;color:#3a9d32">2.09%</div>
<svg class="abs" style="left:1123px;top:423px" width="18" height="18" viewBox="0 0 18 18"><circle cx="9" cy="9" r="8.600" fill="#3b6bd6"/><path fill="#fff" d="M7.500 3.200h3l-.4 7.300H7.900z"/><rect x="7.600" y="11.700" width="2.800" height="2.800" rx=".4" fill="#fff"/></svg>
<!-- row 3 -->
<div class="abs" style="left:822px;top:471.2px;font-size:17.5px;letter-spacing:-0.1px;color:#333">$ 464.40K</div>
<div class="abs b" style="left:824px;top:494.5px;font-size:12.5px;color:#8b2a5c">$</div>
<div class="abs b" style="left:838px;top:494.5px;font-size:12.5px;letter-spacing:.12px;color:#8b2a5c">Inventory Rank</div>
<svg class="abs" style="left:989px;top:480px" width="16" height="15" viewBox="0 0 16 15"><path fill="#3a9d32" d="M8 0l7.700 7.700-2.300 2.300-3.600-3.600V15H6.200V6.400L2.600 10 .3 7.700z"/></svg>
<div class="abs" style="left:1010.4px;top:480px;font-size:17.5px;letter-spacing:-.28px;color:#3a9d32">1.55%</div>
<svg class="abs" style="left:1123px;top:478px" width="18" height="18" viewBox="0 0 18 18"><circle cx="9" cy="9" r="8.600" fill="#3b6bd6"/><path fill="#fff" d="M7.500 3.200h3l-.4 7.300H7.900z"/><rect x="7.600" y="11.700" width="2.800" height="2.800" rx=".4" fill="#fff"/></svg>


<!-- forecast panel -->
<div class="panel" style="top:547px;height:228px"></div>
<div class="abs h2" style="left:815px;top:565.500px;letter-spacing:-.5px">Forecast</div>
<div class="hline" style="left:815px;top:588px;width:338px"></div>
<div class="bline" style="left:815px;top:586.200px;width:64px;height:2.600px"></div>
<div class="abs" style="left:815px;top:604px;font-size:13.5px;letter-spacing:.14px;color:#333">Forecasted Opportunity for next 52 weeks:</div>
<div style="position:absolute;left:815px;top:620px;width:338px;height:21px;border-radius:3px;background:#3b6bd6;overflow:hidden"><div style="width:212px;height:21px;background:#3a9d32"></div></div>
<div class="abs b" style="left:821px;top:667px;font-size:18px;letter-spacing:-.11px;color:#3a9d32">$ 1.82M</div>
<div class="abs" style="left:821px;top:691px;font-size:11.5px;color:#333">Current Forecast</div>
<div class="abs b" style="left:1010.600px;top:667px;font-size:18px;letter-spacing:-.23px;color:#3b6bd6">$ 1.09M</div>
<div class="abs" style="left:1010.600px;top:691px;font-size:11.5px;letter-spacing:.4px;color:#333">Opportunity</div>
<div class="hline" style="left:815px;top:710px;width:338px"></div>
<div style="position:absolute;left:888px;top:736px;width:193px;height:29px;background:#3b6bd6;border-bottom:1px solid #2d55b0"></div>
<div class="abs b" style="left:905px;top:744px;font-size:12.5px;color:#fff">Optimize Your Opportunity</div>
</body>
</html>
